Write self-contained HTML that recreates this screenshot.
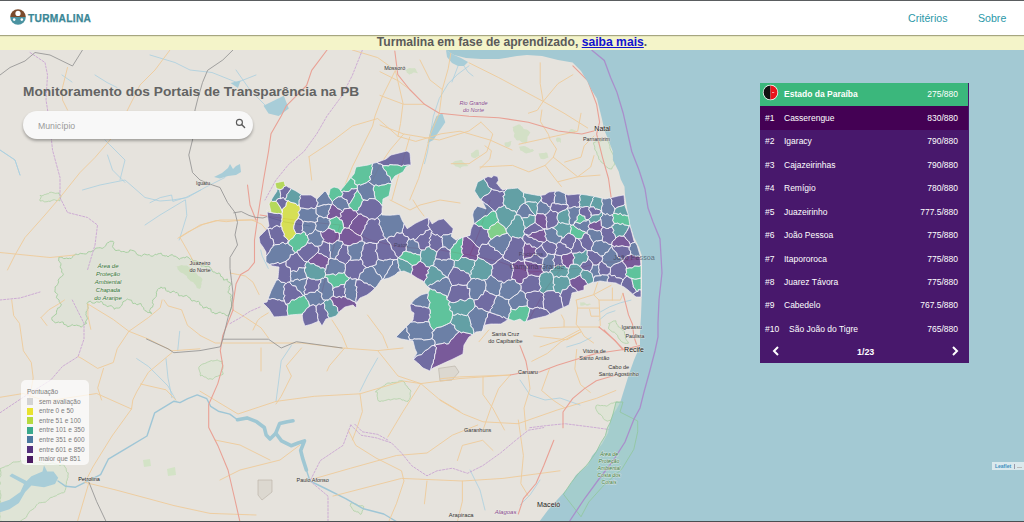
<!DOCTYPE html>
<html><head><meta charset="utf-8"><title>Turmalina</title>
<style>
*{box-sizing:border-box}
html,body{margin:0;padding:0;width:1024px;height:522px;overflow:hidden;background:#e6e3dd;font-family:"Liberation Sans",sans-serif}
#map{position:absolute;left:0;top:0;width:1024px;height:522px;overflow:hidden}
#map svg{position:absolute;left:0;top:0}
#topline{position:absolute;left:0;top:0;width:1024px;height:1px;background:#5a5d60;z-index:20}
#botline{position:absolute;left:0;top:521px;width:1024px;height:1px;background:#4a4f52;z-index:20}
#hdr{position:absolute;left:0;top:1px;width:1024px;height:34px;background:#fff;z-index:10;box-shadow:0 1px 1px rgba(70,70,40,.45)}
#logo{position:absolute;left:10px;top:8.4px;width:16px;height:16px}
#brand{position:absolute;left:28px;top:11.7px;font-weight:700;font-size:10.2px;letter-spacing:0.3px;color:#3a8796;-webkit-text-stroke:0.25px #3a8796}
.nav{position:absolute;top:10.5px;font-size:10.6px;color:#2a98a8}
#banner{position:absolute;left:0;top:35px;width:1024px;height:15px;background:#f4f4c9;z-index:9;text-align:center;font-weight:700;font-size:12.15px;line-height:15px;color:#5a5a5a}
#banner a{color:#1212d0;text-decoration:underline}
#title{position:absolute;left:23px;top:84px;font-size:13.7px;font-weight:700;color:#636363;white-space:nowrap;z-index:5}
#search{position:absolute;left:23px;top:110.5px;width:230px;height:28.5px;border-radius:15px;background:#f8f8f8;box-shadow:0 2px 3px rgba(0,0,0,.3);z-index:5}
#search span{position:absolute;left:15px;top:10px;font-size:8.7px;color:#9a9a9a}
#panel{position:absolute;left:760px;top:83px;width:208.5px;height:280px;background:#48186c;z-index:5;color:#fff;font-size:8.5px}
.row{position:absolute;left:0;width:208px;height:23.45px}
.row .n{position:absolute;left:5px;top:6.4px}
.row .m{position:absolute;left:24px;top:6.4px}
.row .v{position:absolute;right:10px;top:6.4px}
#legend{position:absolute;left:21px;top:380px;width:68px;height:85px;border-radius:5px;background:rgba(255,255,255,.72);z-index:5;font-size:6.5px;color:#7c7c7c}
#legend .it{position:absolute;left:6px;height:8px}
#legend .sw{position:absolute;left:0;top:0;width:6px;height:7px}
#legend .lb{position:absolute;left:12px;top:-0.5px;white-space:nowrap}
#attr{position:absolute;left:992px;top:462px;width:32px;height:8px;background:rgba(255,255,255,.6);z-index:5;font-size:5px;color:#3a8fbf;font-weight:700}
</style></head><body>
<div id="topline"></div>
<div id="hdr">
 <svg id="logo" viewBox="0 0 16 16" width="16" height="16">
  <path d="M0.2 8 A7.8 7.8 0 0 1 15.8 8 Z" fill="#7b4b2c"/>
  <path d="M0.2 8 A7.8 7.8 0 0 0 15.8 8 Z" fill="#4b93a1"/>
  <circle cx="8" cy="4.4" r="2.6" fill="#fff"/>
  <circle cx="4.2" cy="10.6" r="1.3" fill="#fff"/>
  <circle cx="11.8" cy="10.6" r="1.3" fill="#fff"/>
 </svg>
 <div id="brand">TURMALINA</div>
 <div class="nav" style="left:908px">Critérios</div>
 <div class="nav" style="left:978px">Sobre</div>
</div>
<div id="banner">Turmalina em fase de aprendizado, <a>saiba mais</a>.</div>
<div id="map"><svg width="1024" height="522" viewBox="0 0 1024 522">
<rect width="1024" height="522" fill="#e6e3dd"/>
<polygon points="58.9,257.2 60.4,257.2 61.9,257.3 63.7,258.6 65.2,258.5 66.6,258.1 68.1,258.6 69.5,258.2 71.1,258.6 72.3,257.3 73.3,255.5 74.6,254.9 75.9,254.0 77.5,254.6 78.9,254.3 80.2,253.3 81.9,253.6 83.5,253.7 85.1,254.0 86.6,253.8 87.8,252.1 89.2,251.6 90.9,251.8 92.1,251.0 93.6,250.7 94.7,249.7 95.6,248.2 97.1,248.0 98.6,247.8 100.2,247.7 102.1,248.4 103.4,247.8 104.5,246.7 105.7,245.8 106.5,243.9 107.5,242.7 109.0,242.3 110.0,241.2 113.1,241.3 113.8,242.5 113.3,244.5 112.5,246.7 113.3,247.9 114.3,248.9 115.0,250.2 117.0,250.6 117.8,250.2 119.3,250.2 121.1,251.7 122.6,251.5 124.1,251.5 125.8,252.4 127.3,252.3 128.8,252.0 129.9,249.9 131.5,250.2 133.1,250.6 134.6,251.0 135.7,252.4 136.7,254.2 138.0,255.0 139.6,255.4 141.5,256.1 143.1,254.7 144.6,254.0 146.1,254.6 147.6,254.9 149.1,254.5 150.5,255.8 152.0,256.3 153.5,255.9 155.1,254.2 156.6,254.7 158.1,253.8 159.6,253.5 161.2,253.2 162.4,255.4 163.8,255.6 165.2,256.0 166.7,255.7 168.0,256.9 169.5,255.6 170.9,255.0 172.4,254.6 173.7,256.3 175.1,256.1 176.5,257.0 177.8,257.7 179.1,259.4 180.6,258.3 182.1,257.9 183.5,257.4 184.9,257.9 186.4,256.7 187.8,257.1 189.1,258.1 190.5,259.4 191.3,258.6 192.5,259.6 193.3,261.0 195.5,260.8 197.0,261.3 198.4,262.1 200.1,262.4 200.4,264.5 201.3,266.2 203.3,265.7 204.6,266.2 206.0,266.8 208.0,266.1 209.4,266.6 210.3,268.0 211.5,268.9 212.1,270.7 213.1,272.0 214.7,272.1 215.8,273.0 217.2,273.6 219.2,272.9 220.2,274.1 220.7,276.3 222.1,276.7 223.1,278.0 223.6,280.1 225.5,279.7 227.4,279.0 227.2,280.5 228.1,281.8 230.4,282.8 231.3,284.1 229.9,285.8 229.0,287.4 229.3,288.8 228.9,290.4 227.9,292.0 228.8,293.3 230.8,294.3 231.3,295.7 230.6,297.3 231.0,298.6 230.7,299.9 231.1,301.4 231.9,302.9 231.8,304.3 232.3,305.8 231.5,307.1 231.7,308.6 230.6,309.9 230.3,311.3 229.8,312.6 229.5,314.2 227.7,315.7 226.2,315.5 224.8,314.2 223.4,313.4 221.8,313.5 220.5,312.1 218.9,312.4 217.1,313.5 214.9,313.8 214.0,312.5 212.2,312.7 211.2,311.5 210.8,308.9 209.3,308.7 207.8,308.4 206.9,307.0 205.0,307.6 203.1,308.1 202.4,306.2 201.3,305.2 199.9,304.7 199.5,302.3 198.4,301.2 196.5,301.8 195.3,301.1 193.9,300.5 192.0,301.1 190.9,300.0 190.2,298.2 188.9,297.5 187.7,296.6 186.7,295.4 185.0,295.8 183.1,296.5 181.9,295.7 180.4,295.7 178.8,295.8 178.1,293.7 177.1,292.5 175.5,292.7 174.4,291.6 173.1,291.1 170.9,292.6 169.5,292.3 168.5,291.0 166.8,291.3 165.8,290.2 165.3,287.8 163.6,288.0 162.0,288.1 161.0,286.9 160.3,288.2 158.6,288.6 157.5,289.5 157.1,291.0 156.3,292.2 156.6,294.2 156.3,295.0 156.3,296.4 155.3,297.6 154.2,298.8 152.6,300.0 152.7,301.4 152.4,302.8 153.5,304.4 152.9,305.7 152.6,307.1 150.6,308.2 150.1,309.5 149.4,310.8 150.6,312.4 151.4,313.9 150.8,312.2 148.9,312.6 147.3,312.3 146.4,311.1 145.0,310.7 144.0,309.6 143.6,307.7 142.5,306.8 141.6,305.6 140.9,303.5 139.1,303.9 137.0,304.9 136.0,303.8 134.7,303.3 132.9,303.6 132.1,302.0 131.5,300.2 130.0,300.0 128.6,299.6 127.4,299.0 126.7,299.4 125.8,300.6 124.3,301.1 122.9,301.9 122.5,303.6 121.9,305.2 120.8,306.3 120.0,307.6 118.4,308.1 116.2,308.0 114.7,308.6 114.4,309.3 113.7,307.7 112.4,306.9 111.4,305.6 109.3,306.0 107.1,306.7 106.1,305.3 104.7,304.8 103.1,304.4 102.5,302.4 101.0,301.4 99.5,302.3 97.9,302.0 96.4,301.7 94.9,303.0 93.4,303.2 91.8,302.8 90.3,301.0 87.9,302.2 87.1,303.5 87.9,305.2 87.8,306.6 88.3,308.2 87.4,309.4 87.1,310.8 86.0,311.9 86.2,313.4 85.9,314.8 86.4,315.7 87.1,317.2 87.4,318.8 86.1,320.8 85.1,322.7 86.8,323.1 85.4,324.0 84.0,324.6 82.6,325.8 81.3,327.2 79.7,326.0 78.2,325.6 76.6,325.1 75.2,325.5 73.7,325.5 72.1,324.6 70.8,325.7 69.2,326.3 67.5,326.8 66.6,325.1 65.2,324.7 63.8,324.3 63.1,322.0 61.6,322.0 59.8,322.7 58.6,322.0 56.9,322.5 55.3,322.8 54.1,321.9 53.0,320.6 52.1,320.2 51.7,318.3 52.3,317.0 53.8,316.2 54.7,315.0 56.3,314.2 56.5,312.7 56.5,311.0 57.2,309.7 57.5,308.2 59.4,307.6 60.8,305.7 61.3,304.1 60.0,302.9 59.2,301.5 59.1,300.1 57.8,298.9 56.3,297.7 56.8,296.1 57.6,294.4 56.4,293.1 54.9,292.0 55.0,290.4 55.2,288.6 55.1,286.9 56.5,285.9 57.4,284.7 58.1,283.3 58.6,281.9 58.1,280.1 59.1,278.9 59.9,277.6 61.6,276.7 63.3,274.8 62.9,273.4 61.6,272.1 61.7,270.7 61.7,269.2 60.5,268.0 60.2,266.6 60.9,265.0 60.9,263.6 60.1,262.3 58.7,261.0" fill="#dfe2d7" stroke="#a9d0a3" stroke-width="1"/>
<polygon points="0.1,468.6 1.5,468.1 2.8,467.5 4.2,467.1 5.5,466.2 6.9,465.9 8.3,465.6 9.5,464.6 10.8,463.9 12.0,462.8 13.2,462.0 14.8,462.0 16.3,461.9 17.8,461.8 19.4,461.7 20.3,460.9 21.8,461.0 23.2,461.0 24.6,461.1 26.1,460.4 27.5,461.2 28.8,461.8 30.2,462.5 31.7,462.3 33.0,463.2 34.4,463.1 35.9,462.7 37.4,462.0 38.8,462.6 40.2,462.6 41.7,462.6 43.0,463.2 44.4,464.0 45.8,464.1 47.3,463.6 48.7,463.8 50.2,463.6 51.6,463.2 53.1,462.7 54.4,463.8 55.9,464.1 57.2,464.5 58.7,464.5 60.0,465.4 61.5,464.7 63.5,464.7 64.4,465.9 65.0,467.1 66.0,468.2 66.3,469.8 66.5,471.5 67.5,472.5 68.1,472.7 68.2,474.3 67.9,475.8 68.1,477.4 67.4,478.7 67.2,480.2 66.4,481.6 66.5,483.1 66.1,484.6 66.3,486.2 65.9,487.6 65.6,489.1 65.0,490.5 64.6,492.1 63.3,492.8 61.7,492.9 60.4,493.5 59.1,494.0 57.7,494.5 56.5,495.6 55.2,496.1 53.7,496.5 52.5,497.2 51.0,497.5 49.7,498.2 48.7,499.6 47.6,500.3 46.5,501.3 45.4,502.2 43.8,502.3 42.3,502.5 40.8,502.7 39.1,502.8 38.0,503.7 37.0,504.7 35.9,505.7 35.2,507.3 34.2,508.4 33.0,509.1 32.1,509.8 30.7,510.6 29.4,511.5 28.7,512.9 27.8,514.1 27.1,515.5 26.5,517.1 25.3,518.0 23.8,518.9 22.4,519.7 21.0,520.7 20.0,521.6 18.6,521.6 17.1,521.7 15.7,521.7 14.3,521.5 12.9,522.1 11.4,523.1 10.0,523.2 8.6,523.0 7.1,522.7 5.7,523.0 4.3,522.1 2.9,521.6 1.4,521.3 -0.2,522.0 -0.3,520.6 -0.4,519.2 -0.2,517.8 0.1,516.3 -0.4,514.9 -0.3,513.5 -0.4,512.1 -0.8,510.7 -0.8,509.3 -1.0,507.9 -0.3,506.5 0.9,505.0 0.9,503.6 0.7,502.2 -0.0,500.8 -0.2,499.4 0.6,498.0 0.7,496.6 0.9,495.1 0.6,493.7 0.0,492.3 0.1,490.9 -0.6,489.5 -1.1,488.1 -0.9,486.7 -0.6,485.3 0.3,483.8 0.2,482.4 -0.6,481.0 -0.8,479.6 -0.8,478.2 0.2,476.8 0.9,475.4 0.7,474.0 0.9,472.5 0.6,471.1 0.4,469.7" fill="#dfe4d6" stroke="#b0d2a6" stroke-width="0.8"/>
<polygon points="40.0,195.3 41.6,195.8 43.0,195.5 44.3,194.6 45.7,194.4 47.1,193.8 48.5,193.6 49.8,192.4 51.3,192.2 52.8,192.6 54.3,193.0 55.8,193.4 57.2,193.0 58.7,193.6 58.9,192.5 59.3,193.9 60.2,195.3 61.0,196.8 60.4,198.2 60.0,199.6 60.0,200.9 58.6,200.4 57.1,200.6 55.7,200.2 54.3,199.7 52.9,200.0 51.4,200.7 50.0,201.4 48.6,201.2 47.1,201.7 45.7,201.8 44.3,201.8 42.9,200.7 41.4,200.9 40.0,201.0 39.9,199.5 40.8,198.0 41.1,196.5" fill="#dfe4d6" stroke="#b0d2a6" stroke-width="0.8"/>
<polygon points="200.0,365.8 201.3,364.8 202.7,364.0 204.3,363.6 205.8,363.1 207.2,362.3 208.7,361.7 210.0,361.2 211.4,360.5 212.8,361.0 214.3,360.7 215.7,360.5 217.1,359.9 218.5,360.7 220.0,361.2 221.4,361.6 222.1,360.8 222.1,362.2 222.0,363.6 222.7,365.0 222.8,366.4 222.9,367.9 222.6,369.3 221.9,370.7 222.6,372.1 223.2,374.1 221.9,374.9 220.4,375.2 218.9,375.7 217.5,376.3 216.0,376.6 214.7,377.3 213.6,378.5 212.9,379.3 211.4,379.0 210.0,378.7 208.3,379.2 207.0,378.3 205.8,377.2 204.3,377.1 203.1,375.9 201.7,375.3 200.6,376.0 200.2,374.5 200.4,373.1 199.7,371.6 199.3,370.2 198.8,368.7 198.8,367.3" fill="#dfe4d6" stroke="#b0d2a6" stroke-width="0.8"/>
<polygon points="375.4,391.8 376.6,390.9 377.6,389.8 378.9,389.1 380.2,388.3 381.3,387.3 382.7,386.6 384.0,385.9 385.0,384.7 386.3,383.9 387.7,383.1 389.1,383.0 390.6,383.3 391.9,382.6 393.3,382.5 394.7,382.4 396.1,382.3 397.5,382.2 398.7,381.1 400.1,380.9 401.5,380.7 402.9,381.1 404.0,382.0 405.0,383.1 405.3,384.6 406.2,385.7 407.4,386.5 408.0,387.9 408.9,389.0 410.2,389.8 410.9,391.2 410.2,392.6 410.0,394.1 410.4,395.8 410.2,397.3 409.9,398.8 408.6,400.0 408.0,401.4 406.5,401.3 405.0,400.9 403.6,400.0 402.0,400.1 400.7,398.9 399.2,398.6 397.6,398.9 396.0,399.2 394.6,398.8 393.1,399.1 391.7,399.6 390.3,400.0 388.7,399.4 387.3,399.8 385.9,400.3 384.5,400.6 383.1,401.1 381.6,400.9 380.0,401.5 378.3,400.8 377.7,399.5 377.6,397.9 377.2,396.5 377.1,394.9 377.5,393.1 376.9,391.8" fill="#dfe4d6" stroke="#b0d2a6" stroke-width="0.8"/>
<polygon points="596.2,405.5 597.6,405.0 599.0,405.3 600.5,405.7 601.9,405.4 603.4,405.7 604.8,405.6 606.4,406.1 607.7,405.6 609.0,404.6 610.3,403.8 611.7,403.1 613.1,403.2 614.4,402.3 615.8,402.0 617.2,402.0 618.8,402.6 620.3,403.2 621.3,402.3 621.6,403.8 621.8,405.3 621.1,406.8 620.8,408.3 621.5,409.8 621.7,411.3 622.3,412.8 622.3,414.3 622.5,415.8 622.6,417.3 621.8,418.8 621.4,420.3 621.7,421.3 620.1,421.9 618.7,422.2 617.3,421.6 615.9,420.9 614.5,420.7 613.1,420.7 611.8,419.8 610.3,420.2 608.8,420.7 607.3,421.1 605.7,420.3 604.2,419.6 603.1,418.2 602.5,416.4 601.2,415.3 600.2,414.1 598.8,413.9 597.8,412.4 596.9,411.0 596.2,409.5 595.6,408.0" fill="#dfe4d6" stroke="#b0d2a6" stroke-width="0.8"/>
<polygon points="351.0,502.9 352.5,502.8 353.8,503.5 355.2,503.9 356.6,504.1 357.8,505.5 359.2,505.7 360.7,505.8 362.2,505.6 363.7,506.4 363.6,508.0 363.2,509.6 362.2,511.0 361.9,512.6 360.9,514.4 359.4,513.6 358.3,511.9 356.5,511.9 355.1,511.0 354.0,511.2 353.0,509.8 352.1,508.4 351.3,507.0 350.2,505.7" fill="#dfe4d6" stroke="#b0d2a6" stroke-width="0.8"/>
<polygon points="593.5,142.7 595.0,142.1 596.4,141.6 598.0,141.8 599.6,141.9 601.0,141.0 602.5,140.6 604.0,140.5 605.4,140.0 607.0,140.8 608.5,141.6 608.9,143.2 609.5,144.7 610.0,146.2 609.9,148.1 610.3,149.1 610.9,150.6 611.7,151.9 612.4,153.3 613.2,154.7 613.9,156.1 613.9,157.7 613.4,159.3 613.7,160.8 614.6,162.1 614.6,163.8 614.0,165.3 612.8,166.6 611.9,168.0 611.8,169.0 610.0,168.9 608.4,168.4 607.1,167.3 605.7,166.5 604.8,165.4 604.2,164.0 602.8,163.2 601.4,162.3 600.7,161.0 599.6,160.0 598.7,158.8 598.6,157.0 597.9,155.7 597.2,154.7 596.9,153.1 596.4,151.7 595.4,150.4 594.7,149.0 594.8,147.4 594.5,145.9 593.8,144.5" fill="#dfe4d6" stroke="#b0d2a6" stroke-width="0.8"/>
<polygon points="608.5,323.6 610.1,323.1 611.7,322.1 613.2,321.1 615.8,320.8 616.1,322.7 616.8,324.1 617.8,325.3 618.4,326.9 619.8,327.4 621.1,328.4 621.9,329.7 623.4,330.6 624.5,331.7 624.6,333.4 625.0,335.0 625.5,336.4 625.3,338.0 625.8,339.4 627.0,340.5 627.8,341.7 628.5,343.1 626.7,343.4 624.8,343.2 623.4,342.7 621.9,341.9 620.7,340.9 620.0,339.5 618.7,338.6 618.0,337.1 617.6,335.4 616.4,334.4 615.4,333.2 614.3,332.2 612.4,331.9 611.2,331.1 610.2,329.9 608.5,328.6 608.8,326.6 609.6,324.5" fill="#dfe4d6" stroke="#b0d2a6" stroke-width="0.8"/>
<polygon points="175.0,266.3 176.7,266.2 178.3,266.2 180.0,265.4 181.7,264.9 183.4,265.6 185.1,265.4 186.7,265.4 187.9,265.9 188.9,267.2 190.4,267.9 191.5,269.1 193.0,269.8 194.4,270.7 195.1,272.3 196.4,273.3 197.3,274.6 198.3,275.9 200.0,276.5 201.2,277.6 202.5,279.1 202.2,280.7 201.5,282.3 201.6,284.0 201.1,285.6 201.1,287.3 199.7,289.1 198.3,288.5 196.8,287.9 196.2,286.3 195.4,284.8 194.3,283.8 193.5,282.4 192.1,281.7 190.5,281.2 189.6,280.0 188.4,279.0 187.3,277.8 186.8,276.1 185.5,275.2 184.2,274.2 183.0,273.2 181.1,272.8 179.8,271.8 178.9,270.5 177.7,269.4 177.4,267.5 176.8,265.9" fill="#cfdfc2"/>
<polygon points="512.6,127.1 514.1,126.5 515.5,125.7 516.9,125.2 518.3,124.4 520.2,124.4 521.1,125.9 522.5,126.8 523.3,128.5 524.7,129.3 526.8,129.4 528.1,130.3 530.4,132.4 529.5,133.8 528.8,135.2 527.6,136.5 527.5,138.1 527.3,139.7 527.4,141.4 525.8,143.6 524.2,142.8 522.4,142.8 520.9,141.6 519.5,140.3 517.7,140.4 516.2,140.0 515.4,138.4 514.0,137.1 513.9,135.3 514.6,133.4 513.8,131.9 513.0,130.4 513.2,128.6" fill="#d3e0c6"/>
<polygon points="519.0,146.8 520.6,146.5 522.2,146.3 523.8,146.1 525.4,146.3 526.3,146.9 527.8,147.4 529.1,148.3 530.4,149.4 532.5,149.0 534.0,150.5 532.6,151.7 531.0,152.3 529.3,152.8 527.5,153.1 526.6,153.4 524.8,152.9 523.4,151.9 522.0,151.0 520.3,150.4 519.8,148.5" fill="#d3e0c6"/>
<polygon points="538.6,153.5 540.5,153.3 542.3,153.1 544.2,152.9 546.1,152.2 547.5,153.5 547.8,155.4 548.5,157.4 546.9,158.0 545.3,158.8 543.6,159.2 541.8,158.9 540.5,158.8 540.0,157.3 539.3,156.0 539.0,154.5" fill="#d3e0c6"/>
<polygon points="504.5,142.7 506.1,142.3 507.8,142.2 509.4,141.5 511.6,141.1 510.9,142.6 510.9,144.3 510.0,146.3 508.3,147.3 506.7,147.1 504.8,145.8 504.6,143.9" fill="#d3e0c6"/>
<polygon points="556.5,137.7 558.1,137.6 559.8,137.8 560.2,137.6 560.9,139.3 560.9,140.9 561.0,142.9 559.0,141.5 557.9,142.5 556.2,141.1 556.0,139.6" fill="#d3e0c6"/>
<polygon points="569.6,130.1 571.1,129.1 572.8,129.2 574.4,130.2 575.5,129.4 575.3,131.1 575.0,133.5 573.3,133.6 571.7,133.6 568.3,133.0" fill="#d3e0c6"/>
<polygon points="580.3,302.3 581.8,302.5 583.4,302.3 584.9,302.8 586.3,303.9 587.9,304.0 589.5,303.6 591.1,304.2 589.2,305.0 588.5,305.6 586.8,305.8 585.3,304.8 583.5,305.6 581.8,305.8 580.1,305.5" fill="#d3e0c6"/>
<polygon points="452.1,163.3 453.5,162.0 455.1,161.1 456.8,160.8 458.5,160.6 460.2,160.1 462.1,159.9 462.6,161.8 463.9,162.6 465.2,163.4 466.6,164.2 468.5,166.0 466.6,166.3 464.6,166.2 462.7,166.4 461.1,167.2 460.4,168.5 459.1,167.4 457.5,166.8 455.6,166.6 454.5,165.2 453.1,164.3" fill="#d3e0c6"/>
<polygon points="405.1,70.3 406.7,69.6 408.2,68.4 409.8,68.0 411.6,68.2 413.3,68.3 414.8,68.1 416.1,69.6 416.7,71.5 418.1,73.3 416.4,73.0 414.7,72.4 413.2,72.5 411.9,73.7 410.4,74.1 409.3,74.7 408.2,73.6 406.8,72.7 406.3,71.0" fill="#d3e0c6"/>
<polygon points="470.3,153.3 471.9,152.9 473.4,152.1 474.8,150.7 476.2,149.8 478.5,149.8 478.8,151.4 479.2,152.9 478.9,154.7 479.9,155.3 478.4,156.2 476.9,157.1 475.4,158.2 473.7,157.9 471.7,157.1 470.9,155.5 471.2,153.5" fill="#d3e0c6"/>
<polygon points="143.0,460.0 150.0,459.0 151.0,466.0 144.0,467.0" fill="#d3e3c6"/>
<polygon points="167.0,469.0 175.0,467.0 176.0,475.0 168.0,476.0" fill="#d3e3c6"/>
<polygon points="438.6,368.4 455.0,366.0 459.0,372.0 452.0,380.0 440.0,381.0" fill="#dcd8d0" stroke="#bdb6aa" stroke-width="0.7"/>
<polygon points="258.0,480.0 272.0,480.0 272.0,492.0 262.0,500.0 258.0,495.0" fill="#dcd8d0" stroke="#bdb6aa" stroke-width="0.7"/>
<polyline points="458.0,66.0 455.0,74.0 452.0,82.0" fill="none" stroke="#a9cfe0" stroke-width="0.8" stroke-linejoin="round" stroke-linecap="round" />
<polyline points="464.0,66.0 468.0,72.0 473.0,76.0" fill="none" stroke="#a9cfe0" stroke-width="0.8" stroke-linejoin="round" stroke-linecap="round" />
<polyline points="260.7,250.0 262.2,256.1 268.3,268.4" fill="none" stroke="#a9cfe0" stroke-width="0.8" stroke-linejoin="round" stroke-linecap="round" />
<polyline points="600.3,312.0 609.7,306.8 620.4,302.8 631.0,300.1" fill="none" stroke="#a9cfe0" stroke-width="0.8" stroke-linejoin="round" stroke-linecap="round" />
<polyline points="599.0,320.2 607.0,313.5 615.0,310.8" fill="none" stroke="#a9cfe0" stroke-width="0.8" stroke-linejoin="round" stroke-linecap="round" />
<polyline points="591.0,337.6 580.2,343.0 566.8,347.0" fill="none" stroke="#a9cfe0" stroke-width="0.8" stroke-linejoin="round" stroke-linecap="round" />
<polyline points="150.0,55.0 175.0,62.5 190.0,70.0 212.0,72.5 237.0,82.5 256.0,75.0" fill="none" stroke="#a9cfe0" stroke-width="0.8" stroke-linejoin="round" stroke-linecap="round" />
<polyline points="95.0,75.0 107.0,82.5 117.0,87.5" fill="none" stroke="#a9cfe0" stroke-width="0.8" stroke-linejoin="round" stroke-linecap="round" />
<polyline points="62.0,75.0 72.0,82.0" fill="none" stroke="#a9cfe0" stroke-width="0.8" stroke-linejoin="round" stroke-linecap="round" />
<polyline points="105.0,140.0 115.0,150.0 125.0,160.0 120.0,180.0" fill="none" stroke="#a9cfe0" stroke-width="0.8" stroke-linejoin="round" stroke-linecap="round" />
<polyline points="0.0,150.0 15.0,160.0 20.0,175.0" fill="none" stroke="#a9cfe0" stroke-width="0.8" stroke-linejoin="round" stroke-linecap="round" />
<polyline points="150.0,202.7 160.2,197.6 171.6,195.0 172.8,201.4 185.5,197.6 200.8,190.0" fill="none" stroke="#a9cfe0" stroke-width="0.8" stroke-linejoin="round" stroke-linecap="round" />
<polyline points="185.5,200.2 186.8,215.4 183.0,228.0 179.2,240.0" fill="none" stroke="#a9cfe0" stroke-width="0.8" stroke-linejoin="round" stroke-linecap="round" />
<polyline points="136.7,358.6 148.4,366.4 156.3,374.2 168.0,386.0 175.8,400.0" fill="none" stroke="#a9cfe0" stroke-width="0.8" stroke-linejoin="round" stroke-linecap="round" />
<polyline points="179.7,331.3 177.7,350.8" fill="none" stroke="#a9cfe0" stroke-width="0.8" stroke-linejoin="round" stroke-linecap="round" />
<polyline points="166.0,358.6 168.0,378.0 171.9,397.7" fill="none" stroke="#a9cfe0" stroke-width="0.8" stroke-linejoin="round" stroke-linecap="round" />
<polyline points="82.5,190.0 100.0,185.0 125.0,180.0 145.0,197.5 160.0,201.0 172.5,200.0 187.5,197.5 205.0,187.5 225.0,177.5" fill="none" stroke="#a9cfe0" stroke-width="0.8" stroke-linejoin="round" stroke-linecap="round" />
<polyline points="107.5,155.0 112.5,170.0 125.0,182.5" fill="none" stroke="#a9cfe0" stroke-width="0.8" stroke-linejoin="round" stroke-linecap="round" />
<polyline points="145.0,225.0 160.0,215.0 185.0,200.0" fill="none" stroke="#a9cfe0" stroke-width="0.8" stroke-linejoin="round" stroke-linecap="round" />
<polyline points="377.7,358.0 367.5,376.0 360.0,391.2" fill="none" stroke="#a9cfe0" stroke-width="0.8" stroke-linejoin="round" stroke-linecap="round" />
<polyline points="291.4,345.5 281.2,360.8 278.7,381.0 276.0,401.4" fill="none" stroke="#a9cfe0" stroke-width="0.8" stroke-linejoin="round" stroke-linecap="round" />
<polyline points="0.0,150.0 15.0,160.0 20.0,175.0" fill="none" stroke="#a9cfe0" stroke-width="0.8" stroke-linejoin="round" stroke-linecap="round" />
<polyline points="236.0,70.0 250.0,90.0 265.0,105.0" fill="none" stroke="#a9cfe0" stroke-width="0.8" stroke-linejoin="round" stroke-linecap="round" />
<polyline points="469.0,65.8 457.2,74.7 448.2,83.6 439.3,98.4 433.4,116.2 430.4,134.0 427.5,151.8 424.5,163.7" fill="none" stroke="#a9cfe0" stroke-width="0.8" stroke-linejoin="round" stroke-linecap="round" />
<polyline points="520.0,380.0 530.0,395.0 545.0,400.0 560.0,398.0 580.0,405.0" fill="none" stroke="#a9cfe0" stroke-width="0.8" stroke-linejoin="round" stroke-linecap="round" />
<polyline points="470.0,470.0 480.0,490.0 485.0,510.0" fill="none" stroke="#a9cfe0" stroke-width="0.8" stroke-linejoin="round" stroke-linecap="round" />
<polyline points="540.0,480.0 530.0,495.0 520.0,505.0" fill="none" stroke="#a9cfe0" stroke-width="0.8" stroke-linejoin="round" stroke-linecap="round" />
<polyline points="58.0,481.0 65.7,486.3 75.5,487.2 88.0,480.9 100.6,474.6 108.3,459.2 127.6,447.6 147.0,436.0 154.7,412.8 174.0,401.2 180.0,402.6 187.7,398.7 197.2,394.9 206.8,398.7 210.7,406.4 218.3,411.2 229.8,414.1 237.5,419.8" fill="none" stroke="#9fc6d6" stroke-width="1.4" stroke-linejoin="round" stroke-linecap="round" />
<polyline points="306.4,470.0 310.0,481.0 325.4,488.5 345.7,498.7 363.5,508.8 383.8,514.0 396.4,521.5" fill="none" stroke="#9fc6d6" stroke-width="1.4" stroke-linejoin="round" stroke-linecap="round" />
<polyline points="237.5,419.8 247.0,417.9 256.6,421.7 264.3,427.5 266.2,435.1 270.0,439.0 275.8,433.2 281.5,440.9 291.1,445.7 298.8,442.8 304.5,440.9 300.7,450.5 302.6,458.1 306.4,470.0" fill="none" stroke="#9fc7d3" stroke-width="3.6" stroke-linejoin="round" stroke-linecap="round" />
<polyline points="275.8,433.2 279.6,423.6 287.3,421.7 293.0,420.8" fill="none" stroke="#9fc7d3" stroke-width="3.6" stroke-linejoin="round" stroke-linecap="round" />
<polygon points="0.0,502.9 9.4,499.7 20.4,491.9 24.0,484.0 9.4,476.0 12.0,473.5 26.7,480.9 31.4,476.2 42.5,471.4 44.0,465.2 47.2,471.4 53.5,471.4 58.2,477.7 55.0,484.0 44.0,487.2 31.4,485.6 25.2,491.9 18.9,502.9 9.4,509.2 0.0,512.3" fill="#a8cdd8"/>
<polygon points="263.5,105.8 283.8,95.7 288.8,108.4 278.7,116.0 268.5,113.5" fill="#a8cdd8"/>
<polygon points="230.5,83.0 240.6,80.5 238.0,88.0" fill="#a8cdd8"/>
<polygon points="214.0,177.0 222.0,173.0 228.0,168.0 230.0,164.0 233.0,169.0 236.0,166.0 240.0,164.0 241.0,172.0 236.0,175.0 228.0,176.0 220.0,178.5" fill="#a8cdd8"/>
<polygon points="446.0,50.0 454.0,55.0 461.0,58.0 468.0,62.0 464.0,66.0 458.0,66.0 452.0,63.0 447.0,57.0" fill="#a8cdd8"/>
<polygon points="436.4,116.2 442.3,113.2 445.3,122.2 439.3,131.0 433.4,140.0 427.5,143.0 430.4,131.0" fill="#a8cdd8"/>
<polyline points="230.0,273.0 237.7,274.5 245.3,276.0 253.0,282.2 256.0,288.3 259.1,294.5" fill="none" stroke="#eecb9a" stroke-width="0.9" stroke-linejoin="round" stroke-linecap="round" />
<polyline points="268.3,312.9 260.7,317.5 257.6,320.6 253.0,330.0" fill="none" stroke="#eecb9a" stroke-width="0.9" stroke-linejoin="round" stroke-linecap="round" />
<polyline points="413.0,200.0 418.0,208.0 424.0,216.0" fill="none" stroke="#eecb9a" stroke-width="0.9" stroke-linejoin="round" stroke-linecap="round" />
<polyline points="390.0,200.0 410.0,210.0 420.0,205.0 440.0,200.0 460.0,203.0" fill="none" stroke="#eecb9a" stroke-width="0.9" stroke-linejoin="round" stroke-linecap="round" />
<polyline points="541.9,110.0 540.3,121.4 548.4,134.4 550.0,139.3 556.5,149.0 553.3,157.2 545.1,165.4 554.9,178.4 561.4,186.5" fill="none" stroke="#eecb9a" stroke-width="0.9" stroke-linejoin="round" stroke-linecap="round" />
<polyline points="519.0,144.2 548.4,137.7 577.7,131.2 581.0,113.3" fill="none" stroke="#eecb9a" stroke-width="0.9" stroke-linejoin="round" stroke-linecap="round" />
<polyline points="484.9,145.8 491.4,150.7 489.8,158.9 480.0,168.6" fill="none" stroke="#eecb9a" stroke-width="0.9" stroke-linejoin="round" stroke-linecap="round" />
<polyline points="480.0,167.0 512.6,165.4 528.9,171.9 545.1,165.4" fill="none" stroke="#eecb9a" stroke-width="0.9" stroke-linejoin="round" stroke-linecap="round" />
<polyline points="553.3,157.2 577.7,176.8 590.7,167.0 594.0,155.6" fill="none" stroke="#eecb9a" stroke-width="0.9" stroke-linejoin="round" stroke-linecap="round" />
<polyline points="564.7,162.1 581.0,157.2 584.2,145.8 594.0,136.0" fill="none" stroke="#eecb9a" stroke-width="0.9" stroke-linejoin="round" stroke-linecap="round" />
<polyline points="558.2,181.7 577.7,176.8 600.0,175.1" fill="none" stroke="#eecb9a" stroke-width="0.9" stroke-linejoin="round" stroke-linecap="round" />
<polyline points="597.6,282.7 593.6,294.7 599.0,300.1 600.3,325.6 599.0,327.0" fill="none" stroke="#eecb9a" stroke-width="0.9" stroke-linejoin="round" stroke-linecap="round" />
<polyline points="576.2,300.1 593.6,294.7 611.0,285.4" fill="none" stroke="#eecb9a" stroke-width="0.9" stroke-linejoin="round" stroke-linecap="round" />
<polyline points="577.5,308.1 599.0,308.1" fill="none" stroke="#eecb9a" stroke-width="0.9" stroke-linejoin="round" stroke-linecap="round" />
<polyline points="576.2,300.1 577.5,308.1 576.2,324.2 580.2,329.6 584.2,336.3 593.6,343.0" fill="none" stroke="#eecb9a" stroke-width="0.9" stroke-linejoin="round" stroke-linecap="round" />
<polyline points="540.0,328.3 564.1,327.0 580.2,327.0 599.0,327.0" fill="none" stroke="#eecb9a" stroke-width="0.9" stroke-linejoin="round" stroke-linecap="round" />
<polyline points="561.4,314.9 564.1,320.2 564.1,327.0" fill="none" stroke="#eecb9a" stroke-width="0.9" stroke-linejoin="round" stroke-linecap="round" />
<polyline points="599.0,300.1 620.4,300.1 623.0,293.4" fill="none" stroke="#eecb9a" stroke-width="0.9" stroke-linejoin="round" stroke-linecap="round" />
<polyline points="589.6,309.5 591.0,316.2 599.0,316.2" fill="none" stroke="#eecb9a" stroke-width="0.9" stroke-linejoin="round" stroke-linecap="round" />
<polyline points="612.4,288.0 612.4,300.1" fill="none" stroke="#eecb9a" stroke-width="0.9" stroke-linejoin="round" stroke-linecap="round" />
<polyline points="540.0,347.0 560.1,340.3 580.2,329.6" fill="none" stroke="#eecb9a" stroke-width="0.9" stroke-linejoin="round" stroke-linecap="round" />
<polyline points="177.9,238.2 188.0,231.9 203.3,224.3 216.0,220.5 226.1,221.7 237.6,220.5 251.5,219.8 261.7,224.3 266.8,230.6" fill="none" stroke="#eecb9a" stroke-width="0.9" stroke-linejoin="round" stroke-linecap="round" />
<polyline points="11.7,300.0 13.7,315.6 19.5,323.4 23.4,350.8 31.3,362.5 33.2,378.0 29.3,400.0" fill="none" stroke="#eecb9a" stroke-width="0.9" stroke-linejoin="round" stroke-linecap="round" />
<polyline points="41.0,317.6 48.8,309.8 58.6,304.0 64.5,300.0" fill="none" stroke="#eecb9a" stroke-width="0.9" stroke-linejoin="round" stroke-linecap="round" />
<polyline points="41.0,317.6 46.9,325.4" fill="none" stroke="#eecb9a" stroke-width="0.9" stroke-linejoin="round" stroke-linecap="round" />
<polyline points="87.9,304.0 113.3,319.5 128.9,331.3 148.4,339.0 171.9,350.8 200.0,348.8" fill="none" stroke="#eecb9a" stroke-width="0.9" stroke-linejoin="round" stroke-linecap="round" />
<polyline points="128.9,331.3 117.2,348.8 113.3,362.5 97.7,368.4 82.0,358.6 78.1,356.6" fill="none" stroke="#eecb9a" stroke-width="0.9" stroke-linejoin="round" stroke-linecap="round" />
<polyline points="103.5,368.4 97.7,387.9 101.6,400.0" fill="none" stroke="#eecb9a" stroke-width="0.9" stroke-linejoin="round" stroke-linecap="round" />
<polyline points="128.9,331.3 148.4,317.6 160.2,307.8 162.1,300.0" fill="none" stroke="#eecb9a" stroke-width="0.9" stroke-linejoin="round" stroke-linecap="round" />
<polyline points="164.0,300.0 168.0,305.9 181.6,309.8 187.5,325.4 200.0,335.2" fill="none" stroke="#eecb9a" stroke-width="0.9" stroke-linejoin="round" stroke-linecap="round" />
<polyline points="140.6,384.0 166.0,389.8 175.8,400.0" fill="none" stroke="#eecb9a" stroke-width="0.9" stroke-linejoin="round" stroke-linecap="round" />
<polyline points="87.9,304.0 87.9,315.6 90.8,329.3" fill="none" stroke="#eecb9a" stroke-width="0.9" stroke-linejoin="round" stroke-linecap="round" />
<polyline points="451.2,51.0 448.2,68.7 442.3,89.5 439.3,113.2 430.4,134.0 424.5,157.8 418.6,178.5 409.7,200.0" fill="none" stroke="#eecb9a" stroke-width="0.9" stroke-linejoin="round" stroke-linecap="round" />
<polyline points="469.0,62.8 498.7,77.6 543.2,101.4 564.0,113.2 587.7,128.0" fill="none" stroke="#eecb9a" stroke-width="0.9" stroke-linejoin="round" stroke-linecap="round" />
<polyline points="540.2,62.8 540.2,83.6 543.2,101.4 537.3,110.3 528.4,113.2" fill="none" stroke="#eecb9a" stroke-width="0.9" stroke-linejoin="round" stroke-linecap="round" />
<polyline points="572.9,74.7 558.0,83.6 543.2,101.4" fill="none" stroke="#eecb9a" stroke-width="0.9" stroke-linejoin="round" stroke-linecap="round" />
<polyline points="380.0,125.0 403.7,134.0 439.3,140.0 469.0,131.0 480.9,122.2" fill="none" stroke="#eecb9a" stroke-width="0.9" stroke-linejoin="round" stroke-linecap="round" />
<polyline points="480.9,122.2 492.8,134.0 486.8,151.8 469.0,163.7 451.2,163.7" fill="none" stroke="#eecb9a" stroke-width="0.9" stroke-linejoin="round" stroke-linecap="round" />
<polyline points="409.7,137.0 403.7,157.8 397.8,178.5 391.9,200.0" fill="none" stroke="#eecb9a" stroke-width="0.9" stroke-linejoin="round" stroke-linecap="round" />
<polyline points="380.0,71.7 397.8,80.6 409.7,89.5" fill="none" stroke="#eecb9a" stroke-width="0.9" stroke-linejoin="round" stroke-linecap="round" />
<polyline points="380.0,95.4 403.7,104.3 424.5,104.3" fill="none" stroke="#eecb9a" stroke-width="0.9" stroke-linejoin="round" stroke-linecap="round" />
<polyline points="420.0,60.0 430.0,80.0 442.3,89.5" fill="none" stroke="#eecb9a" stroke-width="0.9" stroke-linejoin="round" stroke-linecap="round" />
<polyline points="403.7,134.0 390.0,150.0 380.0,165.0 370.0,185.0" fill="none" stroke="#eecb9a" stroke-width="0.9" stroke-linejoin="round" stroke-linecap="round" />
<polyline points="170.0,50.0 155.0,70.0 140.0,85.0 130.0,105.0 125.0,115.0 110.0,140.0 95.0,157.5 80.0,172.5 60.0,197.5 45.0,215.0 25.0,237.5 15.0,255.0 7.5,270.0" fill="none" stroke="#eecb9a" stroke-width="0.9" stroke-linejoin="round" stroke-linecap="round" />
<polyline points="67.5,67.5 62.5,87.5 62.5,100.0 67.5,110.0" fill="none" stroke="#eecb9a" stroke-width="0.9" stroke-linejoin="round" stroke-linecap="round" />
<polyline points="0.0,252.5 25.0,255.0 50.0,257.5 75.0,255.0" fill="none" stroke="#eecb9a" stroke-width="0.9" stroke-linejoin="round" stroke-linecap="round" />
<polyline points="180.0,237.5 200.0,225.0 220.0,220.0 256.0,220.0" fill="none" stroke="#eecb9a" stroke-width="0.9" stroke-linejoin="round" stroke-linecap="round" />
<polyline points="180.0,237.5 190.0,255.0 195.0,265.0" fill="none" stroke="#eecb9a" stroke-width="0.9" stroke-linejoin="round" stroke-linecap="round" />
<polyline points="352.3,50.0 377.7,57.6 395.4,70.3 382.7,95.7 375.0,116.0 372.6,126.0 362.4,146.4 352.3,166.8 345.0,185.0" fill="none" stroke="#eecb9a" stroke-width="0.9" stroke-linejoin="round" stroke-linecap="round" />
<polyline points="395.4,70.3 403.0,103.3 400.5,123.6 398.0,136.3" fill="none" stroke="#eecb9a" stroke-width="0.9" stroke-linejoin="round" stroke-linecap="round" />
<polyline points="309.0,156.6 332.0,141.4 352.3,126.0 377.7,118.5 398.0,136.3 415.7,141.4 441.0,133.8 460.0,131.2 490.0,140.0 512.0,150.0" fill="none" stroke="#eecb9a" stroke-width="0.9" stroke-linejoin="round" stroke-linecap="round" />
<polyline points="309.0,156.6 311.7,180.0" fill="none" stroke="#eecb9a" stroke-width="0.9" stroke-linejoin="round" stroke-linecap="round" />
<polyline points="200.0,335.4 215.2,343.0 250.8,343.0 276.0,343.0 301.5,343.0 342.1,348.0 377.7,350.6 403.0,348.0" fill="none" stroke="#eecb9a" stroke-width="0.9" stroke-linejoin="round" stroke-linecap="round" />
<polyline points="233.0,310.0 245.7,317.6 261.0,327.8 268.5,338.0" fill="none" stroke="#eecb9a" stroke-width="0.9" stroke-linejoin="round" stroke-linecap="round" />
<polyline points="261.0,348.0 261.0,371.0" fill="none" stroke="#eecb9a" stroke-width="0.9" stroke-linejoin="round" stroke-linecap="round" />
<polyline points="344.7,348.0 329.4,365.8 327.0,371.0" fill="none" stroke="#eecb9a" stroke-width="0.9" stroke-linejoin="round" stroke-linecap="round" />
<polyline points="301.5,348.0 286.3,365.8 291.4,376.0 281.2,396.3 276.0,404.0" fill="none" stroke="#eecb9a" stroke-width="0.9" stroke-linejoin="round" stroke-linecap="round" />
<polyline points="200.0,391.2 238.0,414.0 276.0,401.4 314.2,396.3 360.0,393.8 403.0,381.0 420.8,383.6 460.0,378.5 510.3,375.0" fill="none" stroke="#eecb9a" stroke-width="0.9" stroke-linejoin="round" stroke-linecap="round" />
<polyline points="360.0,393.8 362.4,411.5 357.4,426.8 352.3,440.0" fill="none" stroke="#eecb9a" stroke-width="0.9" stroke-linejoin="round" stroke-linecap="round" />
<polyline points="377.7,350.6 398.0,376.0 420.8,383.6 438.6,398.8 460.0,411.5" fill="none" stroke="#eecb9a" stroke-width="0.9" stroke-linejoin="round" stroke-linecap="round" />
<polyline points="420.8,383.6 403.0,411.5 387.8,437.0" fill="none" stroke="#eecb9a" stroke-width="0.9" stroke-linejoin="round" stroke-linecap="round" />
<polyline points="332.0,320.0 342.0,335.4 347.2,348.0" fill="none" stroke="#eecb9a" stroke-width="0.9" stroke-linejoin="round" stroke-linecap="round" />
<polyline points="367.5,315.0 382.7,335.4 387.8,348.0" fill="none" stroke="#eecb9a" stroke-width="0.9" stroke-linejoin="round" stroke-linecap="round" />
<polyline points="440.0,378.8 459.5,376.9 510.3,375.0" fill="none" stroke="#eecb9a" stroke-width="0.9" stroke-linejoin="round" stroke-linecap="round" />
<polyline points="528.0,372.0 530.0,388.6 524.0,408.0 526.0,430.0" fill="none" stroke="#eecb9a" stroke-width="0.9" stroke-linejoin="round" stroke-linecap="round" />
<polyline points="510.3,375.0 498.6,388.6 490.8,408.0 483.0,430.0" fill="none" stroke="#eecb9a" stroke-width="0.9" stroke-linejoin="round" stroke-linecap="round" />
<polyline points="483.0,376.9 483.0,394.5 492.7,408.0 504.5,430.0" fill="none" stroke="#eecb9a" stroke-width="0.9" stroke-linejoin="round" stroke-linecap="round" />
<polyline points="440.0,400.3 463.4,414.0 483.0,421.8 518.0,423.7 557.2,410.0 596.3,398.4 615.8,390.5" fill="none" stroke="#eecb9a" stroke-width="0.9" stroke-linejoin="round" stroke-linecap="round" />
<polyline points="531.8,361.3 547.4,353.4 561.0,341.7 580.6,332.0" fill="none" stroke="#eecb9a" stroke-width="0.9" stroke-linejoin="round" stroke-linecap="round" />
<polyline points="549.4,369.0 541.6,390.5 553.3,400.3 565.0,408.0" fill="none" stroke="#eecb9a" stroke-width="0.9" stroke-linejoin="round" stroke-linecap="round" />
<polyline points="576.7,349.5 574.8,369.0 580.6,384.7 590.4,392.5" fill="none" stroke="#eecb9a" stroke-width="0.9" stroke-linejoin="round" stroke-linecap="round" />
<polyline points="488.8,330.0 479.0,341.7" fill="none" stroke="#eecb9a" stroke-width="0.9" stroke-linejoin="round" stroke-linecap="round" />
<polyline points="533.8,335.9 567.0,339.8 580.6,332.0" fill="none" stroke="#eecb9a" stroke-width="0.9" stroke-linejoin="round" stroke-linecap="round" />
<polyline points="315.2,478.4 350.8,468.2 396.4,455.5 427.0,453.0 452.3,435.2 477.7,425.0" fill="none" stroke="#eecb9a" stroke-width="0.9" stroke-linejoin="round" stroke-linecap="round" />
<polyline points="333.0,496.1 401.5,478.4 462.4,481.0 503.0,478.4 560.0,470.8" fill="none" stroke="#eecb9a" stroke-width="0.9" stroke-linejoin="round" stroke-linecap="round" />
<polyline points="348.2,430.2 355.8,445.4 376.0,458.0 401.5,470.8 404.0,481.0 396.4,503.8 388.8,521.5" fill="none" stroke="#eecb9a" stroke-width="0.9" stroke-linejoin="round" stroke-linecap="round" />
<polyline points="462.4,481.0 462.4,501.2 457.4,521.5" fill="none" stroke="#eecb9a" stroke-width="0.9" stroke-linejoin="round" stroke-linecap="round" />
<polyline points="427.0,481.0 424.4,503.8" fill="none" stroke="#eecb9a" stroke-width="0.9" stroke-linejoin="round" stroke-linecap="round" />
<polyline points="518.3,420.0 523.4,455.5 520.8,483.5 528.4,496.1" fill="none" stroke="#eecb9a" stroke-width="0.9" stroke-linejoin="round" stroke-linecap="round" />
<polyline points="457.4,460.6 462.4,445.4 482.7,440.3 493.0,450.5" fill="none" stroke="#eecb9a" stroke-width="0.9" stroke-linejoin="round" stroke-linecap="round" />
<polyline points="171.9,352.7 148.4,372.3 136.7,391.8 132.8,400.0 131.5,409.0 112.0,436.0 92.8,467.0 85.0,482.4" fill="none" stroke="#eecb9a" stroke-width="0.9" stroke-linejoin="round" stroke-linecap="round" />
<polyline points="0.0,397.3 23.2,393.5 46.4,401.2 96.7,393.5 131.5,409.0" fill="none" stroke="#eecb9a" stroke-width="0.9" stroke-linejoin="round" stroke-linecap="round" />
<polyline points="85.0,482.4 116.0,490.0 174.0,505.6 210.0,513.4 256.0,515.0" fill="none" stroke="#eecb9a" stroke-width="0.9" stroke-linejoin="round" stroke-linecap="round" />
<polyline points="89.0,482.4 77.3,522.0" fill="none" stroke="#eecb9a" stroke-width="0.9" stroke-linejoin="round" stroke-linecap="round" />
<polyline points="220.0,480.0 240.0,470.0 280.0,460.0 300.0,445.0" fill="none" stroke="#eecb9a" stroke-width="0.9" stroke-linejoin="round" stroke-linecap="round" />
<polyline points="215.0,440.0 240.0,445.0 270.0,460.0" fill="none" stroke="#eecb9a" stroke-width="0.9" stroke-linejoin="round" stroke-linecap="round" />
<polyline points="626.0,194.5 646.0,193.5" fill="none" stroke="#c9a5d2" stroke-width="0.9" stroke-linejoin="round" stroke-linecap="round" stroke-dasharray="2,1.6"/>
<polyline points="230.0,323.6 240.7,317.5 250.0,311.3 260.7,306.7" fill="none" stroke="#c9a5d2" stroke-width="0.9" stroke-linejoin="round" stroke-linecap="round" stroke-dasharray="2,1.6"/>
<polyline points="30.0,52.5 45.0,62.5 47.5,75.0 46.0,100.0 50.0,125.0 52.5,150.0 60.0,177.5 60.0,197.5 67.5,212.5 87.5,217.5 97.5,225.0 95.0,245.0 87.5,270.0" fill="none" stroke="#c9a5d2" stroke-width="0.9" stroke-linejoin="round" stroke-linecap="round" stroke-dasharray="2,1.6"/>
<polyline points="362.4,50.0 352.3,75.4 342.0,95.7 327.0,116.0 316.8,133.8 304.0,151.5 288.8,164.2 276.0,180.0 265.0,200.0" fill="none" stroke="#c9a5d2" stroke-width="0.9" stroke-linejoin="round" stroke-linecap="round" stroke-dasharray="2,1.6"/>
<polyline points="354.8,424.2 362.4,431.8 377.7,434.4 387.8,440.0" fill="none" stroke="#c9a5d2" stroke-width="0.9" stroke-linejoin="round" stroke-linecap="round" stroke-dasharray="2,1.6"/>
<polyline points="350.8,425.0 361.0,435.2 376.0,437.8 391.4,442.8 401.5,453.0 411.7,465.7 427.0,475.8 437.0,470.8 452.3,468.2 467.5,473.3 482.7,465.7 500.5,453.0 515.7,440.3 528.4,430.2 543.7,427.6" fill="none" stroke="#c9a5d2" stroke-width="0.9" stroke-linejoin="round" stroke-linecap="round" stroke-dasharray="2,1.6"/>
<polyline points="350.8,425.0 343.0,445.4 320.3,460.6 310.0,481.0 328.0,496.1 328.0,521.5" fill="none" stroke="#c9a5d2" stroke-width="0.9" stroke-linejoin="round" stroke-linecap="round" stroke-dasharray="2,1.6"/>
<polyline points="529.8,427.7 545.5,425.7 565.0,423.7 596.3,427.7 612.0,430.0" fill="none" stroke="#c9a5d2" stroke-width="0.9" stroke-linejoin="round" stroke-linecap="round" stroke-dasharray="2,1.6"/>
<polyline points="72.3,300.0 84.0,323.4 84.0,339.0 78.1,356.6 62.5,366.4 50.8,380.0 23.2,397.3 0.0,412.8" fill="none" stroke="#c9a5d2" stroke-width="0.9" stroke-linejoin="round" stroke-linecap="round" stroke-dasharray="2,1.6"/>
<polyline points="0.0,300.0 20.0,298.0 40.0,292.0" fill="none" stroke="#c9a5d2" stroke-width="0.9" stroke-linejoin="round" stroke-linecap="round" stroke-dasharray="2,1.6"/>
<polyline points="642.0,297.0 650.0,297.0 662.0,297.0" fill="none" stroke="#c9a5d2" stroke-width="0.9" stroke-linejoin="round" stroke-linecap="round" stroke-dasharray="2,1.6"/>
<polyline points="612.0,430.0 622.0,433.0 633.0,437.0" fill="none" stroke="#c9a5d2" stroke-width="0.9" stroke-linejoin="round" stroke-linecap="round" stroke-dasharray="2,1.6"/>
<polyline points="623.0,293.4 625.8,304.1 628.5,314.9 632.5,324.2 633.8,336.3 636.5,344.3" fill="none" stroke="#e9a195" stroke-width="1.1" stroke-linejoin="round" stroke-linecap="round" />
<polyline points="599.0,327.0 607.0,333.6 615.0,340.3 623.0,350.0" fill="none" stroke="#e9a195" stroke-width="1.1" stroke-linejoin="round" stroke-linecap="round" />
<polyline points="640.0,258.0 620.0,262.0 600.0,262.0 580.0,268.0 560.0,270.0 530.0,272.0 500.0,262.0 470.0,255.0 440.0,250.0 400.0,247.0 370.0,240.0 340.0,225.0 310.0,222.0 280.0,218.0 260.0,215.0" fill="none" stroke="#e9a195" stroke-width="1.1" stroke-linejoin="round" stroke-linecap="round" />
<polyline points="560.0,270.0 545.0,290.0 530.0,318.0" fill="none" stroke="#e9a195" stroke-width="1.1" stroke-linejoin="round" stroke-linecap="round" />
<polyline points="470.0,255.0 480.0,230.0 490.0,200.0" fill="none" stroke="#e9a195" stroke-width="1.1" stroke-linejoin="round" stroke-linecap="round" />
<polyline points="340.0,225.0 330.0,260.0 320.0,300.0" fill="none" stroke="#e9a195" stroke-width="1.1" stroke-linejoin="round" stroke-linecap="round" />
<polyline points="394.8,51.0 397.8,74.7 409.7,89.5 424.5,104.3 439.3,113.2 469.0,116.2 498.7,117.7 528.4,122.2 558.0,131.0 581.8,134.0 593.6,131.0" fill="none" stroke="#e9a195" stroke-width="1.1" stroke-linejoin="round" stroke-linecap="round" />
<polyline points="327.0,50.0 311.7,70.3 306.6,85.5 286.3,105.8 281.2,116.0 271.0,133.8 268.5,151.5 263.5,180.0 258.0,215.0 254.5,240.0 254.5,262.3 248.4,270.0 240.7,274.5 236.1,283.7 233.0,303.7 233.0,310.0" fill="none" stroke="#e9a195" stroke-width="1.1" stroke-linejoin="round" stroke-linecap="round" />
<polyline points="572.9,65.8 587.7,80.6 596.6,104.3 599.6,122.2 596.6,134.0 602.6,157.8 608.5,178.5 611.5,200.0" fill="none" stroke="#e9a195" stroke-width="1.1" stroke-linejoin="round" stroke-linecap="round" />
<polyline points="247.5,185.0 250.0,205.0 256.0,220.0" fill="none" stroke="#e9a195" stroke-width="1.1" stroke-linejoin="round" stroke-linecap="round" />
<polyline points="233.0,310.0 222.8,335.4 220.3,350.6 222.8,365.8 217.8,383.6 208.7,404.5 208.7,427.5 218.3,446.6 228.0,470.0 235.0,500.0 240.0,522.0" fill="none" stroke="#e9a195" stroke-width="1.1" stroke-linejoin="round" stroke-linecap="round" />
<polyline points="510.3,375.0 526.0,372.0 539.6,372.0 557.2,365.2 576.7,359.3 596.3,353.4 610.0,351.5 623.6,349.5 640.0,345.6" fill="none" stroke="#e9a195" stroke-width="1.1" stroke-linejoin="round" stroke-linecap="round" />
<polyline points="520.0,345.6 526.0,361.3 528.0,372.0" fill="none" stroke="#e9a195" stroke-width="1.1" stroke-linejoin="round" stroke-linecap="round" />
<polyline points="563.0,427.7 563.0,412.0 572.8,398.4 584.5,388.6 596.3,380.8 615.8,375.0" fill="none" stroke="#e9a195" stroke-width="1.1" stroke-linejoin="round" stroke-linecap="round" />
<polyline points="604.0,330.0 615.8,341.7 623.6,349.5" fill="none" stroke="#e9a195" stroke-width="1.1" stroke-linejoin="round" stroke-linecap="round" />
<polyline points="553.8,440.3 543.7,465.7 536.0,483.5 523.4,498.7 518.3,514.0" fill="none" stroke="#e9a195" stroke-width="1.1" stroke-linejoin="round" stroke-linecap="round" />
<polyline points="0.0,75.0 10.0,67.5 25.0,61.0 35.0,52.5 50.0,55.0 72.5,66.0 82.5,50.0" fill="none" stroke="#8e8e8e" stroke-width="0.8" stroke-linejoin="round" stroke-linecap="round" />
<polyline points="233.0,50.0 222.8,60.0 207.6,70.3 202.5,82.5 197.5,100.0 195.0,110.0 192.5,140.0 188.8,155.0 192.5,172.5 200.0,180.0 212.5,185.0 220.0,187.5 227.5,202.5 235.0,212.5 237.5,222.5 235.0,235.0 237.5,245.0 230.0,257.5 230.0,268.4 231.5,280.7 233.0,293.0 231.5,306.7 228.0,317.6 222.8,339.2" fill="none" stroke="#8e8e8e" stroke-width="0.8" stroke-linejoin="round" stroke-linecap="round" />
<polyline points="233.8,212.8 241.4,211.6 249.0,215.4 255.3,217.3 263.0,218.0 266.8,216.6 285.0,222.0 310.0,226.0" fill="none" stroke="#8e8e8e" stroke-width="0.8" stroke-linejoin="round" stroke-linecap="round" />
<polyline points="146.5,339.0 168.0,348.8 173.8,352.7 200.0,350.6 220.3,346.8 222.8,339.2 268.5,339.2 281.2,348.0 296.4,341.7 342.1,348.0" fill="none" stroke="#8e8e8e" stroke-width="0.8" stroke-linejoin="round" stroke-linecap="round" />
<polyline points="89.0,482.4 96.7,501.7 106.3,522.0" fill="none" stroke="#8e8e8e" stroke-width="0.8" stroke-linejoin="round" stroke-linecap="round" />
<polygon points="446.0,50.0 454.0,55.0 466.0,58.0 481.0,59.0 499.0,59.0 517.0,56.0 527.0,55.0 542.0,56.0 558.0,60.0 572.6,62.6 581.0,71.0 587.4,81.6 591.6,90.0 596.9,98.5 600.0,111.1 602.1,119.5 604.3,130.1 609.5,142.7 612.7,151.2 613.0,160.0 618.7,171.5 620.7,179.2 624.5,186.8 625.0,195.0 627.0,208.0 630.0,224.0 634.0,237.0 639.0,247.0 642.0,256.0 642.0,273.0 642.0,290.0 641.0,316.0 640.0,333.0 640.0,346.0 634.0,360.0 629.0,374.0 625.0,387.0 620.0,403.0 616.0,410.0 613.0,414.0 610.0,423.0 608.0,433.0 602.0,444.0 592.0,456.0 588.0,465.0 576.0,475.0 567.0,489.0 557.0,500.0 548.0,510.0 539.0,522.0 1024.0,522.0 1024.0,50.0 446.0,50.0" fill="#a3c9d3"/>
<polygon points="616.0,402.0 623.0,402.0 620.0,412.0 637.7,421.0 637.7,431.7 633.8,449.3 622.0,468.8 604.5,484.5 588.8,502.0 581.0,516.7 563.4,494.2 571.3,482.5 579.0,472.7 586.9,465.0 592.7,457.1 596.6,451.3 600.5,443.4 605.4,435.6 607.4,427.8 610.0,423.0 613.0,414.0" fill="#a5cfc8" fill-opacity="0.55" stroke="#90c69c" stroke-width="0.8"/>
<polyline points="591.6,50.0 604.3,60.5 610.6,77.4 616.9,92.1 623.2,113.2 631.7,151.2 639.0,170.0 645.0,189.0 648.0,208.0 653.0,222.0 660.0,239.0 662.0,273.0 659.0,300.0 658.0,323.0 658.0,337.0 655.0,351.0 649.0,374.0 644.0,392.0 640.0,408.0 634.0,419.0 625.0,442.0 613.0,461.0 599.0,479.0 585.0,498.0 569.0,522.0" fill="none" stroke="#a98fcb" stroke-width="1.3"/>
<g fill-opacity="0.82"><polygon points="280.4,189.5 282.5,189.0 283.0,188.3 283.7,186.8 286.1,185.7 285.0,185.0 284.5,183.0 284.0,181.0 281.8,181.5 279.5,182.0 277.2,182.5 275.0,183.0 275.5,184.9 275.9,186.8 276.4,188.6 277.9,189.2" fill="#a9d640"/>
<polygon points="280.5,198.6 280.3,196.6 280.6,194.3 279.8,190.5 280.4,189.5 277.9,189.2 276.4,188.6 277.0,191.0 275.7,193.0 274.3,195.0 273.0,197.0 272.0,198.8 271.0,200.5 272.6,201.5 276.0,201.3 277.4,199.0 279.0,198.4" fill="#459199"/>
<polygon points="291.2,188.6 289.6,187.8 288.0,187.0 286.1,185.7 283.7,186.8 283.0,188.3 282.5,189.0 280.4,189.5 279.8,190.5 280.6,194.3 280.3,196.6 280.5,198.6 283.4,197.5 285.1,199.6 286.6,196.9 286.9,194.3 288.2,193.0 290.2,190.1" fill="#575295"/>
<polygon points="285.1,199.6 286.0,200.7 288.2,200.7 290.7,202.3 292.5,202.7 296.0,203.6 297.4,205.5 299.2,204.7 299.0,202.6 299.2,200.1 300.4,198.5 299.9,196.3 301.4,194.6 299.6,193.4 297.8,192.2 296.0,191.0 294.4,190.2 292.8,189.4 291.2,188.6 290.2,190.1 288.2,193.0 286.9,194.3 286.6,196.9" fill="#459199"/>
<polygon points="282.5,212.0 281.0,208.7 280.1,206.9 278.8,205.0 277.0,202.3 276.0,201.3 272.6,201.5 271.0,200.5 270.0,202.3 269.0,204.0 269.5,206.0 270.0,208.0 270.5,210.0 271.0,212.0 269.0,211.0 267.0,210.0 267.2,211.6 269.9,212.4 272.1,212.7 273.7,213.2 277.4,213.6 279.0,213.3 282.0,214.5 282.4,214.0 281.6,213.7" fill="#a9d640"/>
<polygon points="282.5,212.0 282.3,209.3 284.1,207.6 285.8,206.3 286.4,202.8 288.2,200.7 286.0,200.7 285.1,199.6 283.4,197.5 280.5,198.6 279.0,198.4 277.4,199.0 276.0,201.3 277.0,202.3 278.8,205.0 280.1,206.9 281.0,208.7" fill="#575295"/>
<polygon points="281.0,226.4 281.0,226.4 281.8,226.8 282.1,229.6 283.6,232.5 284.4,234.2 283.9,236.2 285.9,237.6 288.3,240.4 287.7,243.0 287.7,243.0 287.7,243.0 287.8,243.0 287.8,243.0 287.8,243.0 290.1,239.8 290.6,239.4 293.2,237.8 294.7,235.0 296.3,233.5 296.3,233.5 296.3,233.5 295.5,232.5 293.7,228.8 293.8,226.0 294.0,225.4 294.0,225.4 294.0,225.4 294.0,225.4 294.0,225.4 294.0,225.4 294.0,225.4 294.0,225.4 294.0,225.4 294.0,225.4 294.0,225.4 294.0,225.4 294.5,223.8 295.4,220.8 297.0,219.8 296.9,220.0 298.0,218.2 298.0,218.1 298.0,218.1 299.4,215.1 298.9,213.8 298.0,212.3 298.0,212.3 298.0,212.3 298.0,212.3 298.0,212.3 298.0,212.3 298.0,212.3 300.3,210.1 300.3,207.8 300.3,207.8 300.3,207.8 299.4,206.3 299.2,204.7 299.2,204.7 299.2,204.7 297.4,205.5 296.0,203.6 292.5,202.7 290.7,202.3 288.2,200.7 288.2,200.7 288.2,200.7 286.4,202.8 285.8,206.3 284.1,207.6 282.3,209.3 282.5,212.0 282.5,212.0 282.5,212.0 281.6,213.7 282.3,214.0 282.3,214.0 282.3,214.0 282.3,214.0 282.3,214.0 282.3,214.0 282.3,214.0 282.3,214.0 282.3,214.0 282.0,214.5 282.0,214.5 282.0,214.5 282.2,217.5 281.6,220.3 282.3,220.8 281.0,223.1 280.9,226.3 280.9,226.3 281.0,226.3 281.0,226.3 281.0,226.3 281.0,226.3 281.0,226.3 281.0,226.4" fill="#d2de37"/>
<polygon points="427.9,293.0 427.9,293.0 428.3,294.9 427.4,298.3 428.4,299.4 430.1,302.4 429.1,305.1 429.3,305.7 428.6,307.8 428.6,307.8 428.6,307.8 430.1,309.9 430.2,309.9 430.2,309.9 430.2,309.9 430.2,309.9 430.2,309.9 430.2,309.9 430.2,309.9 430.2,309.9 430.2,309.9 430.4,313.3 429.4,314.4 430.1,317.2 428.5,320.1 429.1,321.9 429.1,321.9 429.1,321.9 429.8,323.9 430.1,325.9 432.6,329.2 434.0,330.8 434.0,330.8 434.0,330.8 434.8,329.1 437.0,327.6 441.0,326.9 442.6,326.3 443.0,326.1 446.6,324.5 450.3,322.6 450.4,322.7 450.4,322.7 450.4,322.7 451.1,320.5 452.2,318.1 452.3,316.4 452.7,315.2 452.7,315.2 452.7,315.2 452.3,311.6 450.0,310.5 449.6,309.4 450.4,307.0 448.6,304.8 448.6,304.8 448.6,304.8 448.6,304.8 448.6,304.8 448.6,304.8 448.6,304.8 448.6,304.8 449.4,301.5 449.4,301.5 449.4,301.5 449.1,300.8 446.8,299.4 447.0,298.0 447.0,298.0 447.0,298.0 446.4,295.7 443.7,294.8 442.1,294.0 440.4,292.8 436.8,292.5 435.2,290.0 432.5,289.9 430.3,288.7 428.5,287.5 428.5,287.5 428.5,287.5 430.0,289.0 430.0,289.0 430.0,289.0 430.0,289.0 430.0,289.0 430.0,289.0 430.0,289.0 430.0,289.0 430.0,289.0 430.0,289.0 430.0,289.0 430.0,289.0 430.0,289.0 430.0,289.0 429.0,291.0 428.0,293.0 428.0,293.0 428.0,293.0 428.0,293.0 428.0,293.0 428.0,293.0 428.0,293.0 428.0,293.0 428.0,293.0 427.9,293.0" fill="#41bc8d"/>
<polygon points="430.6,370.4 430.6,370.4 431.8,369.2 433.0,368.0 433.0,368.0 433.0,368.0 433.0,368.0 433.0,368.0 435.3,367.0 437.5,366.0 439.8,365.0 442.0,364.0 444.1,363.0 446.2,362.1 448.3,361.1 449.9,360.4 451.4,359.7 453.0,359.0 453.0,359.0 455.0,358.0 457.0,357.0 459.0,356.0 461.0,355.0 463.0,354.0 463.0,354.0 463.0,354.0 463.2,351.8 463.5,349.5 463.7,347.3 464.0,345.0 464.0,345.0 464.0,345.0 464.0,345.0 464.0,345.0 464.0,345.0 465.3,343.0 466.5,341.0 467.7,339.0 469.0,337.0 469.0,337.0 469.0,337.0 469.0,337.0 469.0,337.0 470.6,335.9 472.2,334.7 472.2,334.7 472.2,334.7 470.4,333.8 467.6,333.2 466.1,332.9 463.1,332.1 461.3,332.9 459.7,331.6 459.6,331.6 459.6,331.6 456.4,334.0 455.1,335.7 452.6,338.8 451.2,339.5 450.5,340.6 448.6,343.8 448.6,343.8 448.6,343.8 448.6,343.8 448.6,343.8 448.6,343.8 448.6,343.8 448.6,343.8 448.6,343.8 446.6,344.0 444.4,342.8 442.1,343.6 440.7,343.8 436.9,344.4 434.1,345.7 434.1,345.7 434.1,345.7 435.0,346.2 436.5,347.5 436.5,347.5 436.5,347.5 436.5,347.6 436.5,347.6 436.5,347.6 435.6,350.8 435.6,352.5 434.7,354.9 434.5,358.6 433.5,360.1 433.3,362.8 431.9,365.4 431.5,367.2 430.6,370.4" fill="#603c8b"/>
<polygon points="267.9,228.7 270.9,228.2 271.8,229.2 273.6,227.1 276.9,225.5 279.5,226.8 281.0,226.4 281.0,226.3 280.9,223.1 282.3,220.8 281.6,220.3 282.2,217.5 282.0,214.5 279.0,213.3 277.4,213.6 273.7,213.2 272.1,212.7 269.9,212.4 267.2,211.6 267.4,213.7 267.6,215.8 267.8,217.9 268.0,220.0 268.3,222.0 268.7,224.0 269.0,226.0 268.0,227.3 267.0,228.6" fill="#575295"/>
<polygon points="299.2,204.7 299.4,206.3 300.3,207.8 301.2,208.0 303.8,208.3 307.0,209.0 308.8,208.9 311.3,207.8 314.1,208.8 316.1,207.3 316.3,206.9 316.6,206.2 318.1,202.8 316.6,200.9 316.6,198.7 314.7,197.5 312.9,196.2 311.0,195.0 308.5,195.0 306.0,195.0 304.0,195.0 302.0,195.0 301.4,194.6 299.9,196.3 300.4,198.5 299.2,200.1 299.0,202.6" fill="#575295"/>
<polygon points="316.6,206.2 318.6,206.4 323.1,204.9 324.1,204.6 325.9,204.8 328.3,204.2 331.6,204.8 332.3,203.6 332.3,201.7 330.5,199.0 329.1,197.2 328.3,195.3 327.0,193.0 326.0,192.0 325.0,191.0 323.4,192.6 321.8,194.2 320.2,195.8 318.6,197.4 317.0,199.0 316.6,198.7 316.6,200.9 318.1,202.8" fill="#516a9a"/>
<polygon points="339.9,189.3 338.0,188.0 336.0,187.5 334.0,187.0 332.0,188.0 330.0,189.0 329.7,191.0 329.3,193.0 329.0,195.0 328.0,194.0 327.0,193.0 328.3,195.3 329.1,197.2 330.5,199.0 332.3,201.7 332.9,200.9 335.8,198.4 338.6,196.7 340.0,196.9 341.8,196.2 343.0,193.7 342.1,192.4 340.8,190.9" fill="#41bc8d"/>
<polygon points="319.0,216.1 318.0,215.0 316.0,213.6 316.0,209.9 316.1,207.3 314.1,208.8 311.3,207.8 308.8,208.9 307.0,209.0 303.8,208.3 301.2,208.0 300.3,207.8 300.3,210.1 298.0,212.3 298.9,213.8 299.4,215.1 298.0,218.1 299.5,218.9 301.8,220.0 303.0,222.2 304.4,221.3 308.2,221.9 309.9,221.7 311.4,221.7 314.8,222.4 317.6,221.4 317.2,218.4" fill="#516a9a"/>
<polygon points="316.6,206.2 316.3,206.9 316.1,207.3 316.0,209.9 316.0,213.6 318.0,215.0 319.0,216.1 320.8,216.3 323.8,217.9 326.0,217.2 327.7,218.5 327.2,215.5 329.1,213.9 328.5,211.3 330.4,207.9 330.3,207.0 331.6,204.8 328.3,204.2 325.9,204.8 324.1,204.6 323.1,204.9 318.6,206.4" fill="#516a9a"/>
<polygon points="339.2,218.4 341.2,216.3 340.3,213.2 342.7,211.9 340.3,209.5 337.5,208.6 336.1,206.8 333.2,204.5 332.3,203.6 331.6,204.8 330.3,207.0 330.4,207.9 328.5,211.3 329.1,213.9 327.2,215.5 327.7,218.5 330.5,219.0 332.4,218.3 333.6,217.9 336.4,216.5" fill="#603c8b"/>
<polygon points="303.0,222.2 302.8,223.8 302.3,225.5 302.7,229.1 301.8,230.5 303.9,231.7 305.7,233.1 305.6,235.0 307.3,235.5 309.9,233.4 310.8,233.7 312.5,232.9 314.4,230.3 315.3,229.1 315.7,227.3 316.2,225.4 314.8,222.4 311.4,221.7 309.9,221.7 308.2,221.9 304.4,221.3" fill="#516a9a"/>
<polygon points="330.5,219.0 327.7,218.5 326.0,217.2 323.8,217.9 320.8,216.3 319.0,216.1 317.2,218.4 317.6,221.4 314.8,222.4 316.2,225.4 315.7,227.3 315.3,229.1 317.7,230.9 320.3,231.6 321.0,231.1 322.5,232.2 324.8,231.3 328.0,228.3 329.5,228.3 328.3,227.4 330.2,224.0 330.1,221.8 329.2,220.4" fill="#516a9a"/>
<polygon points="339.2,218.4 336.4,216.5 333.6,217.9 332.4,218.3 330.5,219.0 329.2,220.4 330.1,221.8 330.2,224.0 328.3,227.4 329.5,228.3 332.2,229.7 334.6,230.2 335.1,232.5 337.6,232.4 339.2,233.3 341.1,233.6 341.4,232.1 342.9,229.2 345.1,227.6 343.5,227.3 343.2,223.9 342.0,220.1 339.5,219.7" fill="#41bc8d"/>
<polygon points="298.0,218.1 296.9,220.1 297.0,219.8 295.4,220.8 294.5,223.8 294.0,225.4 293.8,226.0 293.7,228.7 295.5,232.5 296.3,233.5 299.0,233.5 300.4,233.9 303.9,231.7 301.8,230.5 302.7,229.1 302.3,225.5 302.8,223.8 303.0,222.2 301.8,220.0 299.5,218.9" fill="#575295"/>
<polygon points="295.2,252.9 297.0,251.9 297.8,250.2 300.1,250.0 301.1,247.8 304.2,246.2 306.4,244.5 307.5,242.0 308.8,239.4 307.9,238.2 307.3,235.5 305.6,235.0 305.7,233.1 303.9,231.7 300.4,233.9 299.0,233.5 296.3,233.5 294.7,235.0 293.2,237.8 290.6,239.4 290.1,239.8 287.8,243.0 289.0,244.8 292.1,246.8 292.6,247.7 292.4,249.6" fill="#41bc8d"/>
<polygon points="287.7,243.0 288.3,240.4 285.9,237.6 283.9,236.2 284.4,234.2 283.6,232.5 282.1,229.6 281.8,226.8 281.0,226.4 279.5,226.8 276.9,225.5 273.6,227.1 271.8,229.2 270.9,228.2 267.9,228.7 268.7,230.1 269.6,234.2 270.4,236.7 270.4,238.0 273.0,239.1 273.9,243.6 273.0,245.7 275.1,244.7 279.6,244.4 280.7,243.4 283.0,242.2 285.1,244.0" fill="#575295"/>
<polygon points="273.0,245.7 273.9,243.6 273.0,239.1 270.4,238.0 270.4,236.7 269.6,234.2 268.7,230.1 267.9,228.7 267.0,228.6 266.0,229.8 265.0,231.0 263.5,232.5 262.0,234.0 260.5,235.5 259.0,237.0 259.3,239.0 259.7,241.0 260.0,243.0 261.5,245.0 263.0,247.0 264.0,248.7 265.0,250.3 266.0,252.0 266.0,254.1 266.0,256.3 267.5,254.4 269.6,251.6 269.9,250.9 270.6,249.2 272.9,246.6" fill="#575295"/>
<polygon points="322.3,241.6 323.4,240.1 323.8,239.7 321.4,236.1 320.7,233.3 321.0,231.1 320.3,231.6 317.7,230.9 315.3,229.1 314.4,230.3 312.5,232.9 310.8,233.7 309.9,233.4 307.3,235.5 307.9,238.2 308.8,239.4 307.5,242.0 308.7,243.4 311.7,242.9 313.9,244.8 314.7,246.1 317.6,246.3 318.8,246.1 321.0,245.6 322.2,243.7" fill="#516a9a"/>
<polygon points="329.5,228.3 328.0,228.3 324.8,231.3 322.5,232.2 321.0,231.1 320.7,233.3 321.4,236.1 323.8,239.7 323.4,240.1 322.3,241.6 324.8,241.8 328.3,243.4 329.2,242.9 332.3,244.0 335.4,242.1 337.1,240.1 338.3,240.7 339.2,238.9 339.5,236.1 339.2,233.3 337.6,232.4 335.1,232.5 334.6,230.2 332.2,229.7" fill="#603c8b"/>
<polygon points="286.1,261.2 287.0,260.0 288.2,259.8 290.0,257.1 290.4,254.7 293.1,254.6 295.2,252.9 292.4,249.6 292.6,247.7 292.1,246.8 289.0,244.8 287.8,243.0 287.7,243.0 285.1,244.0 283.0,242.2 280.7,243.4 279.6,244.4 275.1,244.7 273.0,245.7 272.9,246.6 270.6,249.2 269.9,250.9 269.6,251.6 267.5,254.4 266.0,256.3 266.0,258.2 266.0,260.1 266.0,262.0 267.8,263.2 269.6,264.4 272.2,263.8 273.5,263.8 276.4,263.1 278.0,262.2 279.7,263.9 281.9,262.9" fill="#516a9a"/>
<polygon points="317.6,246.3 314.7,246.1 313.9,244.8 311.7,242.9 308.7,243.4 307.5,242.0 306.4,244.5 304.2,246.2 301.1,247.8 300.1,250.0 297.8,250.2 297.0,251.9 298.1,253.9 300.2,256.9 301.7,258.1 302.3,259.3 304.6,261.4 307.2,261.9 308.1,261.6 308.8,260.0 311.7,257.8 313.0,256.8 315.4,254.4 317.7,252.4 318.1,252.5 319.0,249.1" fill="#575295"/>
<polygon points="328.9,258.9 329.9,259.0 330.3,257.4 330.2,255.2 330.5,252.2 329.5,250.4 329.7,248.6 329.6,244.8 329.2,242.9 328.3,243.4 324.8,241.8 322.3,241.6 322.2,243.7 321.0,245.6 318.8,246.1 317.6,246.3 319.0,249.1 318.1,252.5 318.8,253.5 321.5,253.8 324.0,255.7 324.7,256.0 326.9,256.9" fill="#575295"/>
<polygon points="382.7,165.0 383.0,165.8 386.1,165.6 388.8,165.9 389.7,164.6 393.8,164.9 396.7,164.9 397.9,165.0 401.8,166.4 403.6,165.1 404.7,165.5 408.1,165.0 410.4,165.2 411.0,165.0 410.8,162.6 410.6,160.2 410.4,157.8 410.2,155.4 410.0,153.0 408.5,152.0 407.0,151.0 405.0,151.5 403.0,152.0 401.0,152.5 399.0,153.0 397.0,153.5 395.0,154.0 393.0,154.5 391.0,155.0 389.3,156.3 387.7,157.7 386.0,159.0 384.0,159.8 382.0,160.5 380.0,161.2 378.0,162.0 377.5,162.2 378.2,163.6 380.5,163.9" fill="#575295"/>
<polygon points="382.7,165.0 382.7,167.0 383.7,168.9 386.4,171.9 386.9,174.7 387.2,175.2 389.9,176.6 390.8,180.2 391.7,181.9 392.0,180.0 393.5,178.0 395.0,176.0 397.0,175.0 399.0,174.0 401.0,173.0 403.0,172.0 404.0,170.3 405.0,168.7 406.0,167.0 408.2,166.1 410.4,165.2 408.1,165.0 404.7,165.5 403.6,165.1 401.8,166.4 397.9,165.0 396.7,164.9 393.8,164.9 389.7,164.6 388.8,165.9 386.1,165.6 383.0,165.8" fill="#41bc8d"/>
<polygon points="368.2,181.3 370.5,179.9 369.5,176.4 371.6,174.4 371.2,173.7 371.8,170.4 372.7,167.8 371.8,166.6 372.6,163.6 370.3,164.3 368.0,165.0 365.6,165.4 363.2,165.8 360.8,166.2 358.4,166.6 356.0,167.0 355.3,169.3 354.7,171.7 354.0,174.0 352.5,175.8 351.1,177.5 352.4,179.1 354.8,180.5 354.6,182.8 354.9,184.1 357.3,185.1 359.5,184.4 360.4,185.1 362.8,184.2 366.3,182.8 367.3,182.1" fill="#41bc8d"/>
<polygon points="391.4,183.5 391.7,181.9 390.8,180.2 389.9,176.6 387.2,175.2 386.9,174.7 386.4,171.9 383.7,168.9 382.7,167.0 382.7,165.0 380.5,163.9 378.2,163.6 377.5,162.2 375.8,162.7 374.2,163.1 372.6,163.6 371.8,166.6 372.7,167.8 371.8,170.4 371.2,173.7 371.6,174.4 369.5,176.4 370.5,179.9 368.2,181.3 369.7,182.7 372.9,185.0 374.3,185.8 375.9,184.8 378.5,186.0 380.2,185.6 381.8,185.1 385.0,184.7 388.3,183.2 389.1,183.6" fill="#516a9a"/>
<polygon points="357.3,185.1 354.9,184.1 354.6,182.8 354.8,180.5 352.4,179.1 351.1,177.5 350.0,178.8 349.0,180.0 347.7,181.7 346.3,183.3 345.0,185.0 343.7,186.7 342.3,188.3 341.0,190.0 339.9,189.3 340.8,190.9 342.1,192.4 343.5,190.9 345.5,191.6 348.7,191.5 351.4,189.2 351.3,188.5 353.2,188.9 357.4,188.4" fill="#41bc8d"/>
<polygon points="357.4,188.4 353.2,188.9 351.3,188.5 351.4,189.2 348.7,191.5 345.5,191.6 343.5,190.9 342.1,192.4 343.0,193.7 341.8,196.2 341.9,197.4 344.9,199.3 347.2,200.0 347.0,201.3 348.6,204.8 350.5,202.6 351.0,201.7 352.9,198.6 354.5,195.9 354.3,194.3 357.0,191.1 357.3,189.4" fill="#575295"/>
<polygon points="364.3,199.9 367.0,200.5 368.2,200.2 369.1,198.6 372.3,198.6 374.9,198.8 375.2,198.2 374.4,194.7 374.3,191.8 373.3,190.2 373.4,188.1 374.3,185.8 372.9,185.0 369.7,182.7 368.2,181.3 367.3,182.1 366.3,182.8 362.8,184.2 360.4,185.1 359.5,184.4 357.3,185.1 357.4,188.4 357.3,189.4 358.5,192.2 360.1,193.9 361.4,196.3 362.2,199.1" fill="#516a9a"/>
<polygon points="374.3,185.8 373.4,188.1 373.3,190.2 374.3,191.8 374.4,194.7 375.2,198.2 374.9,198.8 375.3,199.0 377.5,200.6 380.1,202.8 380.8,203.9 382.3,205.9 382.5,203.6 382.8,201.3 383.0,199.0 385.0,198.0 387.0,197.0 389.0,196.0 389.4,194.0 389.8,192.0 390.2,190.0 390.6,188.0 391.0,186.0 391.2,184.7 391.4,183.5 389.1,183.6 388.3,183.2 385.0,184.7 381.8,185.1 380.2,185.6 378.5,186.0 375.9,184.8" fill="#41bc8d"/>
<polygon points="348.6,204.8 349.4,207.5 350.8,208.0 351.6,208.5 353.3,210.8 355.5,210.7 356.1,211.4 358.6,209.8 358.7,207.7 360.0,207.1 361.2,204.7 362.3,201.2 364.3,199.9 362.2,199.1 361.4,196.3 360.1,193.9 358.5,192.2 357.3,189.4 357.0,191.1 354.3,194.3 354.5,195.9 352.9,198.6 351.0,201.7 350.5,202.6" fill="#41bc8d"/>
<polygon points="332.3,201.7 332.3,203.6 333.2,204.5 336.1,206.8 337.5,208.6 340.3,209.5 342.7,211.9 343.3,210.6 344.1,208.8 347.4,208.5 350.8,208.0 349.4,207.5 348.6,204.8 347.0,201.3 347.2,200.0 344.9,199.3 341.9,197.4 341.8,196.2 340.0,196.9 338.6,196.7 335.8,198.4 332.9,200.9" fill="#516a9a"/>
<polygon points="377.4,217.6 379.7,215.3 380.8,214.8 382.0,212.7 382.0,210.9 382.0,209.0 382.2,207.5 382.3,205.9 380.8,203.9 380.1,202.8 377.5,200.6 375.3,199.0 374.9,198.8 372.3,198.6 369.1,198.6 368.2,200.2 367.0,200.5 364.3,199.9 362.3,201.2 361.2,204.7 360.0,207.1 358.7,207.7 358.6,209.8 356.1,211.4 357.2,213.0 358.2,214.3 361.3,213.9 362.6,215.6 365.7,216.7 367.9,217.8 368.8,219.5 371.7,218.7 374.7,219.2 374.7,219.8" fill="#575295"/>
<polygon points="358.2,214.3 357.2,213.0 356.1,211.4 355.5,210.7 353.3,210.8 351.6,208.5 350.8,208.0 347.4,208.5 344.1,208.8 343.3,210.6 342.7,211.9 340.3,213.2 341.2,216.3 339.2,218.4 339.5,219.7 342.0,220.1 343.2,223.9 343.5,227.3 345.1,227.6 346.7,228.2 348.9,228.1 349.8,225.1 351.4,223.7 351.8,221.3 354.5,218.5 354.9,218.2 356.8,216.5" fill="#603c8b"/>
<polygon points="377.4,217.6 379.9,221.0 379.2,223.5 379.0,224.3 380.7,226.9 381.4,229.3 382.7,232.3 383.3,233.4 383.2,235.6 385.6,238.4 387.1,239.7 388.2,237.3 391.1,236.2 394.1,236.7 395.3,234.6 396.8,232.4 399.7,233.3 402.2,232.9 402.5,229.5 403.6,227.1 403.6,226.2 404.1,223.6 403.3,222.3 402.5,221.0 401.5,218.8 400.6,216.6 399.6,214.4 397.2,214.6 394.8,214.9 392.4,215.1 390.0,215.3 388.0,215.2 386.0,215.2 384.0,215.1 382.0,215.0 382.0,212.7 380.8,214.8 379.7,215.3" fill="#516a9a"/>
<polygon points="364.7,242.3 366.0,243.6 369.4,242.5 371.2,242.6 372.7,243.2 376.6,243.6 378.5,242.8 378.6,241.5 379.8,240.2 383.1,239.4 385.6,238.4 383.2,235.6 383.3,233.4 382.7,232.3 381.4,229.3 380.7,226.9 379.0,224.3 379.2,223.5 379.9,221.0 377.4,217.6 374.7,219.8 374.7,219.2 371.7,218.7 368.8,219.5 366.9,222.1 367.0,224.2 365.2,225.2 364.7,228.4 363.4,230.4 362.8,231.4 361.5,234.2 360.7,235.5 362.1,238.0 362.1,240.9 363.6,241.9" fill="#575295"/>
<polygon points="402.2,232.9 403.4,233.5 403.8,235.3 405.9,236.4 408.0,236.7 408.9,238.8 410.6,239.8 413.7,238.5 414.0,240.4 415.8,239.7 418.7,236.3 420.4,234.7 423.0,234.6 425.1,232.8 425.3,230.9 427.4,230.4 430.2,229.2 427.8,225.1 428.5,224.2 428.9,222.0 428.5,219.7 427.8,217.4 425.8,218.4 423.8,219.3 421.9,220.2 419.9,221.1 417.9,222.1 415.9,223.0 414.2,224.1 412.4,225.3 410.7,226.4 408.9,227.6 407.2,228.7 406.2,227.0 405.1,225.3 404.1,223.6 403.6,226.2 403.6,227.1 402.5,229.5" fill="#575295"/>
<polygon points="360.7,235.5 361.5,234.2 362.8,231.4 363.4,230.4 364.7,228.4 365.2,225.2 367.0,224.2 366.9,222.1 368.8,219.5 367.9,217.8 365.7,216.7 362.6,215.6 361.3,213.9 358.2,214.3 356.8,216.5 354.9,218.2 354.5,218.5 351.8,221.3 351.4,223.7 349.8,225.1 348.9,228.1 349.9,229.2 352.1,230.4 354.5,232.7 355.0,233.0 357.1,234.4 359.7,235.6" fill="#603c8b"/>
<polygon points="308.1,261.6 310.7,263.8 314.0,263.5 314.8,264.8 316.8,265.8 319.3,266.6 320.4,268.1 323.2,267.7 325.6,269.7 326.3,266.7 326.4,264.9 328.2,264.5 328.2,261.9 328.9,258.9 326.9,256.9 324.7,256.0 324.0,255.7 321.5,253.8 318.8,253.5 318.1,252.5 317.7,252.4 315.4,254.4 313.0,256.8 311.7,257.8 308.8,260.0" fill="#603c8b"/>
<polygon points="329.2,242.9 329.6,244.8 329.7,248.6 329.5,250.4 330.5,252.2 330.2,255.2 330.3,257.4 329.9,259.0 330.8,258.0 333.5,259.0 335.2,259.2 336.0,256.4 338.3,254.8 338.2,252.9 339.7,249.3 341.5,247.6 341.3,246.2 343.0,243.6 342.4,241.5 340.3,241.2 338.3,240.7 337.1,240.1 335.4,242.1 332.3,244.0" fill="#516a9a"/>
<polygon points="285.5,283.3 286.4,283.5 287.5,282.3 289.5,282.0 290.6,280.9 290.8,278.2 290.4,276.3 290.7,274.5 290.5,271.6 290.5,269.7 290.0,267.6 286.8,266.8 285.9,265.1 286.1,261.2 281.9,262.9 279.7,263.9 278.0,262.2 276.4,263.1 273.5,263.8 272.2,263.8 269.6,264.4 270.8,265.2 272.0,266.0 274.3,266.3 276.7,266.7 279.0,267.0 278.8,269.2 278.6,271.4 278.4,273.6 278.2,275.8 278.0,278.0 276.8,279.8 279.0,279.7 280.9,282.2 284.3,282.5" fill="#575295"/>
<polygon points="290.5,271.6 293.5,270.6 296.6,271.7 298.1,269.9 298.9,267.5 302.4,267.9 305.9,267.8 304.9,265.6 305.9,262.9 307.2,261.9 304.6,261.4 302.3,259.3 301.7,258.1 300.2,256.9 298.1,253.9 297.0,251.9 295.2,252.9 293.1,254.6 290.4,254.7 290.0,257.1 288.2,259.8 287.0,260.0 286.1,261.2 285.9,265.1 286.8,266.8 290.0,267.6 290.5,269.7" fill="#575295"/>
<polygon points="305.9,267.8 304.5,268.0 304.5,271.1 306.0,274.3 306.6,277.1 308.2,277.4 308.8,278.0 311.5,279.1 314.3,279.2 315.3,279.9 318.1,279.9 320.8,279.2 322.2,278.2 323.6,278.4 324.8,277.1 325.6,274.9 325.4,272.8 324.8,271.3 325.6,269.7 323.2,267.7 320.4,268.1 319.3,266.6 316.8,265.8 314.8,264.8 314.0,263.5 310.7,263.8 308.1,261.6 307.2,261.9 305.9,262.9 304.9,265.6" fill="#459199"/>
<polygon points="308.2,277.4 308.2,277.4 306.6,277.1 306.0,274.3 304.5,271.1 304.5,268.0 305.9,267.8 302.4,267.9 298.9,267.5 298.1,269.9 296.6,271.7 293.5,270.6 290.5,271.6 290.7,274.5 290.4,276.3 290.8,278.2 290.6,280.9 293.6,281.3 294.4,279.9 297.7,279.1 299.3,280.4 301.9,279.3 304.9,278.7" fill="#516a9a"/>
<polygon points="344.8,284.6 345.4,282.9 345.9,281.5 348.2,280.2 349.4,278.1 346.4,276.2 344.6,273.3 344.7,272.2 342.5,273.3 338.3,272.8 337.4,274.1 335.4,275.2 333.1,273.8 330.9,274.3 329.4,274.7 325.6,274.9 324.8,277.1 327.7,278.0 327.9,280.4 328.2,282.1 331.3,283.8 333.0,286.8 332.7,288.7 335.5,287.1 338.7,286.5 339.6,285.8 340.6,284.6" fill="#41bc8d"/>
<polygon points="345.4,264.4 343.1,262.8 342.2,262.5 339.0,261.3 337.1,259.1 335.2,259.2 333.5,259.0 330.8,258.0 329.9,259.0 328.9,258.9 328.2,261.9 328.2,264.5 326.4,264.9 326.3,266.7 325.6,269.7 324.8,271.3 325.4,272.8 325.6,274.9 329.4,274.7 330.9,274.3 333.1,273.8 335.4,275.2 337.4,274.1 338.3,272.8 342.5,273.3 344.7,272.2 344.9,271.3 345.5,268.5 345.2,266.1" fill="#516a9a"/>
<polygon points="284.5,301.1 283.5,298.2 284.9,295.7 283.6,294.1 283.7,291.3 284.6,288.9 283.5,286.8 285.5,283.3 284.3,282.5 280.9,282.2 279.0,279.7 276.8,279.8 276.0,281.0 275.0,283.0 274.0,285.0 273.0,287.0 272.0,289.0 271.0,291.0 270.3,293.0 269.6,294.9 268.8,296.9 268.1,298.9 270.1,299.3 272.0,298.5 274.3,298.7 277.4,299.9 279.3,299.6 281.3,300.8" fill="#516a9a"/>
<polygon points="285.5,283.3 283.5,286.8 284.6,288.9 283.7,291.3 283.6,294.1 284.9,295.7 283.5,298.2 284.5,301.1 284.8,302.1 285.8,304.4 289.2,303.6 291.1,300.5 292.0,299.8 294.7,300.0 297.8,298.0 299.2,296.9 300.8,297.0 303.6,295.4 302.3,294.6 300.3,291.7 297.2,289.9 296.8,288.6 295.8,286.1 292.5,285.6 291.0,284.2 289.5,282.0 287.5,282.3 286.4,283.5" fill="#575295"/>
<polygon points="308.2,277.4 304.9,278.7 301.9,279.3 299.3,280.4 297.7,279.1 294.4,279.9 293.6,281.3 290.6,280.9 289.5,282.0 291.0,284.2 292.5,285.6 295.8,286.1 296.8,288.6 297.2,289.9 300.3,291.7 302.3,294.6 303.6,295.4 304.3,295.5 304.9,294.5 303.9,291.5 305.5,289.8 304.3,287.1 305.9,284.3 306.2,283.5 306.4,280.8" fill="#516a9a"/>
<polygon points="320.8,279.2 318.1,279.9 315.3,279.9 314.3,279.2 311.5,279.1 308.8,278.0 308.2,277.4 308.2,277.4 306.4,280.8 306.2,283.5 305.9,284.3 304.3,287.1 305.5,289.8 303.9,291.5 304.9,294.5 307.3,294.2 308.7,292.9 310.7,292.3 315.1,292.4 316.2,290.4 317.1,290.1 319.0,288.5 318.7,285.3 319.8,283.3 320.7,282.4" fill="#575295"/>
<polygon points="326.0,300.2 323.0,299.8 321.4,296.5 322.0,293.5 319.7,292.2 317.1,290.1 316.2,290.4 315.1,292.4 310.7,292.3 308.7,292.9 307.3,294.2 304.9,294.5 304.3,295.5 305.6,297.5 306.3,299.0 307.5,300.2 308.6,302.2 309.3,305.1 310.4,305.7 313.2,304.6 316.0,306.3 318.4,304.2 319.4,304.0 320.7,304.7 323.5,302.7 324.9,301.0" fill="#516a9a"/>
<polygon points="332.7,288.7 333.0,286.8 331.3,283.8 328.2,282.1 327.9,280.4 327.7,278.0 324.8,277.1 323.6,278.4 322.2,278.2 320.8,279.2 320.7,282.4 319.8,283.3 318.7,285.3 319.0,288.5 317.1,290.1 319.7,292.2 322.0,293.5 321.4,296.5 323.0,299.8 326.0,300.2 327.4,299.7 327.6,300.6 329.8,298.7 332.4,296.3 333.7,296.2 333.4,294.0 333.5,291.3 332.6,290.0" fill="#516a9a"/>
<polygon points="303.6,295.4 300.8,297.0 299.2,296.9 297.8,298.0 294.7,300.0 292.0,299.8 291.1,300.5 289.2,303.6 285.8,304.4 287.7,305.6 287.5,309.0 287.0,310.9 287.4,311.9 288.0,315.7 290.0,315.0 292.4,314.8 294.8,314.6 297.2,314.4 299.6,314.2 302.0,314.0 302.2,315.1 302.8,312.9 304.7,311.6 305.6,309.8 307.8,307.4 309.4,306.6 309.3,305.1 308.6,302.2 307.5,300.2 306.3,299.0 305.6,297.5 304.3,295.5" fill="#41bc8d"/>
<polygon points="285.8,304.4 284.8,302.1 284.5,301.1 281.3,300.8 279.3,299.6 277.4,299.9 274.3,298.7 272.0,298.5 270.1,299.3 268.1,298.9 267.6,300.4 267.0,302.0 265.0,302.5 263.0,303.0 264.5,304.5 266.0,306.0 267.5,307.5 269.0,309.0 270.2,311.0 271.5,313.0 272.8,315.0 274.0,317.0 276.2,316.8 278.3,316.7 280.5,316.5 282.7,316.3 284.8,316.2 287.0,316.0 288.0,315.7 287.4,311.9 287.0,310.9 287.5,309.0 287.7,305.6" fill="#575295"/>
<polygon points="316.0,306.3 313.2,304.6 310.4,305.7 309.3,305.1 309.4,306.6 307.8,307.4 305.6,309.8 304.7,311.6 302.8,312.9 302.2,315.1 302.4,317.1 302.7,319.0 303.0,321.0 303.7,322.7 304.3,324.3 305.0,326.0 307.3,325.3 309.7,324.7 312.0,324.0 314.1,323.1 316.2,322.2 318.3,321.3 318.1,319.3 317.6,317.9 317.7,314.1 316.1,311.4 316.3,310.5 316.2,308.8" fill="#575295"/>
<polygon points="323.5,302.7 320.7,304.7 319.4,304.0 318.4,304.2 316.0,306.3 316.2,308.8 316.3,310.5 316.1,311.4 317.7,314.1 317.6,317.9 318.1,319.3 318.3,321.3 319.0,321.0 320.0,322.7 321.0,324.3 322.0,326.0 323.0,324.2 324.0,322.5 325.0,320.8 326.0,319.0 327.6,318.5 329.2,318.0 327.7,315.8 328.0,313.6 327.3,311.9 324.6,308.7 324.6,307.2 324.7,304.9" fill="#575295"/>
<polygon points="326.0,300.2 324.9,301.0 323.5,302.7 324.7,304.9 324.6,307.2 324.6,308.7 327.3,311.9 328.0,313.6 327.7,315.8 329.2,318.0 331.5,317.4 333.7,316.7 336.0,316.0 337.4,314.2 338.9,312.4 337.8,311.4 337.5,307.5 335.2,305.5 333.2,305.4 333.1,303.6 331.9,300.4 329.8,298.7 327.6,300.6 327.4,299.7" fill="#459199"/>
<polygon points="329.8,298.7 331.9,300.4 333.1,303.6 333.2,305.4 335.2,305.5 337.5,307.5 337.8,311.4 338.9,312.4 340.0,311.0 341.7,309.7 343.3,308.3 345.0,307.0 347.0,306.5 349.0,306.0 351.0,305.5 353.0,305.0 354.5,306.5 356.0,308.0 356.3,306.2 356.6,304.4 356.4,303.9 354.7,301.7 353.0,301.2 349.2,299.0 347.6,298.9 345.4,297.1 342.5,296.2 341.7,297.9 339.3,296.4 336.8,297.5 335.5,297.1 333.7,296.2 332.4,296.3" fill="#603c8b"/>
<polygon points="345.4,297.1 345.4,294.4 344.5,293.5 345.1,290.3 345.4,288.7 344.1,287.3 344.8,284.6 340.6,284.6 339.6,285.8 338.7,286.5 335.5,287.1 332.7,288.7 332.6,290.0 333.5,291.3 333.4,294.0 333.7,296.2 335.5,297.1 336.8,297.5 339.3,296.4 341.7,297.9 342.5,296.2" fill="#575295"/>
<polygon points="345.1,227.6 342.9,229.2 341.4,232.1 341.1,233.6 339.2,233.3 339.5,236.1 339.2,238.9 338.3,240.7 340.3,241.2 342.4,241.5 343.0,243.6 344.6,244.9 347.8,245.5 349.4,245.7 350.8,245.3 353.1,243.8 356.4,243.4 358.6,242.4 359.2,241.4 362.1,240.9 362.1,238.0 360.7,235.5 359.7,235.6 357.1,234.4 355.0,233.0 354.5,232.7 352.1,230.4 349.9,229.2 348.9,228.1 346.7,228.2" fill="#603c8b"/>
<polygon points="347.8,245.5 347.6,248.7 348.2,252.1 347.7,252.8 348.6,254.6 351.0,256.6 350.5,260.1 351.3,260.4 354.7,260.0 357.4,259.9 358.1,260.3 361.3,259.1 360.0,258.1 361.8,256.0 361.3,252.3 362.2,250.9 362.8,249.5 363.1,246.3 364.2,244.5 364.7,242.3 363.6,241.9 362.1,240.9 359.2,241.4 358.6,242.4 356.4,243.4 353.1,243.8 350.8,245.3 349.4,245.7" fill="#516a9a"/>
<polygon points="361.3,259.1 362.9,262.0 362.7,264.4 363.8,265.5 366.7,267.6 368.8,267.4 369.2,266.6 372.1,266.2 374.7,265.2 376.2,264.6 376.4,261.6 378.2,259.2 377.9,257.8 377.7,256.1 376.9,252.6 375.2,251.2 376.8,248.5 376.7,244.6 376.6,243.6 372.7,243.2 371.2,242.6 369.4,242.5 366.0,243.6 364.7,242.3 364.2,244.5 363.1,246.3 362.8,249.5 362.2,250.9 361.3,252.3 361.8,256.0 360.0,258.1" fill="#575295"/>
<polygon points="387.1,239.7 385.6,238.4 383.1,239.4 379.8,240.2 378.6,241.5 378.5,242.8 376.6,243.6 376.7,244.6 376.8,248.5 375.2,251.2 376.9,252.6 377.7,256.1 377.9,257.8 378.2,259.2 380.1,260.0 383.6,260.8 384.8,259.9 386.5,260.0 390.3,259.0 391.8,259.6 394.6,259.7 397.5,259.5 397.9,257.5 395.3,254.8 395.3,253.9 394.4,251.8 391.9,249.3 391.3,247.6 390.8,244.8 388.8,242.0 387.7,241.5" fill="#575295"/>
<polygon points="402.2,232.9 399.7,233.3 396.8,232.4 395.3,234.6 394.1,236.7 391.1,236.2 388.2,237.3 387.1,239.7 387.7,241.5 388.8,242.0 390.8,244.8 391.3,247.6 391.9,249.3 394.4,251.8 395.3,253.9 395.3,254.8 397.9,257.5 398.6,257.8 400.3,256.0 402.1,254.6 402.8,252.1 405.8,251.1 406.3,250.1 406.1,247.0 407.6,244.5 406.9,242.6 408.9,238.8 408.0,236.7 405.9,236.4 403.8,235.3 403.4,233.5" fill="#575295"/>
<polygon points="422.0,250.0 420.7,249.8 419.1,247.9 418.6,244.2 417.8,242.1 415.6,241.7 414.0,240.4 413.7,238.5 410.6,239.8 408.9,238.8 406.9,242.6 407.6,244.5 406.1,247.0 406.3,250.1 405.8,251.1 408.7,252.0 410.4,252.2 413.5,253.8 415.8,253.6 416.8,254.5 420.4,255.0 420.9,251.7" fill="#516a9a"/>
<polygon points="420.3,261.4 421.0,258.4 420.4,256.1 420.4,255.0 416.8,254.5 415.8,253.6 413.5,253.8 410.4,252.2 408.7,252.0 405.8,251.1 402.8,252.1 402.1,254.6 400.3,256.0 398.6,257.8 399.9,258.8 402.8,259.6 405.9,261.2 407.0,261.3 409.9,263.8 411.5,264.8 412.2,265.5 415.9,264.7 417.7,263.4 418.2,262.2" fill="#41bc8d"/>
<polygon points="432.1,265.6 434.1,264.5 433.8,262.4 435.7,258.8 435.4,257.4 435.8,256.4 436.9,252.3 433.9,249.8 431.2,249.0 430.5,248.3 429.4,246.4 426.0,247.4 425.3,249.5 424.9,249.9 422.0,250.0 420.9,251.7 420.4,255.0 420.4,256.1 421.0,258.4 420.3,261.4 422.6,262.6 424.5,263.9 425.9,266.5 429.5,267.1 431.0,265.7" fill="#459199"/>
<polygon points="420.3,261.4 418.2,262.2 417.7,263.4 415.9,264.7 412.2,265.5 412.0,267.6 412.7,269.3 411.4,272.7 411.6,274.4 413.4,275.6 415.2,276.8 417.0,278.0 419.0,279.0 421.0,280.0 423.0,281.0 424.2,282.5 424.6,280.7 427.1,277.4 426.0,274.7 428.4,273.3 427.7,270.2 429.5,268.6 429.5,267.1 425.9,266.5 424.5,263.9 422.6,262.6" fill="#603c8b"/>
<polygon points="394.6,259.7 391.8,259.6 390.3,259.0 386.5,260.0 384.8,259.9 383.6,260.8 380.1,260.0 378.2,259.2 376.4,261.6 376.2,264.6 374.7,265.2 372.1,266.2 374.8,269.0 375.4,270.7 376.6,273.3 378.7,274.7 379.9,274.7 381.3,277.1 382.4,279.6 382.8,279.5 384.6,277.1 384.8,275.8 387.2,273.0 387.6,271.5 388.1,270.5 389.9,267.6 390.5,266.0 392.5,264.4 392.5,261.2" fill="#516a9a"/>
<polygon points="398.6,257.8 397.9,257.5 397.5,259.5 397.8,261.1 398.0,263.4 398.8,265.0 398.3,267.8 399.8,269.1 400.3,271.6 402.2,271.3 404.0,271.0 405.8,271.8 407.5,272.5 409.2,273.2 411.0,274.0 411.6,274.4 411.4,272.7 412.7,269.3 412.0,267.6 412.2,265.5 411.5,264.8 409.9,263.8 407.0,261.3 405.9,261.2 402.8,259.6 399.9,258.8" fill="#459199"/>
<polygon points="356.5,278.9 357.0,279.8 358.7,279.0 359.5,275.8 360.2,273.3 363.1,272.0 363.8,269.5 365.2,268.1 366.7,267.6 363.8,265.5 362.7,264.4 362.9,262.0 361.3,259.1 358.1,260.3 357.4,259.9 354.7,260.0 351.3,260.4 350.5,260.1 349.3,260.0 348.4,261.7 345.4,264.4 345.2,266.1 345.5,268.5 344.9,271.3 344.7,272.2 344.6,273.3 346.4,276.2 349.4,278.1 350.3,277.3 351.7,279.3 355.1,278.7" fill="#575295"/>
<polygon points="343.0,243.6 341.3,246.2 341.5,247.6 339.7,249.3 338.2,252.9 338.3,254.8 336.0,256.4 335.2,259.2 337.1,259.1 339.0,261.3 342.2,262.5 343.1,262.8 345.4,264.4 348.4,261.7 349.3,260.0 350.5,260.1 351.0,256.6 348.6,254.6 347.7,252.8 348.2,252.1 347.6,248.7 347.8,245.5 344.6,244.9" fill="#575295"/>
<polygon points="372.1,266.2 369.2,266.6 368.8,267.4 366.7,267.6 365.2,268.1 363.8,269.5 363.1,272.0 360.2,273.3 359.5,275.8 358.7,279.0 357.0,279.8 360.1,279.7 362.5,281.0 363.9,282.9 367.2,283.2 368.5,284.9 370.3,284.8 373.1,286.9 374.8,288.2 375.9,287.1 377.0,286.0 378.3,284.0 379.7,282.0 381.0,280.0 382.4,279.6 381.3,277.1 379.9,274.7 378.7,274.7 376.6,273.3 375.4,270.7 374.8,269.0" fill="#516a9a"/>
<polygon points="397.5,259.5 394.6,259.7 392.5,261.2 392.5,264.4 390.5,266.0 389.9,267.6 388.1,270.5 387.6,271.5 387.2,273.0 384.8,275.8 384.6,277.1 382.8,279.5 384.9,279.0 386.9,278.5 389.0,278.0 391.0,277.0 393.0,276.0 395.0,275.0 396.5,273.5 398.0,272.0 400.3,271.6 399.8,269.1 398.3,267.8 398.8,265.0 398.0,263.4 397.8,261.1" fill="#516a9a"/>
<polygon points="356.4,303.9 355.9,301.2 355.8,299.5 356.6,296.3 356.5,293.1 357.0,292.7 356.1,290.2 357.0,286.8 355.2,285.8 355.7,283.0 356.5,278.9 355.1,278.7 351.7,279.3 350.3,277.3 349.4,278.1 348.2,280.2 345.9,281.5 345.4,282.9 344.8,284.6 344.1,287.3 345.4,288.7 345.1,290.3 344.5,293.5 345.4,294.4 345.4,297.1 347.6,298.9 349.2,299.0 353.0,301.2 354.7,301.7" fill="#516a9a"/>
<polygon points="357.0,279.8 356.5,278.9 355.7,283.0 355.2,285.8 357.0,286.8 356.1,290.2 357.0,292.7 356.5,293.1 356.6,296.3 355.8,299.5 355.9,301.2 356.4,303.9 356.6,304.4 357.0,302.0 358.5,300.0 360.0,298.0 361.8,297.2 363.5,296.5 365.2,295.8 367.0,295.0 369.0,293.5 371.0,292.0 372.3,290.7 373.6,289.4 374.8,288.2 373.1,286.9 370.3,284.8 368.5,284.9 367.2,283.2 363.9,282.9 362.5,281.0 360.1,279.7" fill="#575295"/>
<polygon points="447.0,298.0 448.5,294.8 448.9,293.4 450.3,289.9 450.7,287.2 452.1,285.6 451.1,283.8 449.5,280.4 448.6,277.9 447.5,277.9 447.1,277.5 446.0,277.1 442.4,278.5 439.5,281.3 439.1,280.9 437.0,280.9 433.3,283.7 431.5,284.6 430.3,284.4 427.6,286.6 428.5,287.5 430.3,288.7 432.5,289.9 435.2,290.0 436.8,292.5 440.4,292.8 442.1,294.0 443.7,294.8 446.5,295.7" fill="#516a9a"/>
<polygon points="452.1,285.6 450.7,287.2 450.3,289.9 448.9,293.4 448.5,294.8 447.0,298.0 446.8,299.4 449.1,300.8 449.4,301.5 451.6,302.5 453.9,302.7 456.2,302.0 458.7,300.9 460.0,299.3 464.6,301.0 466.4,300.5 467.9,298.7 470.1,298.4 470.0,297.0 469.3,294.1 469.7,291.4 469.9,288.5 467.3,288.4 467.0,285.1 465.7,285.2 463.1,285.4 459.7,284.8 458.6,284.2 456.8,285.1 454.7,285.4" fill="#575295"/>
<polygon points="428.6,307.8 429.3,305.7 429.1,305.1 430.1,302.4 428.4,299.4 427.4,298.3 428.3,294.9 427.9,293.0 425.6,293.7 423.3,294.3 421.0,295.0 419.0,296.3 417.0,297.7 415.0,299.0 413.7,300.6 412.4,302.1 411.1,303.7 413.5,304.5 415.2,305.7 417.3,306.0 421.0,306.3 422.3,307.1 424.4,306.9 427.2,307.9" fill="#516a9a"/>
<polygon points="429.1,321.9 428.5,320.1 430.1,317.2 429.4,314.3 430.4,313.3 430.2,309.9 428.6,307.8 427.2,307.9 424.4,306.9 422.3,307.1 421.0,306.3 417.3,306.0 415.2,305.7 413.5,304.5 411.1,303.7 410.0,305.0 410.3,307.0 410.7,309.0 411.0,311.0 412.5,312.0 414.0,313.0 413.7,315.3 413.3,317.7 413.0,320.0 411.9,321.1 410.9,322.1 413.5,321.8 415.1,321.8 417.4,322.8 421.9,322.6 423.2,322.6 425.5,321.5" fill="#575295"/>
<polygon points="473.8,300.4 472.4,298.8 470.1,298.4 467.9,298.7 466.4,300.5 464.6,301.0 460.0,299.3 458.7,300.9 456.2,302.0 453.9,302.7 451.6,302.5 449.4,301.5 448.6,304.8 450.4,307.0 449.6,309.4 450.0,310.5 452.3,311.6 452.7,315.2 454.9,315.2 457.5,313.6 460.4,314.8 461.6,314.3 463.4,315.1 466.6,315.7 467.5,314.9 469.4,312.1 470.2,311.5 472.3,310.0 474.6,307.2 475.0,305.9 474.8,304.7" fill="#459199"/>
<polygon points="450.4,322.7 452.6,324.7 454.6,325.3 454.7,327.9 456.7,330.4 459.6,331.6 461.3,332.9 463.1,332.1 466.1,332.9 467.6,333.2 470.4,333.8 472.2,334.7 473.5,333.8 473.8,331.8 473.0,328.6 470.6,325.8 471.2,325.1 470.4,322.0 469.8,319.5 468.9,317.0 467.5,314.9 466.6,315.7 463.4,315.1 461.6,314.3 460.4,314.8 457.5,313.6 454.9,315.2 452.7,315.2 452.3,316.4 452.2,318.1 451.1,320.5" fill="#459199"/>
<polygon points="489.1,312.2 486.0,311.3 483.6,309.9 482.0,308.6 478.4,308.9 477.0,306.5 475.0,305.9 474.6,307.2 472.3,310.0 470.2,311.5 469.4,312.1 467.5,314.9 468.9,317.0 469.8,319.5 470.4,322.0 471.2,325.1 470.6,325.8 473.0,328.6 473.8,331.8 473.5,333.8 474.8,332.9 476.0,332.0 478.2,331.7 480.3,331.4 482.5,331.1 483.2,328.7 483.8,326.1 484.6,324.0 485.6,320.6 486.0,318.3 487.5,317.2 487.5,314.0" fill="#516a9a"/>
<polygon points="409.6,339.4 412.2,340.0 414.1,338.8 415.8,339.0 418.8,338.9 421.6,339.0 423.8,340.1 426.1,339.8 429.1,339.5 430.2,339.3 431.9,338.6 432.5,336.9 432.8,334.8 431.9,332.3 434.0,330.8 432.6,329.2 430.1,325.9 429.8,323.9 429.1,321.9 425.5,321.5 423.2,322.6 421.9,322.6 417.4,322.8 415.1,321.8 413.5,321.8 410.9,322.1 409.9,323.1 409.0,324.0 407.7,325.3 406.4,326.6 406.9,328.2 406.9,331.9 408.6,333.2 409.7,335.0 408.5,336.8" fill="#516a9a"/>
<polygon points="459.6,331.6 456.7,330.4 454.7,327.9 454.6,325.3 452.6,324.7 450.4,322.7 450.3,322.6 446.6,324.5 443.0,326.1 442.6,326.3 441.0,326.9 437.0,327.6 434.8,329.1 434.0,330.8 431.9,332.3 432.8,334.8 432.5,336.9 431.9,338.6 434.6,340.5 435.2,343.2 433.9,345.7 434.1,345.7 436.9,344.4 440.7,343.8 442.1,343.6 444.4,342.8 446.6,344.0 448.6,343.8 450.5,340.7 451.2,339.5 452.5,338.8 455.1,335.7 456.4,334.0" fill="#516a9a"/>
<polygon points="436.5,347.5 435.0,346.2 434.1,345.7 433.9,345.7 433.2,345.4 431.7,345.9 428.4,348.8 426.9,349.9 425.5,350.3 423.2,352.7 421.7,354.6 418.8,355.1 415.9,356.4 415.1,357.8 413.1,359.1 414.6,360.3 416.0,361.5 417.5,362.8 419.0,364.0 420.3,365.3 421.7,366.7 423.0,368.0 424.8,368.8 426.5,369.5 428.2,370.2 430.0,371.0 430.6,370.4 431.5,367.2 431.9,365.4 433.3,362.8 433.5,360.1 434.5,358.6 434.7,354.9 435.6,352.5 435.6,350.8" fill="#575295"/>
<polygon points="433.9,345.7 435.2,343.2 434.6,340.5 431.9,338.6 430.2,339.3 429.1,339.5 426.1,339.8 423.8,340.1 421.6,339.0 418.8,338.9 415.8,339.0 414.1,338.8 412.2,340.0 409.6,339.4 409.4,340.4 411.2,340.7 413.0,341.0 413.5,343.0 414.0,345.0 414.5,347.0 415.0,349.0 416.0,351.0 417.0,353.0 415.7,355.0 414.3,357.0 413.0,359.0 413.1,359.1 415.1,357.8 415.9,356.4 418.8,355.1 421.7,354.6 423.2,352.7 425.5,350.3 426.9,349.9 428.4,348.8 431.7,345.9 433.2,345.4" fill="#516a9a"/>
<polygon points="496.9,295.6 495.6,295.7 492.0,293.9 489.8,293.5 488.0,291.5 484.7,290.3 483.6,293.3 483.1,294.7 480.9,294.8 479.6,297.0 477.8,299.5 474.7,299.8 473.8,300.4 474.8,304.7 475.0,305.9 477.0,306.5 478.4,308.9 482.0,308.6 483.6,309.9 486.0,311.3 489.1,312.2 489.9,312.4 490.3,309.6 492.4,307.7 491.7,306.7 494.1,303.4 494.2,301.1 495.0,299.2" fill="#575295"/>
<polygon points="491.7,188.6 490.3,188.2 488.4,186.8 487.3,183.9 486.5,182.0 485.0,180.7 484.1,178.6 482.5,179.5 480.8,180.4 479.2,181.3 477.5,182.2 476.8,184.4 476.1,186.6 475.3,188.7 474.6,190.9 475.8,192.8 477.0,194.7 478.2,196.6 479.4,198.5 481.2,199.5 482.3,197.6 484.1,195.9 487.3,194.5 488.2,194.2 490.4,191.6" fill="#459199"/>
<polygon points="504.2,205.4 502.9,203.0 503.5,201.7 503.9,198.8 502.9,196.0 504.8,195.1 504.0,192.2 502.5,191.2 499.8,191.9 497.7,190.7 495.9,190.3 492.9,189.8 491.7,188.6 490.4,191.6 488.2,194.2 487.3,194.5 484.1,195.9 482.3,197.6 481.2,199.5 481.3,199.5 482.2,201.2 484.1,202.5 485.4,203.7 487.0,204.4 489.9,206.9 490.8,207.9 492.0,208.9 494.6,211.3 495.6,211.4 497.7,208.6 498.8,207.3 500.8,207.3" fill="#575295"/>
<polygon points="491.7,188.6 492.9,189.8 495.9,190.3 497.7,190.7 499.8,191.9 502.5,191.2 504.0,192.2 505.8,190.2 507.1,189.0 507.1,189.0 505.2,189.4 503.3,189.9 501.4,189.0 500.2,187.6 499.0,186.1 497.8,184.6 496.6,183.2 497.6,181.8 498.5,180.3 498.1,178.4 497.6,176.5 495.6,176.0 493.7,175.5 492.8,176.5 491.8,177.5 489.9,177.0 488.0,176.5 486.1,177.6 484.1,178.6 485.0,180.7 486.5,182.0 487.3,183.9 488.4,186.8 490.3,188.2" fill="#575295"/>
<polygon points="504.0,192.2 504.8,195.1 502.9,196.0 503.9,198.8 503.5,201.7 502.9,203.0 504.2,205.4 505.4,205.7 506.1,208.1 508.7,208.6 510.2,209.7 511.9,210.8 515.2,210.9 516.5,213.3 517.6,210.4 519.2,208.9 520.2,206.0 523.5,203.5 524.7,203.2 525.2,202.6 525.1,198.2 523.1,196.7 523.6,195.2 523.5,192.8 523.4,192.8 521.5,191.2 519.6,189.6 517.7,188.0 515.6,188.2 513.5,188.4 511.4,188.6 509.2,188.8 507.1,189.0 505.8,190.2" fill="#459199"/>
<polygon points="474.7,223.7 476.9,221.8 479.2,220.0 480.0,219.9 481.7,218.1 485.1,215.7 486.5,216.0 487.5,215.5 490.4,212.4 492.5,211.1 494.6,211.3 492.0,208.9 490.8,207.9 489.9,206.9 487.0,204.4 485.4,203.7 484.1,202.5 482.2,201.2 483.2,203.2 484.2,205.2 485.1,207.1 486.1,209.0 484.0,208.3 481.8,207.6 479.6,206.9 477.5,206.2 476.2,207.8 474.9,209.4 473.6,211.0 473.1,213.0 472.7,215.0 473.0,217.0 473.4,219.0 473.7,221.0 474.0,223.0 473.8,223.5" fill="#516a9a"/>
<polygon points="497.9,221.6 498.8,220.9 497.0,217.2 496.6,214.3 495.6,211.9 495.6,211.4 494.6,211.3 492.5,211.1 490.4,212.4 487.5,215.5 486.5,216.0 485.1,215.7 481.7,218.1 480.0,219.9 479.2,220.0 476.9,221.8 474.7,223.7 476.7,224.8 478.3,226.3 481.7,226.2 483.0,228.4 485.1,229.5 488.0,229.6 489.7,229.3 489.8,227.2 491.7,225.5 494.7,224.4 496.0,222.8" fill="#41bc8d"/>
<polygon points="490.4,238.3 491.9,239.4 493.3,237.8 497.0,235.4 499.7,236.3 499.6,236.5 502.0,234.7 505.6,233.7 507.7,233.2 506.5,232.4 505.9,229.7 504.6,227.2 503.7,226.2 500.7,224.2 498.0,222.0 497.9,221.6 496.0,222.8 494.7,224.4 491.7,225.5 489.8,227.2 489.7,229.3 488.0,229.6 487.6,232.0 488.6,234.1 488.9,237.1" fill="#6acb78"/>
<polygon points="516.9,214.7 516.5,213.3 515.2,210.9 511.9,210.8 510.2,209.7 508.7,208.6 506.1,208.1 505.4,205.7 504.2,205.4 500.8,207.3 498.8,207.3 497.7,208.6 495.6,211.4 495.6,211.9 496.6,214.3 497.0,217.2 498.8,220.9 497.9,221.6 498.0,222.0 500.7,224.2 503.7,226.2 504.6,227.2 505.9,229.7 507.6,227.4 508.3,226.5 511.0,223.9 511.7,220.7 513.9,219.7 514.6,217.5 514.9,215.5" fill="#459199"/>
<polygon points="511.5,237.8 512.5,236.4 515.3,237.5 518.7,238.1 520.5,237.4 522.6,239.0 523.0,236.4 523.9,235.1 524.6,234.0 523.5,231.5 524.9,228.7 525.0,226.7 523.6,225.0 523.6,221.8 522.6,219.9 521.5,218.2 521.1,216.6 519.2,215.0 516.9,214.7 514.9,215.5 514.6,217.5 513.9,219.7 511.7,220.7 511.0,223.9 508.3,226.5 507.6,227.4 505.9,229.7 506.5,232.4 507.7,233.2 508.0,233.7 509.5,235.9" fill="#459199"/>
<polygon points="516.5,213.3 516.9,214.7 519.2,215.0 521.1,216.6 521.5,218.2 523.7,217.7 527.7,217.6 529.0,216.2 529.2,214.4 532.6,215.5 535.6,215.7 533.3,213.3 531.0,210.7 530.3,209.5 529.0,207.2 527.7,205.2 526.9,204.8 524.7,203.2 523.5,203.5 520.2,206.0 519.2,208.9 517.6,210.4" fill="#516a9a"/>
<polygon points="430.2,229.2 432.0,231.4 431.4,232.0 432.3,233.4 435.4,235.1 437.4,234.5 438.2,235.5 440.8,237.2 443.6,234.7 444.6,234.8 448.1,234.7 450.6,233.7 452.0,233.7 452.4,232.0 452.8,230.4 453.2,228.7 451.6,227.0 450.0,225.4 448.4,223.7 446.8,222.0 445.2,220.4 443.6,218.7 441.7,219.2 439.8,219.6 437.9,220.1 436.0,221.4 434.0,222.6 432.1,223.9 431.2,222.2 430.2,220.6 429.2,218.9 428.3,217.2 427.8,217.4 428.5,219.7 428.9,222.0 428.5,224.2 427.8,225.1" fill="#575295"/>
<polygon points="440.8,237.2 442.7,237.9 442.1,239.3 442.3,242.1 442.8,245.7 442.9,247.1 445.3,246.8 446.7,248.5 449.4,250.2 451.4,248.5 453.6,245.3 453.7,244.3 455.7,243.7 457.2,240.8 458.9,239.1 461.2,237.8 459.0,238.3 457.6,239.2 456.1,240.2 454.5,238.9 452.9,237.7 451.3,236.4 451.6,235.0 452.0,233.7 450.6,233.7 448.1,234.7 444.6,234.8 443.6,234.7" fill="#516a9a"/>
<polygon points="449.4,250.2 450.5,250.5 450.1,253.4 450.3,255.3 450.5,257.6 450.4,259.1 453.1,260.1 454.4,261.0 455.4,260.3 458.1,260.7 460.1,259.0 461.4,256.7 463.1,254.4 461.9,253.2 461.6,250.3 462.4,247.9 460.9,247.2 462.5,244.6 462.5,241.7 462.8,240.5 462.9,237.4 462.8,237.4 461.2,237.8 458.9,239.1 457.2,240.8 455.7,243.7 453.7,244.3 453.6,245.3 451.4,248.5" fill="#41bc8d"/>
<polygon points="461.4,256.7 462.8,257.7 465.8,257.5 468.5,258.8 469.3,259.4 472.7,259.8 475.7,260.8 477.4,259.4 477.8,257.2 477.2,255.2 479.4,254.2 478.5,251.5 479.3,249.1 479.7,248.1 476.2,245.7 475.2,244.2 474.0,243.0 471.6,240.2 470.4,239.3 468.0,237.7 466.4,236.4 464.7,236.9 462.9,237.4 462.8,240.5 462.5,241.7 462.5,244.6 460.9,247.2 462.4,247.9 461.6,250.3 461.9,253.2 463.1,254.4" fill="#603c8b"/>
<polygon points="479.7,248.1 480.6,246.3 482.0,244.1 484.7,244.4 487.1,244.5 488.3,242.7 490.6,239.5 490.4,238.3 488.9,237.1 488.6,234.1 487.6,232.0 488.0,229.6 485.1,229.5 483.0,228.4 481.7,226.2 478.3,226.3 476.7,224.8 474.7,223.7 473.8,223.5 472.8,225.3 471.9,227.2 471.0,229.0 470.7,231.1 470.3,233.3 470.0,235.4 468.2,235.9 466.4,236.4 468.0,237.7 470.4,239.3 471.6,240.2 474.0,243.0 475.2,244.2 476.2,245.7" fill="#575295"/>
<polygon points="488.3,242.7 489.6,245.6 492.4,247.0 494.6,248.0 494.6,250.2 497.1,250.5 499.7,252.4 500.9,254.2 503.4,255.3 504.8,253.0 504.5,252.0 506.9,249.5 506.7,248.1 508.1,247.0 509.3,243.8 509.6,241.7 511.2,240.6 511.5,237.8 509.5,235.9 508.0,233.7 507.7,233.2 505.6,233.7 502.0,234.7 499.6,236.5 499.7,236.3 497.0,235.4 493.3,237.8 491.9,239.4 490.4,238.3 490.6,239.5" fill="#516a9a"/>
<polygon points="477.8,257.2 480.8,258.9 483.3,259.7 483.8,259.7 486.2,262.1 488.1,262.8 489.0,263.9 492.0,265.1 495.0,263.4 495.7,263.1 496.3,261.8 498.9,259.8 500.9,258.4 503.0,256.5 503.4,255.3 500.9,254.2 499.7,252.4 497.1,250.5 494.6,250.2 494.6,248.0 492.4,247.0 489.6,245.6 488.3,242.7 487.1,244.5 484.7,244.4 482.0,244.1 480.6,246.3 479.7,248.1 479.3,249.1 478.5,251.5 479.4,254.2 477.2,255.2" fill="#575295"/>
<polygon points="525.0,242.4 523.4,240.6 522.9,239.9 522.6,239.0 520.5,237.4 518.7,238.1 515.3,237.5 512.5,236.4 511.5,237.8 511.2,240.6 509.6,241.7 509.3,243.8 508.1,247.0 506.7,248.1 506.9,249.5 504.5,252.0 504.8,253.0 503.4,255.3 503.0,256.5 503.9,259.0 505.7,259.6 509.3,261.3 511.1,262.8 512.9,262.7 515.0,262.7 516.4,261.2 518.3,259.9 521.0,261.5 524.6,260.7 523.2,257.0 523.7,255.7 523.0,254.0 523.5,250.0 523.0,247.8 524.1,246.0" fill="#575295"/>
<polygon points="436.9,252.3 435.8,256.4 435.4,257.4 435.7,258.8 440.2,259.3 441.7,260.4 443.1,259.8 446.9,260.1 447.8,258.9 450.4,259.1 450.5,257.6 450.3,255.3 450.1,253.4 450.5,250.5 449.4,250.2 446.7,248.5 445.3,246.8 442.9,247.1 441.2,247.6 439.1,249.5 437.4,251.0" fill="#575295"/>
<polygon points="471.2,278.9 474.2,278.3 475.6,279.1 477.1,278.4 480.3,279.4 481.9,280.3 483.5,280.0 486.7,279.5 488.7,277.6 489.5,276.0 491.4,274.8 491.8,272.1 491.6,270.1 492.8,268.3 492.0,265.1 489.0,263.9 488.1,262.8 486.2,262.1 483.8,259.7 483.3,259.7 480.8,258.9 477.8,257.2 477.4,259.4 475.7,260.8 474.4,262.3 474.6,265.1 472.4,267.9 473.2,268.6 470.8,271.0 471.4,274.2 469.6,275.6 470.1,276.8" fill="#459199"/>
<polygon points="475.7,260.8 472.7,259.8 469.3,259.4 468.5,258.8 465.8,257.5 462.8,257.7 461.4,256.7 460.1,259.0 458.1,260.7 455.4,260.3 454.4,261.0 454.2,263.6 454.1,265.8 453.1,266.8 456.5,267.6 458.5,268.2 460.6,270.6 463.8,270.7 464.8,271.6 466.1,272.9 468.7,273.3 469.6,275.6 471.4,274.2 470.8,271.0 473.2,268.6 472.4,267.9 474.6,265.1 474.4,262.3" fill="#459199"/>
<polygon points="491.4,274.8 492.4,276.6 494.9,278.0 495.8,278.7 498.2,281.1 501.6,281.3 502.9,282.4 503.9,283.2 506.8,280.8 508.7,279.9 510.2,280.2 512.9,279.2 511.3,278.0 512.3,274.9 512.5,272.5 513.4,270.7 513.0,267.2 512.0,264.4 512.9,262.7 511.1,262.8 509.3,261.3 505.7,259.6 503.9,259.0 503.0,256.5 500.9,258.4 498.9,259.8 496.3,261.8 495.7,263.1 495.0,263.4 492.0,265.1 492.8,268.3 491.6,270.1 491.8,272.1" fill="#575295"/>
<polygon points="524.8,260.6 524.6,260.7 521.0,261.5 518.3,259.9 516.4,261.2 515.0,262.7 512.9,262.7 512.0,264.4 513.0,267.2 513.4,270.7 512.5,272.5 512.3,274.9 511.3,278.0 512.9,279.2 515.4,279.9 515.8,282.1 516.5,282.6 519.2,283.7 521.9,283.6 523.0,281.8 523.3,279.0 525.5,278.2 526.9,277.7 528.3,275.6 527.8,272.7 527.0,271.1 527.0,269.7 527.4,266.7 525.1,264.8 524.4,262.2" fill="#603c8b"/>
<polygon points="543.5,258.1 540.4,257.9 539.2,256.4 536.8,254.7 534.8,254.3 533.3,254.5 532.8,255.8 530.8,257.6 527.1,258.1 525.0,258.5 524.8,260.6 526.6,261.1 530.1,261.9 531.6,262.2 532.8,263.1 536.1,263.0 537.7,264.6 540.1,264.5 543.0,265.2 542.5,263.3 542.9,260.8" fill="#575295"/>
<polygon points="453.1,266.8 453.0,268.0 451.2,270.6 450.5,271.8 448.9,274.5 447.5,277.9 448.6,277.9 449.5,280.4 451.1,283.8 452.1,285.6 454.7,285.4 456.8,285.1 458.6,284.2 459.7,284.8 463.1,285.4 465.7,285.2 467.0,285.1 468.2,282.3 469.8,281.3 471.2,278.9 470.1,276.8 469.6,275.6 468.7,273.3 466.1,272.9 464.8,271.6 463.8,270.7 460.6,270.6 458.5,268.2 456.5,267.6" fill="#575295"/>
<polygon points="484.7,290.3 485.8,289.7 485.6,287.7 486.1,285.0 485.3,281.5 483.5,280.0 481.9,280.3 480.3,279.4 477.1,278.4 475.6,279.1 474.2,278.3 471.2,278.9 469.8,281.3 468.2,282.3 467.0,285.1 467.3,288.4 469.9,288.5 469.7,291.4 469.3,294.1 470.0,297.0 470.1,298.4 472.4,298.8 473.8,300.4 474.7,299.8 477.8,299.5 479.6,297.0 480.9,294.8 483.1,294.7 483.6,293.3" fill="#516a9a"/>
<polygon points="498.2,295.3 499.8,294.2 499.5,291.1 500.3,289.1 501.2,287.0 501.0,283.6 502.9,282.4 501.6,281.3 498.2,281.1 495.8,278.7 494.9,278.0 492.4,276.6 491.4,274.8 489.5,276.0 488.7,277.6 486.7,279.5 483.5,280.0 485.3,281.5 486.1,285.0 485.6,287.7 485.8,289.7 484.7,290.3 488.0,291.5 489.8,293.5 492.0,293.9 495.6,295.7 496.9,295.6 497.4,295.6" fill="#516a9a"/>
<polygon points="512.9,279.2 510.2,280.2 508.7,279.9 506.8,280.8 503.9,283.2 502.9,282.4 501.0,283.6 501.2,287.0 500.3,289.1 499.5,291.1 499.8,294.2 498.2,295.3 501.6,296.8 502.9,297.2 504.7,299.1 507.5,299.4 508.8,299.6 509.2,299.7 511.9,297.7 514.5,295.6 515.7,295.0 518.1,293.4 519.0,291.9 520.0,290.6 521.1,289.2 521.1,285.8 519.2,283.7 516.5,282.6 515.8,282.1 515.4,279.9" fill="#516a9a"/>
<polygon points="528.3,275.6 526.9,277.7 525.5,278.2 523.3,279.0 523.0,281.8 521.9,283.6 519.2,283.7 521.1,285.8 521.1,289.2 520.0,290.6 522.4,291.2 524.9,293.1 525.3,294.0 527.3,292.6 530.5,292.4 533.2,291.3 535.0,291.0 538.1,291.6 539.5,290.5 541.1,287.7 540.2,285.7 539.3,284.0 539.7,281.2 539.1,278.7 540.0,276.2 538.6,276.4 535.8,276.2 532.5,275.2 531.5,274.9" fill="#575295"/>
<polygon points="544.6,272.2 542.1,273.3 540.3,274.5 540.0,276.2 539.1,278.7 539.7,281.2 539.3,284.0 540.2,285.7 541.1,287.7 539.5,290.5 540.3,291.9 543.3,293.5 544.9,292.2 546.7,291.1 548.2,290.8 552.1,290.6 554.2,290.8 553.2,286.7 554.8,284.6 553.2,283.6 553.4,280.1 553.7,277.8 553.3,277.4 553.3,276.2 552.3,273.6 549.9,271.8 548.2,272.8 547.0,271.7" fill="#459199"/>
<polygon points="508.1,319.0 509.0,316.1 509.0,314.5 510.9,311.6 510.5,308.6 511.6,308.4 510.0,305.9 508.5,302.9 508.8,299.6 507.5,299.4 504.7,299.1 502.9,297.2 501.6,296.8 498.2,295.3 497.4,295.6 496.9,295.6 495.0,299.2 494.2,301.1 494.1,303.4 491.7,306.7 492.4,307.7 490.3,309.6 489.9,312.4 492.0,313.2 495.4,314.3 496.7,314.9 499.9,315.7 502.3,317.5 503.7,316.7 506.8,319.0" fill="#516a9a"/>
<polygon points="520.0,290.6 519.0,291.9 518.1,293.4 515.7,295.0 514.5,295.6 511.9,297.7 509.2,299.7 508.8,299.6 508.5,302.9 510.0,305.9 511.6,308.4 510.5,308.6 512.7,309.5 515.7,309.8 518.9,307.0 519.0,306.4 522.0,306.6 525.9,306.0 527.3,305.7 527.2,301.9 527.9,300.5 525.5,297.5 525.3,294.4 525.3,294.0 524.9,293.1 522.4,291.2" fill="#516a9a"/>
<polygon points="529.6,308.2 528.0,307.2 527.3,305.7 525.9,306.0 522.0,306.6 519.0,306.4 518.9,307.0 515.7,309.8 512.7,309.5 510.5,308.6 510.9,311.6 509.0,314.5 509.0,316.1 508.1,319.0 508.4,319.4 509.0,319.0 510.7,319.7 512.3,320.3 514.0,321.0 516.0,320.3 518.0,319.7 520.0,319.0 522.0,320.5 524.0,322.0 526.2,321.2 527.2,318.5 528.4,315.9 528.3,314.7 529.2,312.0 529.7,310.0" fill="#41bc8d"/>
<polygon points="525.3,294.0 525.3,294.4 525.5,297.5 527.9,300.5 527.2,301.9 527.3,305.7 528.0,307.2 529.6,308.2 533.2,309.1 534.3,307.9 537.6,307.2 540.1,308.4 540.5,307.8 544.0,309.1 543.5,306.4 543.2,302.6 543.1,301.6 544.0,299.1 543.1,296.3 543.9,295.2 543.3,293.5 540.3,291.9 539.5,290.5 538.1,291.6 535.0,291.0 533.2,291.3 530.5,292.4 527.3,292.6" fill="#575295"/>
<polygon points="544.0,309.1 540.5,307.8 540.1,308.4 537.6,307.2 534.3,307.9 533.2,309.1 529.6,308.2 529.7,310.0 529.2,312.0 528.3,314.7 528.4,315.9 527.2,318.5 526.2,321.2 528.5,320.5 530.8,319.8 533.0,319.0 535.2,318.5 537.3,318.0 539.5,317.5 541.7,317.0 543.8,316.5 546.0,316.0 548.0,315.0 550.0,314.0 550.1,313.9 548.8,312.7 547.3,310.6 546.3,309.8" fill="#575295"/>
<polygon points="544.0,309.1 546.3,309.8 547.3,310.6 548.8,312.7 550.1,313.9 552.1,313.0 554.1,312.0 556.0,311.0 558.0,310.0 560.0,309.0 561.6,308.3 563.3,307.5 562.7,305.5 562.2,303.1 561.5,300.9 561.3,296.9 559.6,296.3 560.5,294.4 558.8,292.4 555.6,292.6 554.2,290.8 552.1,290.6 548.2,290.8 546.7,291.1 544.9,292.2 543.3,293.5 543.9,295.2 543.1,296.3 544.0,299.1 543.1,301.6 543.2,302.6 543.5,306.4" fill="#575295"/>
<polygon points="525.2,202.6 527.0,201.9 528.9,201.6 531.6,202.0 534.1,202.2 535.8,202.0 537.7,203.7 539.3,202.2 541.2,199.5 542.0,198.0 541.0,196.9 540.9,195.3 538.8,195.6 536.6,195.2 534.4,194.8 532.2,194.4 530.1,194.0 527.9,193.6 525.7,193.2 523.5,192.8 523.6,195.2 523.1,196.7 525.1,198.2" fill="#459199"/>
<polygon points="550.7,207.3 551.5,204.1 552.6,202.8 554.7,203.2 554.2,200.3 554.6,196.8 555.4,195.8 554.4,193.6 555.8,191.3 553.5,191.5 551.3,191.8 549.0,192.0 547.0,193.3 545.0,194.7 543.0,195.0 540.9,195.3 541.0,196.9 542.0,198.0 541.2,199.5 541.5,201.5 543.6,202.9 546.7,203.8 548.2,206.4" fill="#575295"/>
<polygon points="565.7,194.0 563.5,193.0 561.2,192.0 559.0,191.0 557.4,191.2 555.8,191.3 554.4,193.6 555.4,195.8 554.6,196.8 554.2,200.3 554.7,203.2 555.6,203.8 558.0,203.7 561.7,204.7 562.5,204.4 564.4,204.4 568.0,204.9 566.0,203.2 566.4,201.5 565.8,197.9 565.3,195.6" fill="#516a9a"/>
<polygon points="568.0,204.9 568.3,206.2 567.2,208.0 570.9,208.0 573.5,206.7 575.4,206.4 575.9,207.4 579.1,207.0 579.2,206.9 579.9,204.0 578.9,202.2 580.2,200.3 579.6,196.4 580.9,194.3 579.5,194.2 578.0,194.0 576.0,194.2 574.0,194.4 572.0,194.6 570.0,194.8 568.0,195.0 565.7,194.0 565.3,195.6 565.8,197.9 566.4,201.5 566.0,203.2" fill="#575295"/>
<polygon points="594.6,196.5 592.7,196.1 590.8,195.8 588.9,195.4 587.0,195.0 585.0,194.8 582.9,194.5 580.9,194.3 579.6,196.4 580.2,200.3 578.9,202.2 579.9,204.0 579.2,206.9 580.6,206.9 582.3,207.3 585.3,206.6 587.5,206.5 589.4,207.4 590.8,206.9 590.3,205.7 591.6,202.2 592.9,199.9 592.6,198.5" fill="#459199"/>
<polygon points="536.8,213.5 538.4,213.6 541.6,213.8 543.1,213.7 544.5,214.6 546.5,214.0 549.5,211.2 550.5,209.4 550.0,208.0 550.7,207.3 548.2,206.4 546.7,203.8 543.6,202.9 541.5,201.5 541.2,199.5 539.3,202.2 537.7,203.7 537.0,205.5 537.6,208.0 537.3,210.1 536.8,211.5" fill="#516a9a"/>
<polygon points="568.0,204.9 564.4,204.4 562.5,204.4 561.7,204.7 558.0,203.7 555.6,203.8 554.7,203.2 552.6,202.8 551.5,204.1 550.7,207.3 550.0,208.0 550.5,209.4 552.1,210.8 552.8,211.7 555.5,211.5 558.1,213.1 558.1,213.5 559.2,212.5 563.0,210.6 565.9,209.7 566.2,209.3 567.0,208.3 567.2,208.0 568.3,206.2" fill="#575295"/>
<polygon points="525.2,202.6 524.7,203.2 526.9,204.8 527.7,205.2 529.0,207.2 530.3,209.5 531.0,210.7 533.3,213.3 535.6,215.7 535.7,215.7 536.8,213.5 536.8,211.5 537.3,210.1 537.6,208.0 537.0,205.5 537.7,203.7 535.8,202.0 534.1,202.2 531.6,202.0 528.9,201.6 527.0,201.9" fill="#459199"/>
<polygon points="547.1,229.3 546.3,225.2 546.6,222.7 546.9,221.5 546.1,219.7 546.4,217.2 544.5,214.6 543.1,213.7 541.6,213.8 538.4,213.6 536.8,213.5 535.7,215.7 535.4,216.4 535.2,217.7 535.3,219.0 535.0,222.4 537.8,224.9 539.4,225.6 540.7,226.7 543.1,228.7 543.9,228.9 544.8,228.7" fill="#603c8b"/>
<polygon points="558.4,221.7 558.1,220.7 557.2,219.1 557.0,217.0 558.1,213.1 555.5,211.5 552.8,211.7 552.1,210.8 550.5,209.4 549.5,211.2 546.5,214.0 544.5,214.6 546.4,217.2 546.1,219.7 546.9,221.5 546.6,222.7 546.3,225.2 547.1,229.3 549.9,228.5 552.2,227.1 552.4,227.8 554.6,226.7 557.3,224.6" fill="#575295"/>
<polygon points="567.0,208.3 566.2,209.3 565.9,209.7 563.0,210.6 559.2,212.5 558.1,213.5 558.1,213.1 557.0,217.0 557.2,219.1 558.1,220.7 558.4,221.7 560.7,223.4 562.0,222.6 565.6,223.8 568.3,224.3 569.4,223.9 569.2,220.7 569.6,219.1 570.0,218.3 568.7,215.0 569.3,212.3 568.0,209.8" fill="#459199"/>
<polygon points="573.0,224.9 574.1,224.1 574.6,221.8 577.2,220.1 577.1,216.6 578.6,215.3 579.5,213.8 579.3,210.0 580.5,208.4 579.1,207.0 575.9,207.4 575.4,206.4 573.5,206.7 570.9,208.0 567.2,208.0 567.0,208.3 568.0,209.8 569.3,212.3 568.7,215.0 570.0,218.3 569.6,219.1 569.2,220.7 569.4,223.9 571.3,225.1" fill="#516a9a"/>
<polygon points="579.2,206.9 579.1,207.0 580.5,208.4 579.3,210.0 579.5,213.8 582.5,215.8 584.9,216.3 584.9,218.1 585.8,219.6 588.0,219.7 588.1,219.7 589.5,218.6 591.3,216.8 590.9,214.5 591.2,213.1 590.2,211.8 588.7,209.5 589.4,207.4 587.5,206.5 585.3,206.6 582.3,207.3 580.6,206.9" fill="#575295"/>
<polygon points="588.0,219.7 585.8,219.6 584.9,218.1 584.9,216.3 582.5,215.8 579.5,213.8 578.6,215.3 577.1,216.6 577.2,220.1 574.6,221.8 574.1,224.1 575.4,222.0 576.3,222.2 580.1,223.6 582.5,221.7 583.9,220.8 586.2,221.1" fill="#41bc8d"/>
<polygon points="521.5,218.2 522.6,219.9 523.6,221.8 523.6,225.0 525.0,226.7 524.9,228.7 527.0,227.8 528.3,226.7 530.4,225.2 532.7,224.0 533.6,223.4 535.0,222.4 535.3,219.0 535.2,217.7 535.4,216.4 535.7,215.7 535.6,215.7 532.6,215.5 529.2,214.4 529.0,216.2 527.7,217.6 523.7,217.7" fill="#459199"/>
<polygon points="569.4,223.9 568.3,224.3 565.6,223.8 562.0,222.6 560.7,223.4 558.4,221.7 557.3,224.6 554.6,226.7 552.4,227.8 555.4,229.3 557.1,231.0 556.7,234.3 558.7,236.2 561.7,236.3 561.9,238.1 563.7,237.9 564.8,236.0 568.1,233.2 570.1,233.5 570.3,232.1 571.3,228.3 570.4,226.2 571.3,225.1" fill="#459199"/>
<polygon points="578.1,238.7 581.6,238.8 582.7,236.3 584.3,233.3 586.2,232.9 585.2,231.7 582.2,231.0 579.7,229.2 578.6,229.3 575.6,227.3 574.0,225.8 573.0,224.9 571.3,225.1 570.4,226.2 571.3,228.3 570.3,232.1 570.1,233.5 571.2,234.4 573.4,235.1 575.0,237.5 575.7,238.1" fill="#41bc8d"/>
<polygon points="586.2,232.9 587.1,233.6 587.3,231.1 589.1,229.0 589.4,228.7 588.1,226.1 590.1,223.4 589.5,220.7 588.1,219.7 588.0,219.7 586.2,221.1 583.9,220.8 582.5,221.7 580.1,223.6 576.3,222.2 575.4,222.0 574.1,224.1 573.0,224.9 574.0,225.8 575.6,227.3 578.6,229.3 579.7,229.2 582.2,231.0 585.2,231.7" fill="#516a9a"/>
<polygon points="546.5,240.6 546.2,238.0 544.9,236.2 545.9,234.4 544.4,230.5 544.8,228.7 543.9,228.9 542.5,230.1 539.4,230.5 537.5,231.6 535.3,232.4 532.0,232.5 530.4,234.9 528.3,235.3 525.8,234.1 527.4,236.2 529.1,237.2 532.2,237.6 533.2,239.0 535.6,239.4 538.8,241.6 540.3,241.5 543.5,242.3 544.4,242.3" fill="#603c8b"/>
<polygon points="560.2,241.7 561.9,238.1 561.7,236.3 558.7,236.2 556.7,234.3 557.1,231.0 555.4,229.3 552.4,227.8 552.2,227.1 549.9,228.5 547.1,229.3 544.8,228.7 544.4,230.5 545.9,234.4 544.9,236.2 546.2,238.0 546.5,240.6 547.2,239.9 549.4,242.1 551.7,242.5 552.7,242.7 556.1,244.4 558.5,242.3 560.1,242.3" fill="#516a9a"/>
<polygon points="570.2,249.1 572.3,248.4 573.5,245.3 573.7,243.4 575.3,241.5 575.7,238.1 575.0,237.5 573.4,235.1 571.2,234.4 570.1,233.5 568.1,233.2 564.8,236.0 563.7,237.9 561.9,238.1 560.2,241.7 562.7,243.8 565.8,244.6 566.1,247.2 568.1,247.5" fill="#575295"/>
<polygon points="585.7,249.5 587.3,250.4 590.3,250.7 591.5,250.7 591.4,247.8 593.0,245.1 593.2,244.6 593.4,242.6 592.2,241.1 590.0,237.5 589.7,235.2 589.4,235.2 587.1,233.6 586.2,232.9 584.3,233.3 582.7,236.3 581.6,238.8 578.1,238.7 580.3,241.1 581.2,242.8 581.5,245.3 583.6,248.1 585.4,248.7" fill="#575295"/>
<polygon points="535.0,222.4 533.6,223.4 532.7,224.0 530.4,225.2 528.3,226.7 527.0,227.8 524.9,228.7 523.5,231.5 524.6,234.0 523.9,235.1 525.8,234.1 528.3,235.3 530.4,234.9 532.0,232.5 535.3,232.4 537.5,231.6 539.4,230.5 542.5,230.1 543.9,228.9 543.1,228.7 540.7,226.7 539.4,225.6 537.8,224.9" fill="#575295"/>
<polygon points="601.8,211.5 601.4,208.1 602.2,205.3 603.0,204.5 601.7,201.3 602.3,198.3 600.6,197.9 598.8,197.4 597.0,197.0 594.6,196.5 592.6,198.5 592.9,199.9 591.6,202.2 590.3,205.7 590.8,206.9 594.0,206.8 595.4,209.3 596.5,208.9 599.9,209.9" fill="#459199"/>
<polygon points="614.9,209.1 616.6,207.7 618.1,206.9 620.8,206.2 623.6,205.4 624.8,204.0 624.6,201.7 624.4,199.5 624.2,197.2 624.0,195.0 622.0,195.3 620.0,195.7 618.0,196.0 616.1,196.5 614.1,197.0 612.2,197.4 610.3,197.9 611.8,200.1 611.6,202.3 611.5,204.2 614.3,207.6" fill="#575295"/>
<polygon points="601.8,211.5 600.7,211.4 601.5,211.9 602.4,212.6 605.4,214.7 607.1,213.6 609.9,215.7 612.6,214.5 613.6,213.6 614.5,210.7 614.9,209.1 614.3,207.6 611.5,204.2 611.6,202.3 611.8,200.1 610.3,197.9 610.0,198.0 608.3,198.3 606.7,198.7 605.0,199.0 603.7,198.7 602.3,198.3 601.7,201.3 603.0,204.5 602.2,205.3 601.4,208.1" fill="#516a9a"/>
<polygon points="614.9,209.1 614.5,210.7 613.6,213.6 615.6,213.4 618.4,214.4 620.4,213.2 622.1,215.3 624.6,215.0 626.6,215.7 628.3,215.8 628.0,214.0 627.2,212.0 626.5,210.0 625.8,208.0 625.0,206.0 624.8,204.0 623.6,205.4 620.8,206.2 618.1,206.9 616.6,207.7" fill="#459199"/>
<polygon points="589.4,207.4 588.7,209.5 590.2,211.8 591.2,213.1 590.9,214.5 592.2,215.3 595.4,214.8 598.9,214.7 600.2,213.3 601.5,211.9 600.7,211.4 601.8,211.5 599.9,209.9 596.5,208.9 595.4,209.3 594.0,206.8 590.8,206.9" fill="#575295"/>
<polygon points="614.2,223.4 616.8,223.4 617.5,223.1 620.2,224.5 622.8,223.5 624.2,224.8 626.7,225.3 629.0,225.7 629.9,225.7 629.6,223.7 629.3,221.7 629.0,219.8 628.6,217.8 628.3,215.8 626.6,215.7 624.6,215.0 622.1,215.3 620.4,213.2 618.4,214.4 615.6,213.4 613.6,213.6 612.6,214.5 612.8,216.5 613.5,217.5 612.7,220.4" fill="#41bc8d"/>
<polygon points="629.0,225.7 626.7,225.3 624.2,224.8 622.8,223.5 620.2,224.5 617.5,223.1 616.8,223.4 614.2,223.4 613.6,225.3 612.3,225.2 611.8,227.0 613.8,230.3 612.9,232.3 612.7,232.2 614.8,234.7 615.9,238.0 617.8,236.5 619.7,235.7 621.0,236.2 623.3,236.2 625.2,233.5 626.6,231.4 627.3,230.2 628.8,227.2" fill="#459199"/>
<polygon points="602.4,212.6 602.7,215.3 600.2,217.9 600.8,219.3 601.2,221.8 601.4,225.7 602.6,227.0 603.6,227.1 606.3,228.5 608.7,228.5 608.9,227.7 611.8,227.0 612.3,225.2 613.6,225.3 614.2,223.4 612.7,220.4 613.5,217.5 612.8,216.5 612.6,214.5 609.9,215.7 607.1,213.6 605.4,214.7" fill="#516a9a"/>
<polygon points="603.6,227.1 602.6,227.0 601.4,225.7 601.2,221.8 600.8,219.3 597.2,221.7 596.0,222.4 594.1,221.8 591.7,223.1 590.1,223.4 588.1,226.1 589.4,228.7 589.1,229.0 592.7,229.2 594.5,230.2 597.1,230.9 599.4,230.5 600.9,231.7 601.4,228.8" fill="#603c8b"/>
<polygon points="590.9,214.5 591.3,216.8 589.5,218.6 588.1,219.7 589.5,220.7 590.1,223.4 591.7,223.1 594.1,221.8 596.0,222.4 597.2,221.7 600.8,219.3 600.2,217.9 602.7,215.3 602.4,212.6 601.5,211.9 600.2,213.3 598.9,214.7 595.4,214.8 592.2,215.3" fill="#459199"/>
<polygon points="615.9,238.0 614.8,234.7 612.7,232.2 612.9,232.3 613.8,230.3 611.8,227.0 608.9,227.7 608.7,228.5 606.3,228.5 603.6,227.1 601.4,228.8 600.9,231.7 601.6,233.0 601.5,234.5 602.8,236.6 602.2,240.3 603.3,242.2 605.6,242.1 607.6,243.2 608.6,244.3 611.6,244.5 612.2,241.8 613.9,240.2 614.3,240.1" fill="#575295"/>
<polygon points="589.1,229.0 587.3,231.1 587.1,233.6 589.4,235.2 589.7,235.2 590.0,237.5 592.2,241.1 593.4,242.6 596.3,240.7 597.1,241.0 600.1,240.5 602.2,240.3 602.8,236.6 601.5,234.5 601.6,233.0 600.9,231.7 599.4,230.5 597.1,230.9 594.5,230.2 592.7,229.2" fill="#516a9a"/>
<polygon points="623.3,236.2 621.0,236.2 619.7,235.7 617.8,236.5 615.9,238.0 614.3,240.1 613.9,240.2 612.2,241.8 611.6,244.5 611.8,244.9 614.8,247.1 615.8,245.7 618.1,246.5 620.8,246.0 622.1,245.7 624.6,246.4 627.2,246.7 629.1,247.1 630.2,246.5 630.2,244.4 628.9,241.6 628.1,240.8 626.1,239.2 625.0,237.0" fill="#603c8b"/>
<polygon points="635.0,242.3 634.0,241.0 633.5,239.0 633.0,237.0 632.5,235.0 632.0,233.0 631.3,230.7 630.7,228.3 630.0,226.0 629.9,225.7 629.0,225.7 628.8,227.2 627.3,230.2 626.6,231.4 625.2,233.5 623.3,236.2 625.0,237.0 626.1,239.2 628.1,240.8 628.9,241.6 630.2,244.4 632.4,242.9" fill="#575295"/>
<polygon points="602.2,240.3 600.1,240.5 597.1,241.0 596.3,240.7 593.4,242.6 593.2,244.6 593.0,245.1 591.4,247.8 591.5,250.7 592.6,250.8 595.0,252.5 597.3,252.6 598.1,254.1 600.6,256.0 603.1,255.8 604.8,254.3 605.2,252.6 607.9,251.9 609.5,249.0 611.8,246.5 611.8,244.9 611.6,244.5 608.6,244.3 607.6,243.2 605.6,242.1 603.3,242.2" fill="#516a9a"/>
<polygon points="611.8,244.9 611.8,246.5 612.8,249.1 614.3,250.8 616.8,253.1 617.3,256.4 618.2,257.2 621.4,258.3 622.4,260.7 622.6,260.9 624.1,259.1 624.6,257.7 627.3,255.7 629.2,255.3 630.3,254.8 630.6,251.4 629.1,249.3 629.1,247.1 627.2,246.7 624.6,246.4 622.1,245.7 620.8,246.0 618.1,246.5 615.8,245.7 614.8,247.1" fill="#575295"/>
<polygon points="622.4,260.7 621.4,258.3 618.2,257.2 617.3,256.4 616.8,253.1 614.3,250.8 612.8,249.1 611.8,246.5 609.5,249.0 607.9,251.9 605.2,252.6 604.8,254.3 603.1,255.8 601.9,256.4 602.7,258.6 601.9,261.1 603.8,263.5 605.9,264.2 607.2,266.8 610.7,267.5 612.3,266.0 613.8,264.6 615.8,263.7 617.6,263.2 619.7,262.4" fill="#516a9a"/>
<polygon points="630.3,254.8 629.2,255.3 627.3,255.7 624.6,257.7 624.1,259.1 622.6,260.9 622.7,262.0 625.3,264.9 626.8,268.0 626.0,268.6 629.7,267.8 632.3,268.0 634.0,266.3 634.7,265.9 639.1,266.3 640.9,265.4 640.7,263.2 640.5,261.1 640.3,258.9 640.1,256.7 638.0,256.0 636.3,256.3 632.7,255.2 631.3,254.1" fill="#603c8b"/>
<polygon points="587.7,258.3 588.6,257.0 587.0,254.7 587.3,250.4 585.7,249.5 584.0,251.8 581.7,253.0 579.7,251.9 577.3,252.8 576.5,253.1 572.6,253.3 573.7,256.0 574.7,257.8 573.1,259.9 573.4,264.2 576.4,264.3 578.8,265.3 579.9,266.6 581.8,263.7 582.9,262.2 585.5,262.3 587.3,260.8" fill="#459199"/>
<polygon points="599.1,263.9 599.7,262.3 600.2,262.4 601.9,261.1 602.7,258.6 601.9,256.4 603.1,255.8 600.6,256.0 598.1,254.1 597.3,252.6 595.0,252.5 592.6,250.8 591.5,250.7 590.3,250.7 587.3,250.4 587.0,254.7 588.6,257.0 587.7,258.3 588.6,259.0 591.4,261.5 593.0,264.0 592.7,264.9 596.5,265.1" fill="#575295"/>
<polygon points="627.2,276.1 629.0,277.2 629.6,278.0 631.7,278.3 634.4,279.1 636.0,279.2 637.6,278.8 641.0,278.1 641.0,275.9 641.0,273.7 641.0,271.5 641.0,269.2 641.0,267.0 640.9,265.4 639.1,266.3 634.7,265.9 634.0,266.3 632.3,268.0 629.7,267.8 626.0,268.6 626.2,269.9 626.6,272.4 625.3,274.9" fill="#41bc8d"/>
<polygon points="622.9,280.2 625.3,277.2 627.2,276.1 625.3,274.9 626.6,272.4 626.2,269.9 626.0,268.6 626.8,268.0 625.3,264.9 622.7,262.0 622.6,260.9 622.4,260.7 619.7,262.4 617.6,263.2 615.8,263.7 613.8,264.6 612.3,266.0 610.7,267.5 610.4,268.1 610.5,270.8 609.9,274.0 611.4,275.8 614.8,275.4 616.2,277.7 619.0,277.8 621.7,278.5" fill="#575295"/>
<polygon points="609.9,274.0 610.5,270.8 610.4,268.1 610.7,267.5 607.2,266.8 605.9,264.2 603.8,263.5 601.9,261.1 600.2,262.4 599.7,262.3 599.1,263.9 598.6,266.3 598.7,268.3 599.2,269.9 598.6,272.0 600.6,275.7 602.3,274.6 602.8,274.8 605.8,275.0 607.7,275.1 608.6,273.8" fill="#575295"/>
<polygon points="593.5,278.7 594.7,276.1 598.2,275.8 600.6,275.7 598.6,272.0 599.2,269.9 598.7,268.3 598.6,266.3 599.1,263.9 596.5,265.1 592.7,264.9 592.4,266.2 591.9,268.4 589.6,271.9 590.9,272.4 592.1,273.8 592.6,276.0" fill="#516a9a"/>
<polygon points="588.1,284.2 589.6,283.6 591.0,283.0 592.2,282.7 593.5,281.2 593.5,278.7 592.6,276.0 592.1,273.8 590.9,272.4 589.6,271.9 587.8,270.6 585.5,270.5 583.4,270.1 582.6,269.2 582.0,271.2 580.2,273.8 580.8,274.7 581.1,277.1 582.4,278.6 585.3,280.1 586.6,283.0" fill="#459199"/>
<polygon points="631.7,278.3 632.0,280.3 632.9,284.6 633.4,286.0 633.0,286.9 634.8,288.4 636.7,291.6 638.1,291.4 638.3,289.6 641.0,289.9 641.0,287.6 641.0,285.4 641.0,283.2 641.0,281.0 641.0,279.6 641.0,278.1 637.6,278.8 636.0,279.2 634.4,279.1" fill="#41bc8d"/>
<polygon points="627.2,276.1 625.3,277.2 622.9,280.2 622.3,281.9 621.5,283.3 621.1,285.6 622.6,286.3 624.0,287.0 626.0,288.5 628.0,290.0 629.7,291.5 631.4,292.9 633.0,294.4 634.4,292.9 636.7,291.6 634.8,288.4 633.0,286.9 633.4,286.0 632.9,284.6 632.0,280.3 631.7,278.3 629.6,278.0 629.0,277.2" fill="#575295"/>
<polygon points="607.2,282.0 609.4,282.3 611.6,282.5 613.8,282.8 616.0,283.0 617.7,283.9 619.4,284.7 621.1,285.6 621.5,283.3 622.3,281.9 622.9,280.2 621.7,278.5 619.0,277.8 616.2,277.7 614.8,275.4 611.4,275.8 609.9,274.0 608.6,273.8 607.7,275.1 608.7,277.5 607.3,279.7" fill="#575295"/>
<polygon points="607.7,275.1 605.8,275.0 602.8,274.8 602.3,274.6 600.6,275.7 598.2,275.8 594.7,276.1 593.5,278.7 593.5,281.2 592.2,282.7 594.2,282.3 596.1,281.9 598.1,281.4 600.0,281.0 602.3,281.3 604.7,281.7 607.0,282.0 607.2,282.0 607.3,279.7 608.7,277.5" fill="#516a9a"/>
<polygon points="570.8,284.7 570.9,285.3 572.5,287.4 574.4,288.0 575.7,289.4 577.9,291.5 579.9,291.0 582.0,290.5 584.0,290.0 584.0,288.0 584.0,286.0 586.1,285.1 588.1,284.2 586.6,283.0 585.3,280.1 582.4,278.6 581.1,277.1 580.8,274.7 577.2,276.7 573.9,278.7 573.6,278.2 572.7,278.5 569.5,280.1 569.8,281.8 570.1,284.5" fill="#603c8b"/>
<polygon points="582.6,269.2 583.4,270.1 585.5,270.5 587.8,270.6 589.6,271.9 591.9,268.4 592.4,266.2 592.7,264.9 593.0,264.0 591.4,261.5 588.6,259.0 587.7,258.3 587.3,260.8 585.5,262.3 582.9,262.2 581.8,263.7 579.9,266.6 580.9,267.6" fill="#575295"/>
<polygon points="525.8,234.1 523.9,235.1 523.0,236.4 522.6,239.0 522.9,239.9 523.4,240.6 525.0,242.4 526.5,244.3 529.4,243.9 530.8,245.1 531.7,247.0 534.8,247.0 536.6,248.4 538.0,248.3 539.0,247.1 541.5,245.2 542.4,243.8 543.5,242.3 540.3,241.5 538.8,241.6 535.6,239.4 533.2,239.0 532.2,237.6 529.1,237.2 527.4,236.2" fill="#575295"/>
<polygon points="536.6,248.4 534.8,247.0 531.7,247.0 530.8,245.1 529.4,243.9 526.5,244.3 525.0,242.4 524.1,246.0 523.0,247.8 523.5,250.0 523.0,254.0 523.7,255.7 523.2,257.0 524.6,260.7 524.8,260.6 524.8,260.6 525.0,258.5 527.1,258.1 530.8,257.6 532.8,255.8 533.3,254.5 534.8,254.3 536.2,253.3 535.1,251.1" fill="#603c8b"/>
<polygon points="547.4,254.1 545.9,251.9 544.7,250.8 544.0,250.0 542.9,248.1 541.5,245.2 539.0,247.1 538.0,248.3 536.6,248.4 535.1,251.1 536.2,253.3 534.8,254.3 536.8,254.7 539.2,256.4 540.4,257.9 543.5,258.1 544.6,257.8 546.9,256.5" fill="#575295"/>
<polygon points="554.9,254.0 556.1,250.6 555.5,249.2 557.1,248.0 556.1,244.4 552.7,242.7 551.7,242.5 549.4,242.1 547.2,239.9 546.5,240.6 544.4,242.3 543.5,242.3 542.4,243.8 541.5,245.2 542.9,248.1 544.0,250.0 544.7,250.8 545.9,251.9 547.4,254.1 548.2,253.6 551.6,254.5 554.3,254.3" fill="#575295"/>
<polygon points="561.6,255.7 563.2,254.6 566.0,254.5 568.1,253.9 568.9,253.4 571.2,252.5 571.5,250.4 570.2,249.1 568.1,247.5 566.1,247.2 565.8,244.6 562.7,243.8 560.2,241.7 560.1,242.3 558.5,242.3 556.1,244.4 557.1,248.0 555.5,249.2 556.1,250.6 554.9,254.0 556.2,254.9 559.7,255.6" fill="#575295"/>
<polygon points="572.6,253.3 576.5,253.1 577.3,252.8 579.7,251.9 581.7,253.0 584.0,251.8 585.7,249.5 585.4,248.7 583.6,248.1 581.5,245.3 581.2,242.8 580.3,241.1 578.1,238.7 575.7,238.1 575.3,241.5 573.7,243.4 573.5,245.3 572.3,248.4 570.2,249.1 571.5,250.4 571.2,252.5" fill="#575295"/>
<polygon points="547.4,254.1 546.9,256.5 544.6,257.8 543.5,258.1 542.9,260.8 542.5,263.3 543.0,265.2 541.9,267.6 542.3,270.7 544.6,272.2 547.0,271.7 548.2,272.8 549.9,271.8 550.8,269.6 553.3,269.1 554.0,267.3 554.3,263.7 554.3,262.7 552.7,260.1 554.6,257.3 554.3,255.9 554.3,254.3 551.6,254.5 548.2,253.6" fill="#516a9a"/>
<polygon points="554.0,267.3 556.6,265.9 558.0,265.1 561.0,266.1 563.9,265.3 562.0,262.9 562.1,260.1 561.4,258.5 561.6,255.7 559.7,255.6 556.2,254.9 554.9,254.0 554.3,254.3 554.3,255.9 554.6,257.3 552.7,260.1 554.3,262.7 554.3,263.7" fill="#575295"/>
<polygon points="563.9,265.3 565.2,265.6 566.1,267.6 568.9,268.3 570.0,265.1 571.5,264.3 573.4,264.2 573.1,259.9 574.7,257.8 573.7,256.0 572.6,253.3 571.2,252.5 568.9,253.4 568.1,253.9 566.0,254.5 563.2,254.6 561.6,255.7 561.4,258.5 562.1,260.1 562.0,262.9" fill="#603c8b"/>
<polygon points="543.0,265.2 540.1,264.5 537.7,264.6 536.1,263.0 532.8,263.1 531.6,262.2 530.1,261.9 526.6,261.1 524.8,260.6 524.8,260.6 524.4,262.2 525.1,264.8 527.4,266.7 527.0,269.7 527.0,271.1 527.8,272.7 528.3,275.6 531.5,274.9 532.5,275.2 535.8,276.2 538.6,276.4 540.0,276.2 540.3,274.5 542.1,273.3 544.6,272.2 542.3,270.7 541.9,267.6" fill="#603c8b"/>
<polygon points="549.9,271.8 552.3,273.6 553.3,276.2 553.3,277.4 556.6,276.3 559.1,277.8 560.8,276.0 563.6,276.7 566.0,276.7 567.5,276.7 566.7,275.3 568.7,272.9 568.1,270.8 568.5,269.2 568.9,268.3 566.1,267.6 565.2,265.6 563.9,265.3 561.0,266.1 558.0,265.1 556.6,265.9 554.0,267.3 553.3,269.1 550.8,269.6" fill="#459199"/>
<polygon points="569.5,280.1 572.7,278.5 573.6,278.2 573.9,278.7 577.2,276.7 580.8,274.7 580.2,273.8 582.0,271.2 582.6,269.2 580.9,267.6 579.9,266.6 578.8,265.3 576.4,264.3 573.4,264.2 571.5,264.3 570.0,265.1 568.9,268.3 568.5,269.2 568.1,270.8 568.7,272.9 566.7,275.3 567.5,276.7 568.6,278.3" fill="#459199"/>
<polygon points="553.3,277.4 553.7,277.8 553.4,280.1 553.2,283.6 554.8,284.6 553.2,286.7 554.2,290.8 555.6,292.6 558.8,292.4 560.5,294.4 561.6,292.1 562.3,289.8 565.1,289.6 567.2,288.6 568.4,286.2 570.8,284.7 570.1,284.5 569.8,281.8 569.5,280.1 568.6,278.3 567.5,276.7 566.0,276.7 563.6,276.7 560.8,276.0 559.1,277.8 556.6,276.3" fill="#459199"/>
<polygon points="563.3,307.5 565.2,306.7 567.1,305.8 569.0,305.0 569.7,302.7 570.3,300.3 571.0,298.0 571.3,296.3 571.7,294.7 572.0,293.0 574.0,292.5 575.9,292.0 577.9,291.5 575.7,289.4 574.4,288.0 572.5,287.4 570.9,285.3 570.8,284.7 568.4,286.2 567.2,288.6 565.1,289.6 562.3,289.8 561.6,292.1 560.5,294.4 559.6,296.3 561.3,296.9 561.5,300.9 562.2,303.1 562.7,305.5" fill="#575295"/>
<polygon points="429.4,246.4 430.1,244.9 428.9,242.2 430.7,239.8 429.4,238.3 431.0,235.8 431.1,233.6 431.4,232.0 432.0,231.4 430.2,229.2 427.4,230.4 425.3,230.9 425.1,232.8 423.0,234.6 420.4,234.7 418.7,236.3 415.8,239.7 414.0,240.4 415.6,241.7 417.8,242.1 418.6,244.2 419.1,247.9 420.7,249.8 422.0,250.0 424.9,249.9 425.3,249.5 426.0,247.4" fill="#575295"/>
<polygon points="440.8,237.2 438.2,235.5 437.4,234.5 435.4,235.1 432.3,233.4 431.4,232.0 431.1,233.6 431.0,235.8 429.4,238.3 430.7,239.8 428.9,242.2 430.1,244.9 429.4,246.4 430.5,248.3 431.2,249.0 433.9,249.8 436.9,252.3 437.4,251.0 439.1,249.5 441.2,247.6 442.9,247.1 442.8,245.7 442.3,242.1 442.1,239.3 442.7,237.9" fill="#575295"/>
<polygon points="447.1,277.5 447.5,277.9 448.9,274.5 450.5,271.8 451.2,270.6 453.0,268.0 453.1,266.8 454.1,265.8 454.2,263.6 454.4,261.0 453.1,260.1 450.4,259.1 447.8,258.9 446.9,260.1 443.1,259.8 441.7,260.4 440.2,259.3 435.7,258.8 433.8,262.4 434.1,264.5 432.1,265.6 433.9,266.0 436.9,267.8 438.1,269.8 440.1,270.3 442.2,272.8 442.3,274.1 444.3,275.1" fill="#516a9a"/>
<polygon points="424.2,282.5 425.6,284.2 427.0,286.0 427.6,286.6 430.3,284.4 431.5,284.6 433.3,283.7 437.0,280.9 439.1,280.9 439.5,281.3 442.4,278.5 446.0,277.1 447.1,277.5 444.3,275.1 442.3,274.1 442.2,272.8 440.1,270.3 438.1,269.8 436.9,267.8 433.9,266.0 432.1,265.6 431.0,265.7 429.5,267.1 429.5,268.6 427.7,270.2 428.4,273.3 426.0,274.7 427.1,277.4 424.6,280.7" fill="#459199"/>
<polygon points="630.2,244.4 630.2,246.5 629.1,247.1 629.1,249.3 630.6,251.4 630.3,254.8 631.3,254.1 632.7,255.2 636.3,256.3 638.0,256.0 640.1,256.7 640.0,255.0 639.4,253.0 638.8,251.0 638.2,249.0 637.6,247.0 637.0,245.0 636.0,243.7 635.0,242.3 632.4,242.9" fill="#516a9a"/>
<polygon points="508.1,319.0 506.8,319.0 503.7,316.7 502.3,317.5 499.9,315.7 496.7,314.9 495.4,314.3 492.0,313.2 489.9,312.4 489.1,312.2 487.5,314.0 487.5,317.2 486.0,318.3 485.6,320.6 484.6,324.0 483.8,326.1 483.2,328.7 482.5,331.1 483.0,331.0 483.7,329.0 484.3,327.0 485.0,325.0 487.0,324.7 489.0,324.3 491.0,324.0 493.5,324.0 496.0,324.0 498.5,324.0 501.0,324.0 502.8,322.8 504.7,321.7 506.5,320.5 508.4,319.4" fill="#575295"/>
<polygon points="409.6,339.4 408.5,336.8 409.7,335.0 408.6,333.2 406.9,331.9 406.9,328.2 406.4,326.6 404.7,328.3 403.0,330.0 401.2,331.8 399.5,333.5 397.8,335.2 396.0,337.0 397.7,337.7 399.3,338.3 401.0,339.0 403.1,339.3 405.2,339.7 407.3,340.0 409.4,340.4" fill="#516a9a"/>
<polygon points="636.7,291.6 634.4,292.9 633.0,294.4 634.5,295.7 636.0,297.0 638.5,297.0 641.0,297.0 641.0,294.6 641.0,292.2 641.0,289.9 638.3,289.6 638.1,291.4" fill="#575295"/></g>
<g fill="none" stroke="#f3f1f8" stroke-opacity="0.82" stroke-width="0.85" stroke-linejoin="round"><polygon points="280.4,189.5 282.5,189.0 283.0,188.3 283.7,186.8 286.1,185.7 285.0,185.0 284.5,183.0 284.0,181.0 281.8,181.5 279.5,182.0 277.2,182.5 275.0,183.0 275.5,184.9 275.9,186.8 276.4,188.6 277.9,189.2"/>
<polygon points="280.5,198.6 280.3,196.6 280.6,194.3 279.8,190.5 280.4,189.5 277.9,189.2 276.4,188.6 277.0,191.0 275.7,193.0 274.3,195.0 273.0,197.0 272.0,198.8 271.0,200.5 272.6,201.5 276.0,201.3 277.4,199.0 279.0,198.4"/>
<polygon points="291.2,188.6 289.6,187.8 288.0,187.0 286.1,185.7 283.7,186.8 283.0,188.3 282.5,189.0 280.4,189.5 279.8,190.5 280.6,194.3 280.3,196.6 280.5,198.6 283.4,197.5 285.1,199.6 286.6,196.9 286.9,194.3 288.2,193.0 290.2,190.1"/>
<polygon points="285.1,199.6 286.0,200.7 288.2,200.7 290.7,202.3 292.5,202.7 296.0,203.6 297.4,205.5 299.2,204.7 299.0,202.6 299.2,200.1 300.4,198.5 299.9,196.3 301.4,194.6 299.6,193.4 297.8,192.2 296.0,191.0 294.4,190.2 292.8,189.4 291.2,188.6 290.2,190.1 288.2,193.0 286.9,194.3 286.6,196.9"/>
<polygon points="282.5,212.0 281.0,208.7 280.1,206.9 278.8,205.0 277.0,202.3 276.0,201.3 272.6,201.5 271.0,200.5 270.0,202.3 269.0,204.0 269.5,206.0 270.0,208.0 270.5,210.0 271.0,212.0 269.0,211.0 267.0,210.0 267.2,211.6 269.9,212.4 272.1,212.7 273.7,213.2 277.4,213.6 279.0,213.3 282.0,214.5 282.4,214.0 281.6,213.7"/>
<polygon points="282.5,212.0 282.3,209.3 284.1,207.6 285.8,206.3 286.4,202.8 288.2,200.7 286.0,200.7 285.1,199.6 283.4,197.5 280.5,198.6 279.0,198.4 277.4,199.0 276.0,201.3 277.0,202.3 278.8,205.0 280.1,206.9 281.0,208.7"/>
<polygon points="281.0,226.4 281.0,226.4 281.8,226.8 282.1,229.6 283.6,232.5 284.4,234.2 283.9,236.2 285.9,237.6 288.3,240.4 287.7,243.0 287.7,243.0 287.7,243.0 287.8,243.0 287.8,243.0 287.8,243.0 290.1,239.8 290.6,239.4 293.2,237.8 294.7,235.0 296.3,233.5 296.3,233.5 296.3,233.5 295.5,232.5 293.7,228.8 293.8,226.0 294.0,225.4 294.0,225.4 294.0,225.4 294.0,225.4 294.0,225.4 294.0,225.4 294.0,225.4 294.0,225.4 294.0,225.4 294.0,225.4 294.0,225.4 294.0,225.4 294.5,223.8 295.4,220.8 297.0,219.8 296.9,220.0 298.0,218.2 298.0,218.1 298.0,218.1 299.4,215.1 298.9,213.8 298.0,212.3 298.0,212.3 298.0,212.3 298.0,212.3 298.0,212.3 298.0,212.3 298.0,212.3 300.3,210.1 300.3,207.8 300.3,207.8 300.3,207.8 299.4,206.3 299.2,204.7 299.2,204.7 299.2,204.7 297.4,205.5 296.0,203.6 292.5,202.7 290.7,202.3 288.2,200.7 288.2,200.7 288.2,200.7 286.4,202.8 285.8,206.3 284.1,207.6 282.3,209.3 282.5,212.0 282.5,212.0 282.5,212.0 281.6,213.7 282.3,214.0 282.3,214.0 282.3,214.0 282.3,214.0 282.3,214.0 282.3,214.0 282.3,214.0 282.3,214.0 282.3,214.0 282.0,214.5 282.0,214.5 282.0,214.5 282.2,217.5 281.6,220.3 282.3,220.8 281.0,223.1 280.9,226.3 280.9,226.3 281.0,226.3 281.0,226.3 281.0,226.3 281.0,226.3 281.0,226.3 281.0,226.4"/>
<polygon points="427.9,293.0 427.9,293.0 428.3,294.9 427.4,298.3 428.4,299.4 430.1,302.4 429.1,305.1 429.3,305.7 428.6,307.8 428.6,307.8 428.6,307.8 430.1,309.9 430.2,309.9 430.2,309.9 430.2,309.9 430.2,309.9 430.2,309.9 430.2,309.9 430.2,309.9 430.2,309.9 430.2,309.9 430.4,313.3 429.4,314.4 430.1,317.2 428.5,320.1 429.1,321.9 429.1,321.9 429.1,321.9 429.8,323.9 430.1,325.9 432.6,329.2 434.0,330.8 434.0,330.8 434.0,330.8 434.8,329.1 437.0,327.6 441.0,326.9 442.6,326.3 443.0,326.1 446.6,324.5 450.3,322.6 450.4,322.7 450.4,322.7 450.4,322.7 451.1,320.5 452.2,318.1 452.3,316.4 452.7,315.2 452.7,315.2 452.7,315.2 452.3,311.6 450.0,310.5 449.6,309.4 450.4,307.0 448.6,304.8 448.6,304.8 448.6,304.8 448.6,304.8 448.6,304.8 448.6,304.8 448.6,304.8 448.6,304.8 449.4,301.5 449.4,301.5 449.4,301.5 449.1,300.8 446.8,299.4 447.0,298.0 447.0,298.0 447.0,298.0 446.4,295.7 443.7,294.8 442.1,294.0 440.4,292.8 436.8,292.5 435.2,290.0 432.5,289.9 430.3,288.7 428.5,287.5 428.5,287.5 428.5,287.5 430.0,289.0 430.0,289.0 430.0,289.0 430.0,289.0 430.0,289.0 430.0,289.0 430.0,289.0 430.0,289.0 430.0,289.0 430.0,289.0 430.0,289.0 430.0,289.0 430.0,289.0 430.0,289.0 429.0,291.0 428.0,293.0 428.0,293.0 428.0,293.0 428.0,293.0 428.0,293.0 428.0,293.0 428.0,293.0 428.0,293.0 428.0,293.0 427.9,293.0"/>
<polygon points="430.6,370.4 430.6,370.4 431.8,369.2 433.0,368.0 433.0,368.0 433.0,368.0 433.0,368.0 433.0,368.0 435.3,367.0 437.5,366.0 439.8,365.0 442.0,364.0 444.1,363.0 446.2,362.1 448.3,361.1 449.9,360.4 451.4,359.7 453.0,359.0 453.0,359.0 455.0,358.0 457.0,357.0 459.0,356.0 461.0,355.0 463.0,354.0 463.0,354.0 463.0,354.0 463.2,351.8 463.5,349.5 463.7,347.3 464.0,345.0 464.0,345.0 464.0,345.0 464.0,345.0 464.0,345.0 464.0,345.0 465.3,343.0 466.5,341.0 467.7,339.0 469.0,337.0 469.0,337.0 469.0,337.0 469.0,337.0 469.0,337.0 470.6,335.9 472.2,334.7 472.2,334.7 472.2,334.7 470.4,333.8 467.6,333.2 466.1,332.9 463.1,332.1 461.3,332.9 459.7,331.6 459.6,331.6 459.6,331.6 456.4,334.0 455.1,335.7 452.6,338.8 451.2,339.5 450.5,340.6 448.6,343.8 448.6,343.8 448.6,343.8 448.6,343.8 448.6,343.8 448.6,343.8 448.6,343.8 448.6,343.8 448.6,343.8 446.6,344.0 444.4,342.8 442.1,343.6 440.7,343.8 436.9,344.4 434.1,345.7 434.1,345.7 434.1,345.7 435.0,346.2 436.5,347.5 436.5,347.5 436.5,347.5 436.5,347.6 436.5,347.6 436.5,347.6 435.6,350.8 435.6,352.5 434.7,354.9 434.5,358.6 433.5,360.1 433.3,362.8 431.9,365.4 431.5,367.2 430.6,370.4"/>
<polygon points="267.9,228.7 270.9,228.2 271.8,229.2 273.6,227.1 276.9,225.5 279.5,226.8 281.0,226.4 281.0,226.3 280.9,223.1 282.3,220.8 281.6,220.3 282.2,217.5 282.0,214.5 279.0,213.3 277.4,213.6 273.7,213.2 272.1,212.7 269.9,212.4 267.2,211.6 267.4,213.7 267.6,215.8 267.8,217.9 268.0,220.0 268.3,222.0 268.7,224.0 269.0,226.0 268.0,227.3 267.0,228.6"/>
<polygon points="299.2,204.7 299.4,206.3 300.3,207.8 301.2,208.0 303.8,208.3 307.0,209.0 308.8,208.9 311.3,207.8 314.1,208.8 316.1,207.3 316.3,206.9 316.6,206.2 318.1,202.8 316.6,200.9 316.6,198.7 314.7,197.5 312.9,196.2 311.0,195.0 308.5,195.0 306.0,195.0 304.0,195.0 302.0,195.0 301.4,194.6 299.9,196.3 300.4,198.5 299.2,200.1 299.0,202.6"/>
<polygon points="316.6,206.2 318.6,206.4 323.1,204.9 324.1,204.6 325.9,204.8 328.3,204.2 331.6,204.8 332.3,203.6 332.3,201.7 330.5,199.0 329.1,197.2 328.3,195.3 327.0,193.0 326.0,192.0 325.0,191.0 323.4,192.6 321.8,194.2 320.2,195.8 318.6,197.4 317.0,199.0 316.6,198.7 316.6,200.9 318.1,202.8"/>
<polygon points="339.9,189.3 338.0,188.0 336.0,187.5 334.0,187.0 332.0,188.0 330.0,189.0 329.7,191.0 329.3,193.0 329.0,195.0 328.0,194.0 327.0,193.0 328.3,195.3 329.1,197.2 330.5,199.0 332.3,201.7 332.9,200.9 335.8,198.4 338.6,196.7 340.0,196.9 341.8,196.2 343.0,193.7 342.1,192.4 340.8,190.9"/>
<polygon points="319.0,216.1 318.0,215.0 316.0,213.6 316.0,209.9 316.1,207.3 314.1,208.8 311.3,207.8 308.8,208.9 307.0,209.0 303.8,208.3 301.2,208.0 300.3,207.8 300.3,210.1 298.0,212.3 298.9,213.8 299.4,215.1 298.0,218.1 299.5,218.9 301.8,220.0 303.0,222.2 304.4,221.3 308.2,221.9 309.9,221.7 311.4,221.7 314.8,222.4 317.6,221.4 317.2,218.4"/>
<polygon points="316.6,206.2 316.3,206.9 316.1,207.3 316.0,209.9 316.0,213.6 318.0,215.0 319.0,216.1 320.8,216.3 323.8,217.9 326.0,217.2 327.7,218.5 327.2,215.5 329.1,213.9 328.5,211.3 330.4,207.9 330.3,207.0 331.6,204.8 328.3,204.2 325.9,204.8 324.1,204.6 323.1,204.9 318.6,206.4"/>
<polygon points="339.2,218.4 341.2,216.3 340.3,213.2 342.7,211.9 340.3,209.5 337.5,208.6 336.1,206.8 333.2,204.5 332.3,203.6 331.6,204.8 330.3,207.0 330.4,207.9 328.5,211.3 329.1,213.9 327.2,215.5 327.7,218.5 330.5,219.0 332.4,218.3 333.6,217.9 336.4,216.5"/>
<polygon points="303.0,222.2 302.8,223.8 302.3,225.5 302.7,229.1 301.8,230.5 303.9,231.7 305.7,233.1 305.6,235.0 307.3,235.5 309.9,233.4 310.8,233.7 312.5,232.9 314.4,230.3 315.3,229.1 315.7,227.3 316.2,225.4 314.8,222.4 311.4,221.7 309.9,221.7 308.2,221.9 304.4,221.3"/>
<polygon points="330.5,219.0 327.7,218.5 326.0,217.2 323.8,217.9 320.8,216.3 319.0,216.1 317.2,218.4 317.6,221.4 314.8,222.4 316.2,225.4 315.7,227.3 315.3,229.1 317.7,230.9 320.3,231.6 321.0,231.1 322.5,232.2 324.8,231.3 328.0,228.3 329.5,228.3 328.3,227.4 330.2,224.0 330.1,221.8 329.2,220.4"/>
<polygon points="339.2,218.4 336.4,216.5 333.6,217.9 332.4,218.3 330.5,219.0 329.2,220.4 330.1,221.8 330.2,224.0 328.3,227.4 329.5,228.3 332.2,229.7 334.6,230.2 335.1,232.5 337.6,232.4 339.2,233.3 341.1,233.6 341.4,232.1 342.9,229.2 345.1,227.6 343.5,227.3 343.2,223.9 342.0,220.1 339.5,219.7"/>
<polygon points="298.0,218.1 296.9,220.1 297.0,219.8 295.4,220.8 294.5,223.8 294.0,225.4 293.8,226.0 293.7,228.7 295.5,232.5 296.3,233.5 299.0,233.5 300.4,233.9 303.9,231.7 301.8,230.5 302.7,229.1 302.3,225.5 302.8,223.8 303.0,222.2 301.8,220.0 299.5,218.9"/>
<polygon points="295.2,252.9 297.0,251.9 297.8,250.2 300.1,250.0 301.1,247.8 304.2,246.2 306.4,244.5 307.5,242.0 308.8,239.4 307.9,238.2 307.3,235.5 305.6,235.0 305.7,233.1 303.9,231.7 300.4,233.9 299.0,233.5 296.3,233.5 294.7,235.0 293.2,237.8 290.6,239.4 290.1,239.8 287.8,243.0 289.0,244.8 292.1,246.8 292.6,247.7 292.4,249.6"/>
<polygon points="287.7,243.0 288.3,240.4 285.9,237.6 283.9,236.2 284.4,234.2 283.6,232.5 282.1,229.6 281.8,226.8 281.0,226.4 279.5,226.8 276.9,225.5 273.6,227.1 271.8,229.2 270.9,228.2 267.9,228.7 268.7,230.1 269.6,234.2 270.4,236.7 270.4,238.0 273.0,239.1 273.9,243.6 273.0,245.7 275.1,244.7 279.6,244.4 280.7,243.4 283.0,242.2 285.1,244.0"/>
<polygon points="273.0,245.7 273.9,243.6 273.0,239.1 270.4,238.0 270.4,236.7 269.6,234.2 268.7,230.1 267.9,228.7 267.0,228.6 266.0,229.8 265.0,231.0 263.5,232.5 262.0,234.0 260.5,235.5 259.0,237.0 259.3,239.0 259.7,241.0 260.0,243.0 261.5,245.0 263.0,247.0 264.0,248.7 265.0,250.3 266.0,252.0 266.0,254.1 266.0,256.3 267.5,254.4 269.6,251.6 269.9,250.9 270.6,249.2 272.9,246.6"/>
<polygon points="322.3,241.6 323.4,240.1 323.8,239.7 321.4,236.1 320.7,233.3 321.0,231.1 320.3,231.6 317.7,230.9 315.3,229.1 314.4,230.3 312.5,232.9 310.8,233.7 309.9,233.4 307.3,235.5 307.9,238.2 308.8,239.4 307.5,242.0 308.7,243.4 311.7,242.9 313.9,244.8 314.7,246.1 317.6,246.3 318.8,246.1 321.0,245.6 322.2,243.7"/>
<polygon points="329.5,228.3 328.0,228.3 324.8,231.3 322.5,232.2 321.0,231.1 320.7,233.3 321.4,236.1 323.8,239.7 323.4,240.1 322.3,241.6 324.8,241.8 328.3,243.4 329.2,242.9 332.3,244.0 335.4,242.1 337.1,240.1 338.3,240.7 339.2,238.9 339.5,236.1 339.2,233.3 337.6,232.4 335.1,232.5 334.6,230.2 332.2,229.7"/>
<polygon points="286.1,261.2 287.0,260.0 288.2,259.8 290.0,257.1 290.4,254.7 293.1,254.6 295.2,252.9 292.4,249.6 292.6,247.7 292.1,246.8 289.0,244.8 287.8,243.0 287.7,243.0 285.1,244.0 283.0,242.2 280.7,243.4 279.6,244.4 275.1,244.7 273.0,245.7 272.9,246.6 270.6,249.2 269.9,250.9 269.6,251.6 267.5,254.4 266.0,256.3 266.0,258.2 266.0,260.1 266.0,262.0 267.8,263.2 269.6,264.4 272.2,263.8 273.5,263.8 276.4,263.1 278.0,262.2 279.7,263.9 281.9,262.9"/>
<polygon points="317.6,246.3 314.7,246.1 313.9,244.8 311.7,242.9 308.7,243.4 307.5,242.0 306.4,244.5 304.2,246.2 301.1,247.8 300.1,250.0 297.8,250.2 297.0,251.9 298.1,253.9 300.2,256.9 301.7,258.1 302.3,259.3 304.6,261.4 307.2,261.9 308.1,261.6 308.8,260.0 311.7,257.8 313.0,256.8 315.4,254.4 317.7,252.4 318.1,252.5 319.0,249.1"/>
<polygon points="328.9,258.9 329.9,259.0 330.3,257.4 330.2,255.2 330.5,252.2 329.5,250.4 329.7,248.6 329.6,244.8 329.2,242.9 328.3,243.4 324.8,241.8 322.3,241.6 322.2,243.7 321.0,245.6 318.8,246.1 317.6,246.3 319.0,249.1 318.1,252.5 318.8,253.5 321.5,253.8 324.0,255.7 324.7,256.0 326.9,256.9"/>
<polygon points="382.7,165.0 383.0,165.8 386.1,165.6 388.8,165.9 389.7,164.6 393.8,164.9 396.7,164.9 397.9,165.0 401.8,166.4 403.6,165.1 404.7,165.5 408.1,165.0 410.4,165.2 411.0,165.0 410.8,162.6 410.6,160.2 410.4,157.8 410.2,155.4 410.0,153.0 408.5,152.0 407.0,151.0 405.0,151.5 403.0,152.0 401.0,152.5 399.0,153.0 397.0,153.5 395.0,154.0 393.0,154.5 391.0,155.0 389.3,156.3 387.7,157.7 386.0,159.0 384.0,159.8 382.0,160.5 380.0,161.2 378.0,162.0 377.5,162.2 378.2,163.6 380.5,163.9"/>
<polygon points="382.7,165.0 382.7,167.0 383.7,168.9 386.4,171.9 386.9,174.7 387.2,175.2 389.9,176.6 390.8,180.2 391.7,181.9 392.0,180.0 393.5,178.0 395.0,176.0 397.0,175.0 399.0,174.0 401.0,173.0 403.0,172.0 404.0,170.3 405.0,168.7 406.0,167.0 408.2,166.1 410.4,165.2 408.1,165.0 404.7,165.5 403.6,165.1 401.8,166.4 397.9,165.0 396.7,164.9 393.8,164.9 389.7,164.6 388.8,165.9 386.1,165.6 383.0,165.8"/>
<polygon points="368.2,181.3 370.5,179.9 369.5,176.4 371.6,174.4 371.2,173.7 371.8,170.4 372.7,167.8 371.8,166.6 372.6,163.6 370.3,164.3 368.0,165.0 365.6,165.4 363.2,165.8 360.8,166.2 358.4,166.6 356.0,167.0 355.3,169.3 354.7,171.7 354.0,174.0 352.5,175.8 351.1,177.5 352.4,179.1 354.8,180.5 354.6,182.8 354.9,184.1 357.3,185.1 359.5,184.4 360.4,185.1 362.8,184.2 366.3,182.8 367.3,182.1"/>
<polygon points="391.4,183.5 391.7,181.9 390.8,180.2 389.9,176.6 387.2,175.2 386.9,174.7 386.4,171.9 383.7,168.9 382.7,167.0 382.7,165.0 380.5,163.9 378.2,163.6 377.5,162.2 375.8,162.7 374.2,163.1 372.6,163.6 371.8,166.6 372.7,167.8 371.8,170.4 371.2,173.7 371.6,174.4 369.5,176.4 370.5,179.9 368.2,181.3 369.7,182.7 372.9,185.0 374.3,185.8 375.9,184.8 378.5,186.0 380.2,185.6 381.8,185.1 385.0,184.7 388.3,183.2 389.1,183.6"/>
<polygon points="357.3,185.1 354.9,184.1 354.6,182.8 354.8,180.5 352.4,179.1 351.1,177.5 350.0,178.8 349.0,180.0 347.7,181.7 346.3,183.3 345.0,185.0 343.7,186.7 342.3,188.3 341.0,190.0 339.9,189.3 340.8,190.9 342.1,192.4 343.5,190.9 345.5,191.6 348.7,191.5 351.4,189.2 351.3,188.5 353.2,188.9 357.4,188.4"/>
<polygon points="357.4,188.4 353.2,188.9 351.3,188.5 351.4,189.2 348.7,191.5 345.5,191.6 343.5,190.9 342.1,192.4 343.0,193.7 341.8,196.2 341.9,197.4 344.9,199.3 347.2,200.0 347.0,201.3 348.6,204.8 350.5,202.6 351.0,201.7 352.9,198.6 354.5,195.9 354.3,194.3 357.0,191.1 357.3,189.4"/>
<polygon points="364.3,199.9 367.0,200.5 368.2,200.2 369.1,198.6 372.3,198.6 374.9,198.8 375.2,198.2 374.4,194.7 374.3,191.8 373.3,190.2 373.4,188.1 374.3,185.8 372.9,185.0 369.7,182.7 368.2,181.3 367.3,182.1 366.3,182.8 362.8,184.2 360.4,185.1 359.5,184.4 357.3,185.1 357.4,188.4 357.3,189.4 358.5,192.2 360.1,193.9 361.4,196.3 362.2,199.1"/>
<polygon points="374.3,185.8 373.4,188.1 373.3,190.2 374.3,191.8 374.4,194.7 375.2,198.2 374.9,198.8 375.3,199.0 377.5,200.6 380.1,202.8 380.8,203.9 382.3,205.9 382.5,203.6 382.8,201.3 383.0,199.0 385.0,198.0 387.0,197.0 389.0,196.0 389.4,194.0 389.8,192.0 390.2,190.0 390.6,188.0 391.0,186.0 391.2,184.7 391.4,183.5 389.1,183.6 388.3,183.2 385.0,184.7 381.8,185.1 380.2,185.6 378.5,186.0 375.9,184.8"/>
<polygon points="348.6,204.8 349.4,207.5 350.8,208.0 351.6,208.5 353.3,210.8 355.5,210.7 356.1,211.4 358.6,209.8 358.7,207.7 360.0,207.1 361.2,204.7 362.3,201.2 364.3,199.9 362.2,199.1 361.4,196.3 360.1,193.9 358.5,192.2 357.3,189.4 357.0,191.1 354.3,194.3 354.5,195.9 352.9,198.6 351.0,201.7 350.5,202.6"/>
<polygon points="332.3,201.7 332.3,203.6 333.2,204.5 336.1,206.8 337.5,208.6 340.3,209.5 342.7,211.9 343.3,210.6 344.1,208.8 347.4,208.5 350.8,208.0 349.4,207.5 348.6,204.8 347.0,201.3 347.2,200.0 344.9,199.3 341.9,197.4 341.8,196.2 340.0,196.9 338.6,196.7 335.8,198.4 332.9,200.9"/>
<polygon points="377.4,217.6 379.7,215.3 380.8,214.8 382.0,212.7 382.0,210.9 382.0,209.0 382.2,207.5 382.3,205.9 380.8,203.9 380.1,202.8 377.5,200.6 375.3,199.0 374.9,198.8 372.3,198.6 369.1,198.6 368.2,200.2 367.0,200.5 364.3,199.9 362.3,201.2 361.2,204.7 360.0,207.1 358.7,207.7 358.6,209.8 356.1,211.4 357.2,213.0 358.2,214.3 361.3,213.9 362.6,215.6 365.7,216.7 367.9,217.8 368.8,219.5 371.7,218.7 374.7,219.2 374.7,219.8"/>
<polygon points="358.2,214.3 357.2,213.0 356.1,211.4 355.5,210.7 353.3,210.8 351.6,208.5 350.8,208.0 347.4,208.5 344.1,208.8 343.3,210.6 342.7,211.9 340.3,213.2 341.2,216.3 339.2,218.4 339.5,219.7 342.0,220.1 343.2,223.9 343.5,227.3 345.1,227.6 346.7,228.2 348.9,228.1 349.8,225.1 351.4,223.7 351.8,221.3 354.5,218.5 354.9,218.2 356.8,216.5"/>
<polygon points="377.4,217.6 379.9,221.0 379.2,223.5 379.0,224.3 380.7,226.9 381.4,229.3 382.7,232.3 383.3,233.4 383.2,235.6 385.6,238.4 387.1,239.7 388.2,237.3 391.1,236.2 394.1,236.7 395.3,234.6 396.8,232.4 399.7,233.3 402.2,232.9 402.5,229.5 403.6,227.1 403.6,226.2 404.1,223.6 403.3,222.3 402.5,221.0 401.5,218.8 400.6,216.6 399.6,214.4 397.2,214.6 394.8,214.9 392.4,215.1 390.0,215.3 388.0,215.2 386.0,215.2 384.0,215.1 382.0,215.0 382.0,212.7 380.8,214.8 379.7,215.3"/>
<polygon points="364.7,242.3 366.0,243.6 369.4,242.5 371.2,242.6 372.7,243.2 376.6,243.6 378.5,242.8 378.6,241.5 379.8,240.2 383.1,239.4 385.6,238.4 383.2,235.6 383.3,233.4 382.7,232.3 381.4,229.3 380.7,226.9 379.0,224.3 379.2,223.5 379.9,221.0 377.4,217.6 374.7,219.8 374.7,219.2 371.7,218.7 368.8,219.5 366.9,222.1 367.0,224.2 365.2,225.2 364.7,228.4 363.4,230.4 362.8,231.4 361.5,234.2 360.7,235.5 362.1,238.0 362.1,240.9 363.6,241.9"/>
<polygon points="402.2,232.9 403.4,233.5 403.8,235.3 405.9,236.4 408.0,236.7 408.9,238.8 410.6,239.8 413.7,238.5 414.0,240.4 415.8,239.7 418.7,236.3 420.4,234.7 423.0,234.6 425.1,232.8 425.3,230.9 427.4,230.4 430.2,229.2 427.8,225.1 428.5,224.2 428.9,222.0 428.5,219.7 427.8,217.4 425.8,218.4 423.8,219.3 421.9,220.2 419.9,221.1 417.9,222.1 415.9,223.0 414.2,224.1 412.4,225.3 410.7,226.4 408.9,227.6 407.2,228.7 406.2,227.0 405.1,225.3 404.1,223.6 403.6,226.2 403.6,227.1 402.5,229.5"/>
<polygon points="360.7,235.5 361.5,234.2 362.8,231.4 363.4,230.4 364.7,228.4 365.2,225.2 367.0,224.2 366.9,222.1 368.8,219.5 367.9,217.8 365.7,216.7 362.6,215.6 361.3,213.9 358.2,214.3 356.8,216.5 354.9,218.2 354.5,218.5 351.8,221.3 351.4,223.7 349.8,225.1 348.9,228.1 349.9,229.2 352.1,230.4 354.5,232.7 355.0,233.0 357.1,234.4 359.7,235.6"/>
<polygon points="308.1,261.6 310.7,263.8 314.0,263.5 314.8,264.8 316.8,265.8 319.3,266.6 320.4,268.1 323.2,267.7 325.6,269.7 326.3,266.7 326.4,264.9 328.2,264.5 328.2,261.9 328.9,258.9 326.9,256.9 324.7,256.0 324.0,255.7 321.5,253.8 318.8,253.5 318.1,252.5 317.7,252.4 315.4,254.4 313.0,256.8 311.7,257.8 308.8,260.0"/>
<polygon points="329.2,242.9 329.6,244.8 329.7,248.6 329.5,250.4 330.5,252.2 330.2,255.2 330.3,257.4 329.9,259.0 330.8,258.0 333.5,259.0 335.2,259.2 336.0,256.4 338.3,254.8 338.2,252.9 339.7,249.3 341.5,247.6 341.3,246.2 343.0,243.6 342.4,241.5 340.3,241.2 338.3,240.7 337.1,240.1 335.4,242.1 332.3,244.0"/>
<polygon points="285.5,283.3 286.4,283.5 287.5,282.3 289.5,282.0 290.6,280.9 290.8,278.2 290.4,276.3 290.7,274.5 290.5,271.6 290.5,269.7 290.0,267.6 286.8,266.8 285.9,265.1 286.1,261.2 281.9,262.9 279.7,263.9 278.0,262.2 276.4,263.1 273.5,263.8 272.2,263.8 269.6,264.4 270.8,265.2 272.0,266.0 274.3,266.3 276.7,266.7 279.0,267.0 278.8,269.2 278.6,271.4 278.4,273.6 278.2,275.8 278.0,278.0 276.8,279.8 279.0,279.7 280.9,282.2 284.3,282.5"/>
<polygon points="290.5,271.6 293.5,270.6 296.6,271.7 298.1,269.9 298.9,267.5 302.4,267.9 305.9,267.8 304.9,265.6 305.9,262.9 307.2,261.9 304.6,261.4 302.3,259.3 301.7,258.1 300.2,256.9 298.1,253.9 297.0,251.9 295.2,252.9 293.1,254.6 290.4,254.7 290.0,257.1 288.2,259.8 287.0,260.0 286.1,261.2 285.9,265.1 286.8,266.8 290.0,267.6 290.5,269.7"/>
<polygon points="305.9,267.8 304.5,268.0 304.5,271.1 306.0,274.3 306.6,277.1 308.2,277.4 308.8,278.0 311.5,279.1 314.3,279.2 315.3,279.9 318.1,279.9 320.8,279.2 322.2,278.2 323.6,278.4 324.8,277.1 325.6,274.9 325.4,272.8 324.8,271.3 325.6,269.7 323.2,267.7 320.4,268.1 319.3,266.6 316.8,265.8 314.8,264.8 314.0,263.5 310.7,263.8 308.1,261.6 307.2,261.9 305.9,262.9 304.9,265.6"/>
<polygon points="308.2,277.4 308.2,277.4 306.6,277.1 306.0,274.3 304.5,271.1 304.5,268.0 305.9,267.8 302.4,267.9 298.9,267.5 298.1,269.9 296.6,271.7 293.5,270.6 290.5,271.6 290.7,274.5 290.4,276.3 290.8,278.2 290.6,280.9 293.6,281.3 294.4,279.9 297.7,279.1 299.3,280.4 301.9,279.3 304.9,278.7"/>
<polygon points="344.8,284.6 345.4,282.9 345.9,281.5 348.2,280.2 349.4,278.1 346.4,276.2 344.6,273.3 344.7,272.2 342.5,273.3 338.3,272.8 337.4,274.1 335.4,275.2 333.1,273.8 330.9,274.3 329.4,274.7 325.6,274.9 324.8,277.1 327.7,278.0 327.9,280.4 328.2,282.1 331.3,283.8 333.0,286.8 332.7,288.7 335.5,287.1 338.7,286.5 339.6,285.8 340.6,284.6"/>
<polygon points="345.4,264.4 343.1,262.8 342.2,262.5 339.0,261.3 337.1,259.1 335.2,259.2 333.5,259.0 330.8,258.0 329.9,259.0 328.9,258.9 328.2,261.9 328.2,264.5 326.4,264.9 326.3,266.7 325.6,269.7 324.8,271.3 325.4,272.8 325.6,274.9 329.4,274.7 330.9,274.3 333.1,273.8 335.4,275.2 337.4,274.1 338.3,272.8 342.5,273.3 344.7,272.2 344.9,271.3 345.5,268.5 345.2,266.1"/>
<polygon points="284.5,301.1 283.5,298.2 284.9,295.7 283.6,294.1 283.7,291.3 284.6,288.9 283.5,286.8 285.5,283.3 284.3,282.5 280.9,282.2 279.0,279.7 276.8,279.8 276.0,281.0 275.0,283.0 274.0,285.0 273.0,287.0 272.0,289.0 271.0,291.0 270.3,293.0 269.6,294.9 268.8,296.9 268.1,298.9 270.1,299.3 272.0,298.5 274.3,298.7 277.4,299.9 279.3,299.6 281.3,300.8"/>
<polygon points="285.5,283.3 283.5,286.8 284.6,288.9 283.7,291.3 283.6,294.1 284.9,295.7 283.5,298.2 284.5,301.1 284.8,302.1 285.8,304.4 289.2,303.6 291.1,300.5 292.0,299.8 294.7,300.0 297.8,298.0 299.2,296.9 300.8,297.0 303.6,295.4 302.3,294.6 300.3,291.7 297.2,289.9 296.8,288.6 295.8,286.1 292.5,285.6 291.0,284.2 289.5,282.0 287.5,282.3 286.4,283.5"/>
<polygon points="308.2,277.4 304.9,278.7 301.9,279.3 299.3,280.4 297.7,279.1 294.4,279.9 293.6,281.3 290.6,280.9 289.5,282.0 291.0,284.2 292.5,285.6 295.8,286.1 296.8,288.6 297.2,289.9 300.3,291.7 302.3,294.6 303.6,295.4 304.3,295.5 304.9,294.5 303.9,291.5 305.5,289.8 304.3,287.1 305.9,284.3 306.2,283.5 306.4,280.8"/>
<polygon points="320.8,279.2 318.1,279.9 315.3,279.9 314.3,279.2 311.5,279.1 308.8,278.0 308.2,277.4 308.2,277.4 306.4,280.8 306.2,283.5 305.9,284.3 304.3,287.1 305.5,289.8 303.9,291.5 304.9,294.5 307.3,294.2 308.7,292.9 310.7,292.3 315.1,292.4 316.2,290.4 317.1,290.1 319.0,288.5 318.7,285.3 319.8,283.3 320.7,282.4"/>
<polygon points="326.0,300.2 323.0,299.8 321.4,296.5 322.0,293.5 319.7,292.2 317.1,290.1 316.2,290.4 315.1,292.4 310.7,292.3 308.7,292.9 307.3,294.2 304.9,294.5 304.3,295.5 305.6,297.5 306.3,299.0 307.5,300.2 308.6,302.2 309.3,305.1 310.4,305.7 313.2,304.6 316.0,306.3 318.4,304.2 319.4,304.0 320.7,304.7 323.5,302.7 324.9,301.0"/>
<polygon points="332.7,288.7 333.0,286.8 331.3,283.8 328.2,282.1 327.9,280.4 327.7,278.0 324.8,277.1 323.6,278.4 322.2,278.2 320.8,279.2 320.7,282.4 319.8,283.3 318.7,285.3 319.0,288.5 317.1,290.1 319.7,292.2 322.0,293.5 321.4,296.5 323.0,299.8 326.0,300.2 327.4,299.7 327.6,300.6 329.8,298.7 332.4,296.3 333.7,296.2 333.4,294.0 333.5,291.3 332.6,290.0"/>
<polygon points="303.6,295.4 300.8,297.0 299.2,296.9 297.8,298.0 294.7,300.0 292.0,299.8 291.1,300.5 289.2,303.6 285.8,304.4 287.7,305.6 287.5,309.0 287.0,310.9 287.4,311.9 288.0,315.7 290.0,315.0 292.4,314.8 294.8,314.6 297.2,314.4 299.6,314.2 302.0,314.0 302.2,315.1 302.8,312.9 304.7,311.6 305.6,309.8 307.8,307.4 309.4,306.6 309.3,305.1 308.6,302.2 307.5,300.2 306.3,299.0 305.6,297.5 304.3,295.5"/>
<polygon points="285.8,304.4 284.8,302.1 284.5,301.1 281.3,300.8 279.3,299.6 277.4,299.9 274.3,298.7 272.0,298.5 270.1,299.3 268.1,298.9 267.6,300.4 267.0,302.0 265.0,302.5 263.0,303.0 264.5,304.5 266.0,306.0 267.5,307.5 269.0,309.0 270.2,311.0 271.5,313.0 272.8,315.0 274.0,317.0 276.2,316.8 278.3,316.7 280.5,316.5 282.7,316.3 284.8,316.2 287.0,316.0 288.0,315.7 287.4,311.9 287.0,310.9 287.5,309.0 287.7,305.6"/>
<polygon points="316.0,306.3 313.2,304.6 310.4,305.7 309.3,305.1 309.4,306.6 307.8,307.4 305.6,309.8 304.7,311.6 302.8,312.9 302.2,315.1 302.4,317.1 302.7,319.0 303.0,321.0 303.7,322.7 304.3,324.3 305.0,326.0 307.3,325.3 309.7,324.7 312.0,324.0 314.1,323.1 316.2,322.2 318.3,321.3 318.1,319.3 317.6,317.9 317.7,314.1 316.1,311.4 316.3,310.5 316.2,308.8"/>
<polygon points="323.5,302.7 320.7,304.7 319.4,304.0 318.4,304.2 316.0,306.3 316.2,308.8 316.3,310.5 316.1,311.4 317.7,314.1 317.6,317.9 318.1,319.3 318.3,321.3 319.0,321.0 320.0,322.7 321.0,324.3 322.0,326.0 323.0,324.2 324.0,322.5 325.0,320.8 326.0,319.0 327.6,318.5 329.2,318.0 327.7,315.8 328.0,313.6 327.3,311.9 324.6,308.7 324.6,307.2 324.7,304.9"/>
<polygon points="326.0,300.2 324.9,301.0 323.5,302.7 324.7,304.9 324.6,307.2 324.6,308.7 327.3,311.9 328.0,313.6 327.7,315.8 329.2,318.0 331.5,317.4 333.7,316.7 336.0,316.0 337.4,314.2 338.9,312.4 337.8,311.4 337.5,307.5 335.2,305.5 333.2,305.4 333.1,303.6 331.9,300.4 329.8,298.7 327.6,300.6 327.4,299.7"/>
<polygon points="329.8,298.7 331.9,300.4 333.1,303.6 333.2,305.4 335.2,305.5 337.5,307.5 337.8,311.4 338.9,312.4 340.0,311.0 341.7,309.7 343.3,308.3 345.0,307.0 347.0,306.5 349.0,306.0 351.0,305.5 353.0,305.0 354.5,306.5 356.0,308.0 356.3,306.2 356.6,304.4 356.4,303.9 354.7,301.7 353.0,301.2 349.2,299.0 347.6,298.9 345.4,297.1 342.5,296.2 341.7,297.9 339.3,296.4 336.8,297.5 335.5,297.1 333.7,296.2 332.4,296.3"/>
<polygon points="345.4,297.1 345.4,294.4 344.5,293.5 345.1,290.3 345.4,288.7 344.1,287.3 344.8,284.6 340.6,284.6 339.6,285.8 338.7,286.5 335.5,287.1 332.7,288.7 332.6,290.0 333.5,291.3 333.4,294.0 333.7,296.2 335.5,297.1 336.8,297.5 339.3,296.4 341.7,297.9 342.5,296.2"/>
<polygon points="345.1,227.6 342.9,229.2 341.4,232.1 341.1,233.6 339.2,233.3 339.5,236.1 339.2,238.9 338.3,240.7 340.3,241.2 342.4,241.5 343.0,243.6 344.6,244.9 347.8,245.5 349.4,245.7 350.8,245.3 353.1,243.8 356.4,243.4 358.6,242.4 359.2,241.4 362.1,240.9 362.1,238.0 360.7,235.5 359.7,235.6 357.1,234.4 355.0,233.0 354.5,232.7 352.1,230.4 349.9,229.2 348.9,228.1 346.7,228.2"/>
<polygon points="347.8,245.5 347.6,248.7 348.2,252.1 347.7,252.8 348.6,254.6 351.0,256.6 350.5,260.1 351.3,260.4 354.7,260.0 357.4,259.9 358.1,260.3 361.3,259.1 360.0,258.1 361.8,256.0 361.3,252.3 362.2,250.9 362.8,249.5 363.1,246.3 364.2,244.5 364.7,242.3 363.6,241.9 362.1,240.9 359.2,241.4 358.6,242.4 356.4,243.4 353.1,243.8 350.8,245.3 349.4,245.7"/>
<polygon points="361.3,259.1 362.9,262.0 362.7,264.4 363.8,265.5 366.7,267.6 368.8,267.4 369.2,266.6 372.1,266.2 374.7,265.2 376.2,264.6 376.4,261.6 378.2,259.2 377.9,257.8 377.7,256.1 376.9,252.6 375.2,251.2 376.8,248.5 376.7,244.6 376.6,243.6 372.7,243.2 371.2,242.6 369.4,242.5 366.0,243.6 364.7,242.3 364.2,244.5 363.1,246.3 362.8,249.5 362.2,250.9 361.3,252.3 361.8,256.0 360.0,258.1"/>
<polygon points="387.1,239.7 385.6,238.4 383.1,239.4 379.8,240.2 378.6,241.5 378.5,242.8 376.6,243.6 376.7,244.6 376.8,248.5 375.2,251.2 376.9,252.6 377.7,256.1 377.9,257.8 378.2,259.2 380.1,260.0 383.6,260.8 384.8,259.9 386.5,260.0 390.3,259.0 391.8,259.6 394.6,259.7 397.5,259.5 397.9,257.5 395.3,254.8 395.3,253.9 394.4,251.8 391.9,249.3 391.3,247.6 390.8,244.8 388.8,242.0 387.7,241.5"/>
<polygon points="402.2,232.9 399.7,233.3 396.8,232.4 395.3,234.6 394.1,236.7 391.1,236.2 388.2,237.3 387.1,239.7 387.7,241.5 388.8,242.0 390.8,244.8 391.3,247.6 391.9,249.3 394.4,251.8 395.3,253.9 395.3,254.8 397.9,257.5 398.6,257.8 400.3,256.0 402.1,254.6 402.8,252.1 405.8,251.1 406.3,250.1 406.1,247.0 407.6,244.5 406.9,242.6 408.9,238.8 408.0,236.7 405.9,236.4 403.8,235.3 403.4,233.5"/>
<polygon points="422.0,250.0 420.7,249.8 419.1,247.9 418.6,244.2 417.8,242.1 415.6,241.7 414.0,240.4 413.7,238.5 410.6,239.8 408.9,238.8 406.9,242.6 407.6,244.5 406.1,247.0 406.3,250.1 405.8,251.1 408.7,252.0 410.4,252.2 413.5,253.8 415.8,253.6 416.8,254.5 420.4,255.0 420.9,251.7"/>
<polygon points="420.3,261.4 421.0,258.4 420.4,256.1 420.4,255.0 416.8,254.5 415.8,253.6 413.5,253.8 410.4,252.2 408.7,252.0 405.8,251.1 402.8,252.1 402.1,254.6 400.3,256.0 398.6,257.8 399.9,258.8 402.8,259.6 405.9,261.2 407.0,261.3 409.9,263.8 411.5,264.8 412.2,265.5 415.9,264.7 417.7,263.4 418.2,262.2"/>
<polygon points="432.1,265.6 434.1,264.5 433.8,262.4 435.7,258.8 435.4,257.4 435.8,256.4 436.9,252.3 433.9,249.8 431.2,249.0 430.5,248.3 429.4,246.4 426.0,247.4 425.3,249.5 424.9,249.9 422.0,250.0 420.9,251.7 420.4,255.0 420.4,256.1 421.0,258.4 420.3,261.4 422.6,262.6 424.5,263.9 425.9,266.5 429.5,267.1 431.0,265.7"/>
<polygon points="420.3,261.4 418.2,262.2 417.7,263.4 415.9,264.7 412.2,265.5 412.0,267.6 412.7,269.3 411.4,272.7 411.6,274.4 413.4,275.6 415.2,276.8 417.0,278.0 419.0,279.0 421.0,280.0 423.0,281.0 424.2,282.5 424.6,280.7 427.1,277.4 426.0,274.7 428.4,273.3 427.7,270.2 429.5,268.6 429.5,267.1 425.9,266.5 424.5,263.9 422.6,262.6"/>
<polygon points="394.6,259.7 391.8,259.6 390.3,259.0 386.5,260.0 384.8,259.9 383.6,260.8 380.1,260.0 378.2,259.2 376.4,261.6 376.2,264.6 374.7,265.2 372.1,266.2 374.8,269.0 375.4,270.7 376.6,273.3 378.7,274.7 379.9,274.7 381.3,277.1 382.4,279.6 382.8,279.5 384.6,277.1 384.8,275.8 387.2,273.0 387.6,271.5 388.1,270.5 389.9,267.6 390.5,266.0 392.5,264.4 392.5,261.2"/>
<polygon points="398.6,257.8 397.9,257.5 397.5,259.5 397.8,261.1 398.0,263.4 398.8,265.0 398.3,267.8 399.8,269.1 400.3,271.6 402.2,271.3 404.0,271.0 405.8,271.8 407.5,272.5 409.2,273.2 411.0,274.0 411.6,274.4 411.4,272.7 412.7,269.3 412.0,267.6 412.2,265.5 411.5,264.8 409.9,263.8 407.0,261.3 405.9,261.2 402.8,259.6 399.9,258.8"/>
<polygon points="356.5,278.9 357.0,279.8 358.7,279.0 359.5,275.8 360.2,273.3 363.1,272.0 363.8,269.5 365.2,268.1 366.7,267.6 363.8,265.5 362.7,264.4 362.9,262.0 361.3,259.1 358.1,260.3 357.4,259.9 354.7,260.0 351.3,260.4 350.5,260.1 349.3,260.0 348.4,261.7 345.4,264.4 345.2,266.1 345.5,268.5 344.9,271.3 344.7,272.2 344.6,273.3 346.4,276.2 349.4,278.1 350.3,277.3 351.7,279.3 355.1,278.7"/>
<polygon points="343.0,243.6 341.3,246.2 341.5,247.6 339.7,249.3 338.2,252.9 338.3,254.8 336.0,256.4 335.2,259.2 337.1,259.1 339.0,261.3 342.2,262.5 343.1,262.8 345.4,264.4 348.4,261.7 349.3,260.0 350.5,260.1 351.0,256.6 348.6,254.6 347.7,252.8 348.2,252.1 347.6,248.7 347.8,245.5 344.6,244.9"/>
<polygon points="372.1,266.2 369.2,266.6 368.8,267.4 366.7,267.6 365.2,268.1 363.8,269.5 363.1,272.0 360.2,273.3 359.5,275.8 358.7,279.0 357.0,279.8 360.1,279.7 362.5,281.0 363.9,282.9 367.2,283.2 368.5,284.9 370.3,284.8 373.1,286.9 374.8,288.2 375.9,287.1 377.0,286.0 378.3,284.0 379.7,282.0 381.0,280.0 382.4,279.6 381.3,277.1 379.9,274.7 378.7,274.7 376.6,273.3 375.4,270.7 374.8,269.0"/>
<polygon points="397.5,259.5 394.6,259.7 392.5,261.2 392.5,264.4 390.5,266.0 389.9,267.6 388.1,270.5 387.6,271.5 387.2,273.0 384.8,275.8 384.6,277.1 382.8,279.5 384.9,279.0 386.9,278.5 389.0,278.0 391.0,277.0 393.0,276.0 395.0,275.0 396.5,273.5 398.0,272.0 400.3,271.6 399.8,269.1 398.3,267.8 398.8,265.0 398.0,263.4 397.8,261.1"/>
<polygon points="356.4,303.9 355.9,301.2 355.8,299.5 356.6,296.3 356.5,293.1 357.0,292.7 356.1,290.2 357.0,286.8 355.2,285.8 355.7,283.0 356.5,278.9 355.1,278.7 351.7,279.3 350.3,277.3 349.4,278.1 348.2,280.2 345.9,281.5 345.4,282.9 344.8,284.6 344.1,287.3 345.4,288.7 345.1,290.3 344.5,293.5 345.4,294.4 345.4,297.1 347.6,298.9 349.2,299.0 353.0,301.2 354.7,301.7"/>
<polygon points="357.0,279.8 356.5,278.9 355.7,283.0 355.2,285.8 357.0,286.8 356.1,290.2 357.0,292.7 356.5,293.1 356.6,296.3 355.8,299.5 355.9,301.2 356.4,303.9 356.6,304.4 357.0,302.0 358.5,300.0 360.0,298.0 361.8,297.2 363.5,296.5 365.2,295.8 367.0,295.0 369.0,293.5 371.0,292.0 372.3,290.7 373.6,289.4 374.8,288.2 373.1,286.9 370.3,284.8 368.5,284.9 367.2,283.2 363.9,282.9 362.5,281.0 360.1,279.7"/>
<polygon points="447.0,298.0 448.5,294.8 448.9,293.4 450.3,289.9 450.7,287.2 452.1,285.6 451.1,283.8 449.5,280.4 448.6,277.9 447.5,277.9 447.1,277.5 446.0,277.1 442.4,278.5 439.5,281.3 439.1,280.9 437.0,280.9 433.3,283.7 431.5,284.6 430.3,284.4 427.6,286.6 428.5,287.5 430.3,288.7 432.5,289.9 435.2,290.0 436.8,292.5 440.4,292.8 442.1,294.0 443.7,294.8 446.5,295.7"/>
<polygon points="452.1,285.6 450.7,287.2 450.3,289.9 448.9,293.4 448.5,294.8 447.0,298.0 446.8,299.4 449.1,300.8 449.4,301.5 451.6,302.5 453.9,302.7 456.2,302.0 458.7,300.9 460.0,299.3 464.6,301.0 466.4,300.5 467.9,298.7 470.1,298.4 470.0,297.0 469.3,294.1 469.7,291.4 469.9,288.5 467.3,288.4 467.0,285.1 465.7,285.2 463.1,285.4 459.7,284.8 458.6,284.2 456.8,285.1 454.7,285.4"/>
<polygon points="428.6,307.8 429.3,305.7 429.1,305.1 430.1,302.4 428.4,299.4 427.4,298.3 428.3,294.9 427.9,293.0 425.6,293.7 423.3,294.3 421.0,295.0 419.0,296.3 417.0,297.7 415.0,299.0 413.7,300.6 412.4,302.1 411.1,303.7 413.5,304.5 415.2,305.7 417.3,306.0 421.0,306.3 422.3,307.1 424.4,306.9 427.2,307.9"/>
<polygon points="429.1,321.9 428.5,320.1 430.1,317.2 429.4,314.3 430.4,313.3 430.2,309.9 428.6,307.8 427.2,307.9 424.4,306.9 422.3,307.1 421.0,306.3 417.3,306.0 415.2,305.7 413.5,304.5 411.1,303.7 410.0,305.0 410.3,307.0 410.7,309.0 411.0,311.0 412.5,312.0 414.0,313.0 413.7,315.3 413.3,317.7 413.0,320.0 411.9,321.1 410.9,322.1 413.5,321.8 415.1,321.8 417.4,322.8 421.9,322.6 423.2,322.6 425.5,321.5"/>
<polygon points="473.8,300.4 472.4,298.8 470.1,298.4 467.9,298.7 466.4,300.5 464.6,301.0 460.0,299.3 458.7,300.9 456.2,302.0 453.9,302.7 451.6,302.5 449.4,301.5 448.6,304.8 450.4,307.0 449.6,309.4 450.0,310.5 452.3,311.6 452.7,315.2 454.9,315.2 457.5,313.6 460.4,314.8 461.6,314.3 463.4,315.1 466.6,315.7 467.5,314.9 469.4,312.1 470.2,311.5 472.3,310.0 474.6,307.2 475.0,305.9 474.8,304.7"/>
<polygon points="450.4,322.7 452.6,324.7 454.6,325.3 454.7,327.9 456.7,330.4 459.6,331.6 461.3,332.9 463.1,332.1 466.1,332.9 467.6,333.2 470.4,333.8 472.2,334.7 473.5,333.8 473.8,331.8 473.0,328.6 470.6,325.8 471.2,325.1 470.4,322.0 469.8,319.5 468.9,317.0 467.5,314.9 466.6,315.7 463.4,315.1 461.6,314.3 460.4,314.8 457.5,313.6 454.9,315.2 452.7,315.2 452.3,316.4 452.2,318.1 451.1,320.5"/>
<polygon points="489.1,312.2 486.0,311.3 483.6,309.9 482.0,308.6 478.4,308.9 477.0,306.5 475.0,305.9 474.6,307.2 472.3,310.0 470.2,311.5 469.4,312.1 467.5,314.9 468.9,317.0 469.8,319.5 470.4,322.0 471.2,325.1 470.6,325.8 473.0,328.6 473.8,331.8 473.5,333.8 474.8,332.9 476.0,332.0 478.2,331.7 480.3,331.4 482.5,331.1 483.2,328.7 483.8,326.1 484.6,324.0 485.6,320.6 486.0,318.3 487.5,317.2 487.5,314.0"/>
<polygon points="409.6,339.4 412.2,340.0 414.1,338.8 415.8,339.0 418.8,338.9 421.6,339.0 423.8,340.1 426.1,339.8 429.1,339.5 430.2,339.3 431.9,338.6 432.5,336.9 432.8,334.8 431.9,332.3 434.0,330.8 432.6,329.2 430.1,325.9 429.8,323.9 429.1,321.9 425.5,321.5 423.2,322.6 421.9,322.6 417.4,322.8 415.1,321.8 413.5,321.8 410.9,322.1 409.9,323.1 409.0,324.0 407.7,325.3 406.4,326.6 406.9,328.2 406.9,331.9 408.6,333.2 409.7,335.0 408.5,336.8"/>
<polygon points="459.6,331.6 456.7,330.4 454.7,327.9 454.6,325.3 452.6,324.7 450.4,322.7 450.3,322.6 446.6,324.5 443.0,326.1 442.6,326.3 441.0,326.9 437.0,327.6 434.8,329.1 434.0,330.8 431.9,332.3 432.8,334.8 432.5,336.9 431.9,338.6 434.6,340.5 435.2,343.2 433.9,345.7 434.1,345.7 436.9,344.4 440.7,343.8 442.1,343.6 444.4,342.8 446.6,344.0 448.6,343.8 450.5,340.7 451.2,339.5 452.5,338.8 455.1,335.7 456.4,334.0"/>
<polygon points="436.5,347.5 435.0,346.2 434.1,345.7 433.9,345.7 433.2,345.4 431.7,345.9 428.4,348.8 426.9,349.9 425.5,350.3 423.2,352.7 421.7,354.6 418.8,355.1 415.9,356.4 415.1,357.8 413.1,359.1 414.6,360.3 416.0,361.5 417.5,362.8 419.0,364.0 420.3,365.3 421.7,366.7 423.0,368.0 424.8,368.8 426.5,369.5 428.2,370.2 430.0,371.0 430.6,370.4 431.5,367.2 431.9,365.4 433.3,362.8 433.5,360.1 434.5,358.6 434.7,354.9 435.6,352.5 435.6,350.8"/>
<polygon points="433.9,345.7 435.2,343.2 434.6,340.5 431.9,338.6 430.2,339.3 429.1,339.5 426.1,339.8 423.8,340.1 421.6,339.0 418.8,338.9 415.8,339.0 414.1,338.8 412.2,340.0 409.6,339.4 409.4,340.4 411.2,340.7 413.0,341.0 413.5,343.0 414.0,345.0 414.5,347.0 415.0,349.0 416.0,351.0 417.0,353.0 415.7,355.0 414.3,357.0 413.0,359.0 413.1,359.1 415.1,357.8 415.9,356.4 418.8,355.1 421.7,354.6 423.2,352.7 425.5,350.3 426.9,349.9 428.4,348.8 431.7,345.9 433.2,345.4"/>
<polygon points="496.9,295.6 495.6,295.7 492.0,293.9 489.8,293.5 488.0,291.5 484.7,290.3 483.6,293.3 483.1,294.7 480.9,294.8 479.6,297.0 477.8,299.5 474.7,299.8 473.8,300.4 474.8,304.7 475.0,305.9 477.0,306.5 478.4,308.9 482.0,308.6 483.6,309.9 486.0,311.3 489.1,312.2 489.9,312.4 490.3,309.6 492.4,307.7 491.7,306.7 494.1,303.4 494.2,301.1 495.0,299.2"/>
<polygon points="491.7,188.6 490.3,188.2 488.4,186.8 487.3,183.9 486.5,182.0 485.0,180.7 484.1,178.6 482.5,179.5 480.8,180.4 479.2,181.3 477.5,182.2 476.8,184.4 476.1,186.6 475.3,188.7 474.6,190.9 475.8,192.8 477.0,194.7 478.2,196.6 479.4,198.5 481.2,199.5 482.3,197.6 484.1,195.9 487.3,194.5 488.2,194.2 490.4,191.6"/>
<polygon points="504.2,205.4 502.9,203.0 503.5,201.7 503.9,198.8 502.9,196.0 504.8,195.1 504.0,192.2 502.5,191.2 499.8,191.9 497.7,190.7 495.9,190.3 492.9,189.8 491.7,188.6 490.4,191.6 488.2,194.2 487.3,194.5 484.1,195.9 482.3,197.6 481.2,199.5 481.3,199.5 482.2,201.2 484.1,202.5 485.4,203.7 487.0,204.4 489.9,206.9 490.8,207.9 492.0,208.9 494.6,211.3 495.6,211.4 497.7,208.6 498.8,207.3 500.8,207.3"/>
<polygon points="491.7,188.6 492.9,189.8 495.9,190.3 497.7,190.7 499.8,191.9 502.5,191.2 504.0,192.2 505.8,190.2 507.1,189.0 507.1,189.0 505.2,189.4 503.3,189.9 501.4,189.0 500.2,187.6 499.0,186.1 497.8,184.6 496.6,183.2 497.6,181.8 498.5,180.3 498.1,178.4 497.6,176.5 495.6,176.0 493.7,175.5 492.8,176.5 491.8,177.5 489.9,177.0 488.0,176.5 486.1,177.6 484.1,178.6 485.0,180.7 486.5,182.0 487.3,183.9 488.4,186.8 490.3,188.2"/>
<polygon points="504.0,192.2 504.8,195.1 502.9,196.0 503.9,198.8 503.5,201.7 502.9,203.0 504.2,205.4 505.4,205.7 506.1,208.1 508.7,208.6 510.2,209.7 511.9,210.8 515.2,210.9 516.5,213.3 517.6,210.4 519.2,208.9 520.2,206.0 523.5,203.5 524.7,203.2 525.2,202.6 525.1,198.2 523.1,196.7 523.6,195.2 523.5,192.8 523.4,192.8 521.5,191.2 519.6,189.6 517.7,188.0 515.6,188.2 513.5,188.4 511.4,188.6 509.2,188.8 507.1,189.0 505.8,190.2"/>
<polygon points="474.7,223.7 476.9,221.8 479.2,220.0 480.0,219.9 481.7,218.1 485.1,215.7 486.5,216.0 487.5,215.5 490.4,212.4 492.5,211.1 494.6,211.3 492.0,208.9 490.8,207.9 489.9,206.9 487.0,204.4 485.4,203.7 484.1,202.5 482.2,201.2 483.2,203.2 484.2,205.2 485.1,207.1 486.1,209.0 484.0,208.3 481.8,207.6 479.6,206.9 477.5,206.2 476.2,207.8 474.9,209.4 473.6,211.0 473.1,213.0 472.7,215.0 473.0,217.0 473.4,219.0 473.7,221.0 474.0,223.0 473.8,223.5"/>
<polygon points="497.9,221.6 498.8,220.9 497.0,217.2 496.6,214.3 495.6,211.9 495.6,211.4 494.6,211.3 492.5,211.1 490.4,212.4 487.5,215.5 486.5,216.0 485.1,215.7 481.7,218.1 480.0,219.9 479.2,220.0 476.9,221.8 474.7,223.7 476.7,224.8 478.3,226.3 481.7,226.2 483.0,228.4 485.1,229.5 488.0,229.6 489.7,229.3 489.8,227.2 491.7,225.5 494.7,224.4 496.0,222.8"/>
<polygon points="490.4,238.3 491.9,239.4 493.3,237.8 497.0,235.4 499.7,236.3 499.6,236.5 502.0,234.7 505.6,233.7 507.7,233.2 506.5,232.4 505.9,229.7 504.6,227.2 503.7,226.2 500.7,224.2 498.0,222.0 497.9,221.6 496.0,222.8 494.7,224.4 491.7,225.5 489.8,227.2 489.7,229.3 488.0,229.6 487.6,232.0 488.6,234.1 488.9,237.1"/>
<polygon points="516.9,214.7 516.5,213.3 515.2,210.9 511.9,210.8 510.2,209.7 508.7,208.6 506.1,208.1 505.4,205.7 504.2,205.4 500.8,207.3 498.8,207.3 497.7,208.6 495.6,211.4 495.6,211.9 496.6,214.3 497.0,217.2 498.8,220.9 497.9,221.6 498.0,222.0 500.7,224.2 503.7,226.2 504.6,227.2 505.9,229.7 507.6,227.4 508.3,226.5 511.0,223.9 511.7,220.7 513.9,219.7 514.6,217.5 514.9,215.5"/>
<polygon points="511.5,237.8 512.5,236.4 515.3,237.5 518.7,238.1 520.5,237.4 522.6,239.0 523.0,236.4 523.9,235.1 524.6,234.0 523.5,231.5 524.9,228.7 525.0,226.7 523.6,225.0 523.6,221.8 522.6,219.9 521.5,218.2 521.1,216.6 519.2,215.0 516.9,214.7 514.9,215.5 514.6,217.5 513.9,219.7 511.7,220.7 511.0,223.9 508.3,226.5 507.6,227.4 505.9,229.7 506.5,232.4 507.7,233.2 508.0,233.7 509.5,235.9"/>
<polygon points="516.5,213.3 516.9,214.7 519.2,215.0 521.1,216.6 521.5,218.2 523.7,217.7 527.7,217.6 529.0,216.2 529.2,214.4 532.6,215.5 535.6,215.7 533.3,213.3 531.0,210.7 530.3,209.5 529.0,207.2 527.7,205.2 526.9,204.8 524.7,203.2 523.5,203.5 520.2,206.0 519.2,208.9 517.6,210.4"/>
<polygon points="430.2,229.2 432.0,231.4 431.4,232.0 432.3,233.4 435.4,235.1 437.4,234.5 438.2,235.5 440.8,237.2 443.6,234.7 444.6,234.8 448.1,234.7 450.6,233.7 452.0,233.7 452.4,232.0 452.8,230.4 453.2,228.7 451.6,227.0 450.0,225.4 448.4,223.7 446.8,222.0 445.2,220.4 443.6,218.7 441.7,219.2 439.8,219.6 437.9,220.1 436.0,221.4 434.0,222.6 432.1,223.9 431.2,222.2 430.2,220.6 429.2,218.9 428.3,217.2 427.8,217.4 428.5,219.7 428.9,222.0 428.5,224.2 427.8,225.1"/>
<polygon points="440.8,237.2 442.7,237.9 442.1,239.3 442.3,242.1 442.8,245.7 442.9,247.1 445.3,246.8 446.7,248.5 449.4,250.2 451.4,248.5 453.6,245.3 453.7,244.3 455.7,243.7 457.2,240.8 458.9,239.1 461.2,237.8 459.0,238.3 457.6,239.2 456.1,240.2 454.5,238.9 452.9,237.7 451.3,236.4 451.6,235.0 452.0,233.7 450.6,233.7 448.1,234.7 444.6,234.8 443.6,234.7"/>
<polygon points="449.4,250.2 450.5,250.5 450.1,253.4 450.3,255.3 450.5,257.6 450.4,259.1 453.1,260.1 454.4,261.0 455.4,260.3 458.1,260.7 460.1,259.0 461.4,256.7 463.1,254.4 461.9,253.2 461.6,250.3 462.4,247.9 460.9,247.2 462.5,244.6 462.5,241.7 462.8,240.5 462.9,237.4 462.8,237.4 461.2,237.8 458.9,239.1 457.2,240.8 455.7,243.7 453.7,244.3 453.6,245.3 451.4,248.5"/>
<polygon points="461.4,256.7 462.8,257.7 465.8,257.5 468.5,258.8 469.3,259.4 472.7,259.8 475.7,260.8 477.4,259.4 477.8,257.2 477.2,255.2 479.4,254.2 478.5,251.5 479.3,249.1 479.7,248.1 476.2,245.7 475.2,244.2 474.0,243.0 471.6,240.2 470.4,239.3 468.0,237.7 466.4,236.4 464.7,236.9 462.9,237.4 462.8,240.5 462.5,241.7 462.5,244.6 460.9,247.2 462.4,247.9 461.6,250.3 461.9,253.2 463.1,254.4"/>
<polygon points="479.7,248.1 480.6,246.3 482.0,244.1 484.7,244.4 487.1,244.5 488.3,242.7 490.6,239.5 490.4,238.3 488.9,237.1 488.6,234.1 487.6,232.0 488.0,229.6 485.1,229.5 483.0,228.4 481.7,226.2 478.3,226.3 476.7,224.8 474.7,223.7 473.8,223.5 472.8,225.3 471.9,227.2 471.0,229.0 470.7,231.1 470.3,233.3 470.0,235.4 468.2,235.9 466.4,236.4 468.0,237.7 470.4,239.3 471.6,240.2 474.0,243.0 475.2,244.2 476.2,245.7"/>
<polygon points="488.3,242.7 489.6,245.6 492.4,247.0 494.6,248.0 494.6,250.2 497.1,250.5 499.7,252.4 500.9,254.2 503.4,255.3 504.8,253.0 504.5,252.0 506.9,249.5 506.7,248.1 508.1,247.0 509.3,243.8 509.6,241.7 511.2,240.6 511.5,237.8 509.5,235.9 508.0,233.7 507.7,233.2 505.6,233.7 502.0,234.7 499.6,236.5 499.7,236.3 497.0,235.4 493.3,237.8 491.9,239.4 490.4,238.3 490.6,239.5"/>
<polygon points="477.8,257.2 480.8,258.9 483.3,259.7 483.8,259.7 486.2,262.1 488.1,262.8 489.0,263.9 492.0,265.1 495.0,263.4 495.7,263.1 496.3,261.8 498.9,259.8 500.9,258.4 503.0,256.5 503.4,255.3 500.9,254.2 499.7,252.4 497.1,250.5 494.6,250.2 494.6,248.0 492.4,247.0 489.6,245.6 488.3,242.7 487.1,244.5 484.7,244.4 482.0,244.1 480.6,246.3 479.7,248.1 479.3,249.1 478.5,251.5 479.4,254.2 477.2,255.2"/>
<polygon points="525.0,242.4 523.4,240.6 522.9,239.9 522.6,239.0 520.5,237.4 518.7,238.1 515.3,237.5 512.5,236.4 511.5,237.8 511.2,240.6 509.6,241.7 509.3,243.8 508.1,247.0 506.7,248.1 506.9,249.5 504.5,252.0 504.8,253.0 503.4,255.3 503.0,256.5 503.9,259.0 505.7,259.6 509.3,261.3 511.1,262.8 512.9,262.7 515.0,262.7 516.4,261.2 518.3,259.9 521.0,261.5 524.6,260.7 523.2,257.0 523.7,255.7 523.0,254.0 523.5,250.0 523.0,247.8 524.1,246.0"/>
<polygon points="436.9,252.3 435.8,256.4 435.4,257.4 435.7,258.8 440.2,259.3 441.7,260.4 443.1,259.8 446.9,260.1 447.8,258.9 450.4,259.1 450.5,257.6 450.3,255.3 450.1,253.4 450.5,250.5 449.4,250.2 446.7,248.5 445.3,246.8 442.9,247.1 441.2,247.6 439.1,249.5 437.4,251.0"/>
<polygon points="471.2,278.9 474.2,278.3 475.6,279.1 477.1,278.4 480.3,279.4 481.9,280.3 483.5,280.0 486.7,279.5 488.7,277.6 489.5,276.0 491.4,274.8 491.8,272.1 491.6,270.1 492.8,268.3 492.0,265.1 489.0,263.9 488.1,262.8 486.2,262.1 483.8,259.7 483.3,259.7 480.8,258.9 477.8,257.2 477.4,259.4 475.7,260.8 474.4,262.3 474.6,265.1 472.4,267.9 473.2,268.6 470.8,271.0 471.4,274.2 469.6,275.6 470.1,276.8"/>
<polygon points="475.7,260.8 472.7,259.8 469.3,259.4 468.5,258.8 465.8,257.5 462.8,257.7 461.4,256.7 460.1,259.0 458.1,260.7 455.4,260.3 454.4,261.0 454.2,263.6 454.1,265.8 453.1,266.8 456.5,267.6 458.5,268.2 460.6,270.6 463.8,270.7 464.8,271.6 466.1,272.9 468.7,273.3 469.6,275.6 471.4,274.2 470.8,271.0 473.2,268.6 472.4,267.9 474.6,265.1 474.4,262.3"/>
<polygon points="491.4,274.8 492.4,276.6 494.9,278.0 495.8,278.7 498.2,281.1 501.6,281.3 502.9,282.4 503.9,283.2 506.8,280.8 508.7,279.9 510.2,280.2 512.9,279.2 511.3,278.0 512.3,274.9 512.5,272.5 513.4,270.7 513.0,267.2 512.0,264.4 512.9,262.7 511.1,262.8 509.3,261.3 505.7,259.6 503.9,259.0 503.0,256.5 500.9,258.4 498.9,259.8 496.3,261.8 495.7,263.1 495.0,263.4 492.0,265.1 492.8,268.3 491.6,270.1 491.8,272.1"/>
<polygon points="524.8,260.6 524.6,260.7 521.0,261.5 518.3,259.9 516.4,261.2 515.0,262.7 512.9,262.7 512.0,264.4 513.0,267.2 513.4,270.7 512.5,272.5 512.3,274.9 511.3,278.0 512.9,279.2 515.4,279.9 515.8,282.1 516.5,282.6 519.2,283.7 521.9,283.6 523.0,281.8 523.3,279.0 525.5,278.2 526.9,277.7 528.3,275.6 527.8,272.7 527.0,271.1 527.0,269.7 527.4,266.7 525.1,264.8 524.4,262.2"/>
<polygon points="543.5,258.1 540.4,257.9 539.2,256.4 536.8,254.7 534.8,254.3 533.3,254.5 532.8,255.8 530.8,257.6 527.1,258.1 525.0,258.5 524.8,260.6 526.6,261.1 530.1,261.9 531.6,262.2 532.8,263.1 536.1,263.0 537.7,264.6 540.1,264.5 543.0,265.2 542.5,263.3 542.9,260.8"/>
<polygon points="453.1,266.8 453.0,268.0 451.2,270.6 450.5,271.8 448.9,274.5 447.5,277.9 448.6,277.9 449.5,280.4 451.1,283.8 452.1,285.6 454.7,285.4 456.8,285.1 458.6,284.2 459.7,284.8 463.1,285.4 465.7,285.2 467.0,285.1 468.2,282.3 469.8,281.3 471.2,278.9 470.1,276.8 469.6,275.6 468.7,273.3 466.1,272.9 464.8,271.6 463.8,270.7 460.6,270.6 458.5,268.2 456.5,267.6"/>
<polygon points="484.7,290.3 485.8,289.7 485.6,287.7 486.1,285.0 485.3,281.5 483.5,280.0 481.9,280.3 480.3,279.4 477.1,278.4 475.6,279.1 474.2,278.3 471.2,278.9 469.8,281.3 468.2,282.3 467.0,285.1 467.3,288.4 469.9,288.5 469.7,291.4 469.3,294.1 470.0,297.0 470.1,298.4 472.4,298.8 473.8,300.4 474.7,299.8 477.8,299.5 479.6,297.0 480.9,294.8 483.1,294.7 483.6,293.3"/>
<polygon points="498.2,295.3 499.8,294.2 499.5,291.1 500.3,289.1 501.2,287.0 501.0,283.6 502.9,282.4 501.6,281.3 498.2,281.1 495.8,278.7 494.9,278.0 492.4,276.6 491.4,274.8 489.5,276.0 488.7,277.6 486.7,279.5 483.5,280.0 485.3,281.5 486.1,285.0 485.6,287.7 485.8,289.7 484.7,290.3 488.0,291.5 489.8,293.5 492.0,293.9 495.6,295.7 496.9,295.6 497.4,295.6"/>
<polygon points="512.9,279.2 510.2,280.2 508.7,279.9 506.8,280.8 503.9,283.2 502.9,282.4 501.0,283.6 501.2,287.0 500.3,289.1 499.5,291.1 499.8,294.2 498.2,295.3 501.6,296.8 502.9,297.2 504.7,299.1 507.5,299.4 508.8,299.6 509.2,299.7 511.9,297.7 514.5,295.6 515.7,295.0 518.1,293.4 519.0,291.9 520.0,290.6 521.1,289.2 521.1,285.8 519.2,283.7 516.5,282.6 515.8,282.1 515.4,279.9"/>
<polygon points="528.3,275.6 526.9,277.7 525.5,278.2 523.3,279.0 523.0,281.8 521.9,283.6 519.2,283.7 521.1,285.8 521.1,289.2 520.0,290.6 522.4,291.2 524.9,293.1 525.3,294.0 527.3,292.6 530.5,292.4 533.2,291.3 535.0,291.0 538.1,291.6 539.5,290.5 541.1,287.7 540.2,285.7 539.3,284.0 539.7,281.2 539.1,278.7 540.0,276.2 538.6,276.4 535.8,276.2 532.5,275.2 531.5,274.9"/>
<polygon points="544.6,272.2 542.1,273.3 540.3,274.5 540.0,276.2 539.1,278.7 539.7,281.2 539.3,284.0 540.2,285.7 541.1,287.7 539.5,290.5 540.3,291.9 543.3,293.5 544.9,292.2 546.7,291.1 548.2,290.8 552.1,290.6 554.2,290.8 553.2,286.7 554.8,284.6 553.2,283.6 553.4,280.1 553.7,277.8 553.3,277.4 553.3,276.2 552.3,273.6 549.9,271.8 548.2,272.8 547.0,271.7"/>
<polygon points="508.1,319.0 509.0,316.1 509.0,314.5 510.9,311.6 510.5,308.6 511.6,308.4 510.0,305.9 508.5,302.9 508.8,299.6 507.5,299.4 504.7,299.1 502.9,297.2 501.6,296.8 498.2,295.3 497.4,295.6 496.9,295.6 495.0,299.2 494.2,301.1 494.1,303.4 491.7,306.7 492.4,307.7 490.3,309.6 489.9,312.4 492.0,313.2 495.4,314.3 496.7,314.9 499.9,315.7 502.3,317.5 503.7,316.7 506.8,319.0"/>
<polygon points="520.0,290.6 519.0,291.9 518.1,293.4 515.7,295.0 514.5,295.6 511.9,297.7 509.2,299.7 508.8,299.6 508.5,302.9 510.0,305.9 511.6,308.4 510.5,308.6 512.7,309.5 515.7,309.8 518.9,307.0 519.0,306.4 522.0,306.6 525.9,306.0 527.3,305.7 527.2,301.9 527.9,300.5 525.5,297.5 525.3,294.4 525.3,294.0 524.9,293.1 522.4,291.2"/>
<polygon points="529.6,308.2 528.0,307.2 527.3,305.7 525.9,306.0 522.0,306.6 519.0,306.4 518.9,307.0 515.7,309.8 512.7,309.5 510.5,308.6 510.9,311.6 509.0,314.5 509.0,316.1 508.1,319.0 508.4,319.4 509.0,319.0 510.7,319.7 512.3,320.3 514.0,321.0 516.0,320.3 518.0,319.7 520.0,319.0 522.0,320.5 524.0,322.0 526.2,321.2 527.2,318.5 528.4,315.9 528.3,314.7 529.2,312.0 529.7,310.0"/>
<polygon points="525.3,294.0 525.3,294.4 525.5,297.5 527.9,300.5 527.2,301.9 527.3,305.7 528.0,307.2 529.6,308.2 533.2,309.1 534.3,307.9 537.6,307.2 540.1,308.4 540.5,307.8 544.0,309.1 543.5,306.4 543.2,302.6 543.1,301.6 544.0,299.1 543.1,296.3 543.9,295.2 543.3,293.5 540.3,291.9 539.5,290.5 538.1,291.6 535.0,291.0 533.2,291.3 530.5,292.4 527.3,292.6"/>
<polygon points="544.0,309.1 540.5,307.8 540.1,308.4 537.6,307.2 534.3,307.9 533.2,309.1 529.6,308.2 529.7,310.0 529.2,312.0 528.3,314.7 528.4,315.9 527.2,318.5 526.2,321.2 528.5,320.5 530.8,319.8 533.0,319.0 535.2,318.5 537.3,318.0 539.5,317.5 541.7,317.0 543.8,316.5 546.0,316.0 548.0,315.0 550.0,314.0 550.1,313.9 548.8,312.7 547.3,310.6 546.3,309.8"/>
<polygon points="544.0,309.1 546.3,309.8 547.3,310.6 548.8,312.7 550.1,313.9 552.1,313.0 554.1,312.0 556.0,311.0 558.0,310.0 560.0,309.0 561.6,308.3 563.3,307.5 562.7,305.5 562.2,303.1 561.5,300.9 561.3,296.9 559.6,296.3 560.5,294.4 558.8,292.4 555.6,292.6 554.2,290.8 552.1,290.6 548.2,290.8 546.7,291.1 544.9,292.2 543.3,293.5 543.9,295.2 543.1,296.3 544.0,299.1 543.1,301.6 543.2,302.6 543.5,306.4"/>
<polygon points="525.2,202.6 527.0,201.9 528.9,201.6 531.6,202.0 534.1,202.2 535.8,202.0 537.7,203.7 539.3,202.2 541.2,199.5 542.0,198.0 541.0,196.9 540.9,195.3 538.8,195.6 536.6,195.2 534.4,194.8 532.2,194.4 530.1,194.0 527.9,193.6 525.7,193.2 523.5,192.8 523.6,195.2 523.1,196.7 525.1,198.2"/>
<polygon points="550.7,207.3 551.5,204.1 552.6,202.8 554.7,203.2 554.2,200.3 554.6,196.8 555.4,195.8 554.4,193.6 555.8,191.3 553.5,191.5 551.3,191.8 549.0,192.0 547.0,193.3 545.0,194.7 543.0,195.0 540.9,195.3 541.0,196.9 542.0,198.0 541.2,199.5 541.5,201.5 543.6,202.9 546.7,203.8 548.2,206.4"/>
<polygon points="565.7,194.0 563.5,193.0 561.2,192.0 559.0,191.0 557.4,191.2 555.8,191.3 554.4,193.6 555.4,195.8 554.6,196.8 554.2,200.3 554.7,203.2 555.6,203.8 558.0,203.7 561.7,204.7 562.5,204.4 564.4,204.4 568.0,204.9 566.0,203.2 566.4,201.5 565.8,197.9 565.3,195.6"/>
<polygon points="568.0,204.9 568.3,206.2 567.2,208.0 570.9,208.0 573.5,206.7 575.4,206.4 575.9,207.4 579.1,207.0 579.2,206.9 579.9,204.0 578.9,202.2 580.2,200.3 579.6,196.4 580.9,194.3 579.5,194.2 578.0,194.0 576.0,194.2 574.0,194.4 572.0,194.6 570.0,194.8 568.0,195.0 565.7,194.0 565.3,195.6 565.8,197.9 566.4,201.5 566.0,203.2"/>
<polygon points="594.6,196.5 592.7,196.1 590.8,195.8 588.9,195.4 587.0,195.0 585.0,194.8 582.9,194.5 580.9,194.3 579.6,196.4 580.2,200.3 578.9,202.2 579.9,204.0 579.2,206.9 580.6,206.9 582.3,207.3 585.3,206.6 587.5,206.5 589.4,207.4 590.8,206.9 590.3,205.7 591.6,202.2 592.9,199.9 592.6,198.5"/>
<polygon points="536.8,213.5 538.4,213.6 541.6,213.8 543.1,213.7 544.5,214.6 546.5,214.0 549.5,211.2 550.5,209.4 550.0,208.0 550.7,207.3 548.2,206.4 546.7,203.8 543.6,202.9 541.5,201.5 541.2,199.5 539.3,202.2 537.7,203.7 537.0,205.5 537.6,208.0 537.3,210.1 536.8,211.5"/>
<polygon points="568.0,204.9 564.4,204.4 562.5,204.4 561.7,204.7 558.0,203.7 555.6,203.8 554.7,203.2 552.6,202.8 551.5,204.1 550.7,207.3 550.0,208.0 550.5,209.4 552.1,210.8 552.8,211.7 555.5,211.5 558.1,213.1 558.1,213.5 559.2,212.5 563.0,210.6 565.9,209.7 566.2,209.3 567.0,208.3 567.2,208.0 568.3,206.2"/>
<polygon points="525.2,202.6 524.7,203.2 526.9,204.8 527.7,205.2 529.0,207.2 530.3,209.5 531.0,210.7 533.3,213.3 535.6,215.7 535.7,215.7 536.8,213.5 536.8,211.5 537.3,210.1 537.6,208.0 537.0,205.5 537.7,203.7 535.8,202.0 534.1,202.2 531.6,202.0 528.9,201.6 527.0,201.9"/>
<polygon points="547.1,229.3 546.3,225.2 546.6,222.7 546.9,221.5 546.1,219.7 546.4,217.2 544.5,214.6 543.1,213.7 541.6,213.8 538.4,213.6 536.8,213.5 535.7,215.7 535.4,216.4 535.2,217.7 535.3,219.0 535.0,222.4 537.8,224.9 539.4,225.6 540.7,226.7 543.1,228.7 543.9,228.9 544.8,228.7"/>
<polygon points="558.4,221.7 558.1,220.7 557.2,219.1 557.0,217.0 558.1,213.1 555.5,211.5 552.8,211.7 552.1,210.8 550.5,209.4 549.5,211.2 546.5,214.0 544.5,214.6 546.4,217.2 546.1,219.7 546.9,221.5 546.6,222.7 546.3,225.2 547.1,229.3 549.9,228.5 552.2,227.1 552.4,227.8 554.6,226.7 557.3,224.6"/>
<polygon points="567.0,208.3 566.2,209.3 565.9,209.7 563.0,210.6 559.2,212.5 558.1,213.5 558.1,213.1 557.0,217.0 557.2,219.1 558.1,220.7 558.4,221.7 560.7,223.4 562.0,222.6 565.6,223.8 568.3,224.3 569.4,223.9 569.2,220.7 569.6,219.1 570.0,218.3 568.7,215.0 569.3,212.3 568.0,209.8"/>
<polygon points="573.0,224.9 574.1,224.1 574.6,221.8 577.2,220.1 577.1,216.6 578.6,215.3 579.5,213.8 579.3,210.0 580.5,208.4 579.1,207.0 575.9,207.4 575.4,206.4 573.5,206.7 570.9,208.0 567.2,208.0 567.0,208.3 568.0,209.8 569.3,212.3 568.7,215.0 570.0,218.3 569.6,219.1 569.2,220.7 569.4,223.9 571.3,225.1"/>
<polygon points="579.2,206.9 579.1,207.0 580.5,208.4 579.3,210.0 579.5,213.8 582.5,215.8 584.9,216.3 584.9,218.1 585.8,219.6 588.0,219.7 588.1,219.7 589.5,218.6 591.3,216.8 590.9,214.5 591.2,213.1 590.2,211.8 588.7,209.5 589.4,207.4 587.5,206.5 585.3,206.6 582.3,207.3 580.6,206.9"/>
<polygon points="588.0,219.7 585.8,219.6 584.9,218.1 584.9,216.3 582.5,215.8 579.5,213.8 578.6,215.3 577.1,216.6 577.2,220.1 574.6,221.8 574.1,224.1 575.4,222.0 576.3,222.2 580.1,223.6 582.5,221.7 583.9,220.8 586.2,221.1"/>
<polygon points="521.5,218.2 522.6,219.9 523.6,221.8 523.6,225.0 525.0,226.7 524.9,228.7 527.0,227.8 528.3,226.7 530.4,225.2 532.7,224.0 533.6,223.4 535.0,222.4 535.3,219.0 535.2,217.7 535.4,216.4 535.7,215.7 535.6,215.7 532.6,215.5 529.2,214.4 529.0,216.2 527.7,217.6 523.7,217.7"/>
<polygon points="569.4,223.9 568.3,224.3 565.6,223.8 562.0,222.6 560.7,223.4 558.4,221.7 557.3,224.6 554.6,226.7 552.4,227.8 555.4,229.3 557.1,231.0 556.7,234.3 558.7,236.2 561.7,236.3 561.9,238.1 563.7,237.9 564.8,236.0 568.1,233.2 570.1,233.5 570.3,232.1 571.3,228.3 570.4,226.2 571.3,225.1"/>
<polygon points="578.1,238.7 581.6,238.8 582.7,236.3 584.3,233.3 586.2,232.9 585.2,231.7 582.2,231.0 579.7,229.2 578.6,229.3 575.6,227.3 574.0,225.8 573.0,224.9 571.3,225.1 570.4,226.2 571.3,228.3 570.3,232.1 570.1,233.5 571.2,234.4 573.4,235.1 575.0,237.5 575.7,238.1"/>
<polygon points="586.2,232.9 587.1,233.6 587.3,231.1 589.1,229.0 589.4,228.7 588.1,226.1 590.1,223.4 589.5,220.7 588.1,219.7 588.0,219.7 586.2,221.1 583.9,220.8 582.5,221.7 580.1,223.6 576.3,222.2 575.4,222.0 574.1,224.1 573.0,224.9 574.0,225.8 575.6,227.3 578.6,229.3 579.7,229.2 582.2,231.0 585.2,231.7"/>
<polygon points="546.5,240.6 546.2,238.0 544.9,236.2 545.9,234.4 544.4,230.5 544.8,228.7 543.9,228.9 542.5,230.1 539.4,230.5 537.5,231.6 535.3,232.4 532.0,232.5 530.4,234.9 528.3,235.3 525.8,234.1 527.4,236.2 529.1,237.2 532.2,237.6 533.2,239.0 535.6,239.4 538.8,241.6 540.3,241.5 543.5,242.3 544.4,242.3"/>
<polygon points="560.2,241.7 561.9,238.1 561.7,236.3 558.7,236.2 556.7,234.3 557.1,231.0 555.4,229.3 552.4,227.8 552.2,227.1 549.9,228.5 547.1,229.3 544.8,228.7 544.4,230.5 545.9,234.4 544.9,236.2 546.2,238.0 546.5,240.6 547.2,239.9 549.4,242.1 551.7,242.5 552.7,242.7 556.1,244.4 558.5,242.3 560.1,242.3"/>
<polygon points="570.2,249.1 572.3,248.4 573.5,245.3 573.7,243.4 575.3,241.5 575.7,238.1 575.0,237.5 573.4,235.1 571.2,234.4 570.1,233.5 568.1,233.2 564.8,236.0 563.7,237.9 561.9,238.1 560.2,241.7 562.7,243.8 565.8,244.6 566.1,247.2 568.1,247.5"/>
<polygon points="585.7,249.5 587.3,250.4 590.3,250.7 591.5,250.7 591.4,247.8 593.0,245.1 593.2,244.6 593.4,242.6 592.2,241.1 590.0,237.5 589.7,235.2 589.4,235.2 587.1,233.6 586.2,232.9 584.3,233.3 582.7,236.3 581.6,238.8 578.1,238.7 580.3,241.1 581.2,242.8 581.5,245.3 583.6,248.1 585.4,248.7"/>
<polygon points="535.0,222.4 533.6,223.4 532.7,224.0 530.4,225.2 528.3,226.7 527.0,227.8 524.9,228.7 523.5,231.5 524.6,234.0 523.9,235.1 525.8,234.1 528.3,235.3 530.4,234.9 532.0,232.5 535.3,232.4 537.5,231.6 539.4,230.5 542.5,230.1 543.9,228.9 543.1,228.7 540.7,226.7 539.4,225.6 537.8,224.9"/>
<polygon points="601.8,211.5 601.4,208.1 602.2,205.3 603.0,204.5 601.7,201.3 602.3,198.3 600.6,197.9 598.8,197.4 597.0,197.0 594.6,196.5 592.6,198.5 592.9,199.9 591.6,202.2 590.3,205.7 590.8,206.9 594.0,206.8 595.4,209.3 596.5,208.9 599.9,209.9"/>
<polygon points="614.9,209.1 616.6,207.7 618.1,206.9 620.8,206.2 623.6,205.4 624.8,204.0 624.6,201.7 624.4,199.5 624.2,197.2 624.0,195.0 622.0,195.3 620.0,195.7 618.0,196.0 616.1,196.5 614.1,197.0 612.2,197.4 610.3,197.9 611.8,200.1 611.6,202.3 611.5,204.2 614.3,207.6"/>
<polygon points="601.8,211.5 600.7,211.4 601.5,211.9 602.4,212.6 605.4,214.7 607.1,213.6 609.9,215.7 612.6,214.5 613.6,213.6 614.5,210.7 614.9,209.1 614.3,207.6 611.5,204.2 611.6,202.3 611.8,200.1 610.3,197.9 610.0,198.0 608.3,198.3 606.7,198.7 605.0,199.0 603.7,198.7 602.3,198.3 601.7,201.3 603.0,204.5 602.2,205.3 601.4,208.1"/>
<polygon points="614.9,209.1 614.5,210.7 613.6,213.6 615.6,213.4 618.4,214.4 620.4,213.2 622.1,215.3 624.6,215.0 626.6,215.7 628.3,215.8 628.0,214.0 627.2,212.0 626.5,210.0 625.8,208.0 625.0,206.0 624.8,204.0 623.6,205.4 620.8,206.2 618.1,206.9 616.6,207.7"/>
<polygon points="589.4,207.4 588.7,209.5 590.2,211.8 591.2,213.1 590.9,214.5 592.2,215.3 595.4,214.8 598.9,214.7 600.2,213.3 601.5,211.9 600.7,211.4 601.8,211.5 599.9,209.9 596.5,208.9 595.4,209.3 594.0,206.8 590.8,206.9"/>
<polygon points="614.2,223.4 616.8,223.4 617.5,223.1 620.2,224.5 622.8,223.5 624.2,224.8 626.7,225.3 629.0,225.7 629.9,225.7 629.6,223.7 629.3,221.7 629.0,219.8 628.6,217.8 628.3,215.8 626.6,215.7 624.6,215.0 622.1,215.3 620.4,213.2 618.4,214.4 615.6,213.4 613.6,213.6 612.6,214.5 612.8,216.5 613.5,217.5 612.7,220.4"/>
<polygon points="629.0,225.7 626.7,225.3 624.2,224.8 622.8,223.5 620.2,224.5 617.5,223.1 616.8,223.4 614.2,223.4 613.6,225.3 612.3,225.2 611.8,227.0 613.8,230.3 612.9,232.3 612.7,232.2 614.8,234.7 615.9,238.0 617.8,236.5 619.7,235.7 621.0,236.2 623.3,236.2 625.2,233.5 626.6,231.4 627.3,230.2 628.8,227.2"/>
<polygon points="602.4,212.6 602.7,215.3 600.2,217.9 600.8,219.3 601.2,221.8 601.4,225.7 602.6,227.0 603.6,227.1 606.3,228.5 608.7,228.5 608.9,227.7 611.8,227.0 612.3,225.2 613.6,225.3 614.2,223.4 612.7,220.4 613.5,217.5 612.8,216.5 612.6,214.5 609.9,215.7 607.1,213.6 605.4,214.7"/>
<polygon points="603.6,227.1 602.6,227.0 601.4,225.7 601.2,221.8 600.8,219.3 597.2,221.7 596.0,222.4 594.1,221.8 591.7,223.1 590.1,223.4 588.1,226.1 589.4,228.7 589.1,229.0 592.7,229.2 594.5,230.2 597.1,230.9 599.4,230.5 600.9,231.7 601.4,228.8"/>
<polygon points="590.9,214.5 591.3,216.8 589.5,218.6 588.1,219.7 589.5,220.7 590.1,223.4 591.7,223.1 594.1,221.8 596.0,222.4 597.2,221.7 600.8,219.3 600.2,217.9 602.7,215.3 602.4,212.6 601.5,211.9 600.2,213.3 598.9,214.7 595.4,214.8 592.2,215.3"/>
<polygon points="615.9,238.0 614.8,234.7 612.7,232.2 612.9,232.3 613.8,230.3 611.8,227.0 608.9,227.7 608.7,228.5 606.3,228.5 603.6,227.1 601.4,228.8 600.9,231.7 601.6,233.0 601.5,234.5 602.8,236.6 602.2,240.3 603.3,242.2 605.6,242.1 607.6,243.2 608.6,244.3 611.6,244.5 612.2,241.8 613.9,240.2 614.3,240.1"/>
<polygon points="589.1,229.0 587.3,231.1 587.1,233.6 589.4,235.2 589.7,235.2 590.0,237.5 592.2,241.1 593.4,242.6 596.3,240.7 597.1,241.0 600.1,240.5 602.2,240.3 602.8,236.6 601.5,234.5 601.6,233.0 600.9,231.7 599.4,230.5 597.1,230.9 594.5,230.2 592.7,229.2"/>
<polygon points="623.3,236.2 621.0,236.2 619.7,235.7 617.8,236.5 615.9,238.0 614.3,240.1 613.9,240.2 612.2,241.8 611.6,244.5 611.8,244.9 614.8,247.1 615.8,245.7 618.1,246.5 620.8,246.0 622.1,245.7 624.6,246.4 627.2,246.7 629.1,247.1 630.2,246.5 630.2,244.4 628.9,241.6 628.1,240.8 626.1,239.2 625.0,237.0"/>
<polygon points="635.0,242.3 634.0,241.0 633.5,239.0 633.0,237.0 632.5,235.0 632.0,233.0 631.3,230.7 630.7,228.3 630.0,226.0 629.9,225.7 629.0,225.7 628.8,227.2 627.3,230.2 626.6,231.4 625.2,233.5 623.3,236.2 625.0,237.0 626.1,239.2 628.1,240.8 628.9,241.6 630.2,244.4 632.4,242.9"/>
<polygon points="602.2,240.3 600.1,240.5 597.1,241.0 596.3,240.7 593.4,242.6 593.2,244.6 593.0,245.1 591.4,247.8 591.5,250.7 592.6,250.8 595.0,252.5 597.3,252.6 598.1,254.1 600.6,256.0 603.1,255.8 604.8,254.3 605.2,252.6 607.9,251.9 609.5,249.0 611.8,246.5 611.8,244.9 611.6,244.5 608.6,244.3 607.6,243.2 605.6,242.1 603.3,242.2"/>
<polygon points="611.8,244.9 611.8,246.5 612.8,249.1 614.3,250.8 616.8,253.1 617.3,256.4 618.2,257.2 621.4,258.3 622.4,260.7 622.6,260.9 624.1,259.1 624.6,257.7 627.3,255.7 629.2,255.3 630.3,254.8 630.6,251.4 629.1,249.3 629.1,247.1 627.2,246.7 624.6,246.4 622.1,245.7 620.8,246.0 618.1,246.5 615.8,245.7 614.8,247.1"/>
<polygon points="622.4,260.7 621.4,258.3 618.2,257.2 617.3,256.4 616.8,253.1 614.3,250.8 612.8,249.1 611.8,246.5 609.5,249.0 607.9,251.9 605.2,252.6 604.8,254.3 603.1,255.8 601.9,256.4 602.7,258.6 601.9,261.1 603.8,263.5 605.9,264.2 607.2,266.8 610.7,267.5 612.3,266.0 613.8,264.6 615.8,263.7 617.6,263.2 619.7,262.4"/>
<polygon points="630.3,254.8 629.2,255.3 627.3,255.7 624.6,257.7 624.1,259.1 622.6,260.9 622.7,262.0 625.3,264.9 626.8,268.0 626.0,268.6 629.7,267.8 632.3,268.0 634.0,266.3 634.7,265.9 639.1,266.3 640.9,265.4 640.7,263.2 640.5,261.1 640.3,258.9 640.1,256.7 638.0,256.0 636.3,256.3 632.7,255.2 631.3,254.1"/>
<polygon points="587.7,258.3 588.6,257.0 587.0,254.7 587.3,250.4 585.7,249.5 584.0,251.8 581.7,253.0 579.7,251.9 577.3,252.8 576.5,253.1 572.6,253.3 573.7,256.0 574.7,257.8 573.1,259.9 573.4,264.2 576.4,264.3 578.8,265.3 579.9,266.6 581.8,263.7 582.9,262.2 585.5,262.3 587.3,260.8"/>
<polygon points="599.1,263.9 599.7,262.3 600.2,262.4 601.9,261.1 602.7,258.6 601.9,256.4 603.1,255.8 600.6,256.0 598.1,254.1 597.3,252.6 595.0,252.5 592.6,250.8 591.5,250.7 590.3,250.7 587.3,250.4 587.0,254.7 588.6,257.0 587.7,258.3 588.6,259.0 591.4,261.5 593.0,264.0 592.7,264.9 596.5,265.1"/>
<polygon points="627.2,276.1 629.0,277.2 629.6,278.0 631.7,278.3 634.4,279.1 636.0,279.2 637.6,278.8 641.0,278.1 641.0,275.9 641.0,273.7 641.0,271.5 641.0,269.2 641.0,267.0 640.9,265.4 639.1,266.3 634.7,265.9 634.0,266.3 632.3,268.0 629.7,267.8 626.0,268.6 626.2,269.9 626.6,272.4 625.3,274.9"/>
<polygon points="622.9,280.2 625.3,277.2 627.2,276.1 625.3,274.9 626.6,272.4 626.2,269.9 626.0,268.6 626.8,268.0 625.3,264.9 622.7,262.0 622.6,260.9 622.4,260.7 619.7,262.4 617.6,263.2 615.8,263.7 613.8,264.6 612.3,266.0 610.7,267.5 610.4,268.1 610.5,270.8 609.9,274.0 611.4,275.8 614.8,275.4 616.2,277.7 619.0,277.8 621.7,278.5"/>
<polygon points="609.9,274.0 610.5,270.8 610.4,268.1 610.7,267.5 607.2,266.8 605.9,264.2 603.8,263.5 601.9,261.1 600.2,262.4 599.7,262.3 599.1,263.9 598.6,266.3 598.7,268.3 599.2,269.9 598.6,272.0 600.6,275.7 602.3,274.6 602.8,274.8 605.8,275.0 607.7,275.1 608.6,273.8"/>
<polygon points="593.5,278.7 594.7,276.1 598.2,275.8 600.6,275.7 598.6,272.0 599.2,269.9 598.7,268.3 598.6,266.3 599.1,263.9 596.5,265.1 592.7,264.9 592.4,266.2 591.9,268.4 589.6,271.9 590.9,272.4 592.1,273.8 592.6,276.0"/>
<polygon points="588.1,284.2 589.6,283.6 591.0,283.0 592.2,282.7 593.5,281.2 593.5,278.7 592.6,276.0 592.1,273.8 590.9,272.4 589.6,271.9 587.8,270.6 585.5,270.5 583.4,270.1 582.6,269.2 582.0,271.2 580.2,273.8 580.8,274.7 581.1,277.1 582.4,278.6 585.3,280.1 586.6,283.0"/>
<polygon points="631.7,278.3 632.0,280.3 632.9,284.6 633.4,286.0 633.0,286.9 634.8,288.4 636.7,291.6 638.1,291.4 638.3,289.6 641.0,289.9 641.0,287.6 641.0,285.4 641.0,283.2 641.0,281.0 641.0,279.6 641.0,278.1 637.6,278.8 636.0,279.2 634.4,279.1"/>
<polygon points="627.2,276.1 625.3,277.2 622.9,280.2 622.3,281.9 621.5,283.3 621.1,285.6 622.6,286.3 624.0,287.0 626.0,288.5 628.0,290.0 629.7,291.5 631.4,292.9 633.0,294.4 634.4,292.9 636.7,291.6 634.8,288.4 633.0,286.9 633.4,286.0 632.9,284.6 632.0,280.3 631.7,278.3 629.6,278.0 629.0,277.2"/>
<polygon points="607.2,282.0 609.4,282.3 611.6,282.5 613.8,282.8 616.0,283.0 617.7,283.9 619.4,284.7 621.1,285.6 621.5,283.3 622.3,281.9 622.9,280.2 621.7,278.5 619.0,277.8 616.2,277.7 614.8,275.4 611.4,275.8 609.9,274.0 608.6,273.8 607.7,275.1 608.7,277.5 607.3,279.7"/>
<polygon points="607.7,275.1 605.8,275.0 602.8,274.8 602.3,274.6 600.6,275.7 598.2,275.8 594.7,276.1 593.5,278.7 593.5,281.2 592.2,282.7 594.2,282.3 596.1,281.9 598.1,281.4 600.0,281.0 602.3,281.3 604.7,281.7 607.0,282.0 607.2,282.0 607.3,279.7 608.7,277.5"/>
<polygon points="570.8,284.7 570.9,285.3 572.5,287.4 574.4,288.0 575.7,289.4 577.9,291.5 579.9,291.0 582.0,290.5 584.0,290.0 584.0,288.0 584.0,286.0 586.1,285.1 588.1,284.2 586.6,283.0 585.3,280.1 582.4,278.6 581.1,277.1 580.8,274.7 577.2,276.7 573.9,278.7 573.6,278.2 572.7,278.5 569.5,280.1 569.8,281.8 570.1,284.5"/>
<polygon points="582.6,269.2 583.4,270.1 585.5,270.5 587.8,270.6 589.6,271.9 591.9,268.4 592.4,266.2 592.7,264.9 593.0,264.0 591.4,261.5 588.6,259.0 587.7,258.3 587.3,260.8 585.5,262.3 582.9,262.2 581.8,263.7 579.9,266.6 580.9,267.6"/>
<polygon points="525.8,234.1 523.9,235.1 523.0,236.4 522.6,239.0 522.9,239.9 523.4,240.6 525.0,242.4 526.5,244.3 529.4,243.9 530.8,245.1 531.7,247.0 534.8,247.0 536.6,248.4 538.0,248.3 539.0,247.1 541.5,245.2 542.4,243.8 543.5,242.3 540.3,241.5 538.8,241.6 535.6,239.4 533.2,239.0 532.2,237.6 529.1,237.2 527.4,236.2"/>
<polygon points="536.6,248.4 534.8,247.0 531.7,247.0 530.8,245.1 529.4,243.9 526.5,244.3 525.0,242.4 524.1,246.0 523.0,247.8 523.5,250.0 523.0,254.0 523.7,255.7 523.2,257.0 524.6,260.7 524.8,260.6 524.8,260.6 525.0,258.5 527.1,258.1 530.8,257.6 532.8,255.8 533.3,254.5 534.8,254.3 536.2,253.3 535.1,251.1"/>
<polygon points="547.4,254.1 545.9,251.9 544.7,250.8 544.0,250.0 542.9,248.1 541.5,245.2 539.0,247.1 538.0,248.3 536.6,248.4 535.1,251.1 536.2,253.3 534.8,254.3 536.8,254.7 539.2,256.4 540.4,257.9 543.5,258.1 544.6,257.8 546.9,256.5"/>
<polygon points="554.9,254.0 556.1,250.6 555.5,249.2 557.1,248.0 556.1,244.4 552.7,242.7 551.7,242.5 549.4,242.1 547.2,239.9 546.5,240.6 544.4,242.3 543.5,242.3 542.4,243.8 541.5,245.2 542.9,248.1 544.0,250.0 544.7,250.8 545.9,251.9 547.4,254.1 548.2,253.6 551.6,254.5 554.3,254.3"/>
<polygon points="561.6,255.7 563.2,254.6 566.0,254.5 568.1,253.9 568.9,253.4 571.2,252.5 571.5,250.4 570.2,249.1 568.1,247.5 566.1,247.2 565.8,244.6 562.7,243.8 560.2,241.7 560.1,242.3 558.5,242.3 556.1,244.4 557.1,248.0 555.5,249.2 556.1,250.6 554.9,254.0 556.2,254.9 559.7,255.6"/>
<polygon points="572.6,253.3 576.5,253.1 577.3,252.8 579.7,251.9 581.7,253.0 584.0,251.8 585.7,249.5 585.4,248.7 583.6,248.1 581.5,245.3 581.2,242.8 580.3,241.1 578.1,238.7 575.7,238.1 575.3,241.5 573.7,243.4 573.5,245.3 572.3,248.4 570.2,249.1 571.5,250.4 571.2,252.5"/>
<polygon points="547.4,254.1 546.9,256.5 544.6,257.8 543.5,258.1 542.9,260.8 542.5,263.3 543.0,265.2 541.9,267.6 542.3,270.7 544.6,272.2 547.0,271.7 548.2,272.8 549.9,271.8 550.8,269.6 553.3,269.1 554.0,267.3 554.3,263.7 554.3,262.7 552.7,260.1 554.6,257.3 554.3,255.9 554.3,254.3 551.6,254.5 548.2,253.6"/>
<polygon points="554.0,267.3 556.6,265.9 558.0,265.1 561.0,266.1 563.9,265.3 562.0,262.9 562.1,260.1 561.4,258.5 561.6,255.7 559.7,255.6 556.2,254.9 554.9,254.0 554.3,254.3 554.3,255.9 554.6,257.3 552.7,260.1 554.3,262.7 554.3,263.7"/>
<polygon points="563.9,265.3 565.2,265.6 566.1,267.6 568.9,268.3 570.0,265.1 571.5,264.3 573.4,264.2 573.1,259.9 574.7,257.8 573.7,256.0 572.6,253.3 571.2,252.5 568.9,253.4 568.1,253.9 566.0,254.5 563.2,254.6 561.6,255.7 561.4,258.5 562.1,260.1 562.0,262.9"/>
<polygon points="543.0,265.2 540.1,264.5 537.7,264.6 536.1,263.0 532.8,263.1 531.6,262.2 530.1,261.9 526.6,261.1 524.8,260.6 524.8,260.6 524.4,262.2 525.1,264.8 527.4,266.7 527.0,269.7 527.0,271.1 527.8,272.7 528.3,275.6 531.5,274.9 532.5,275.2 535.8,276.2 538.6,276.4 540.0,276.2 540.3,274.5 542.1,273.3 544.6,272.2 542.3,270.7 541.9,267.6"/>
<polygon points="549.9,271.8 552.3,273.6 553.3,276.2 553.3,277.4 556.6,276.3 559.1,277.8 560.8,276.0 563.6,276.7 566.0,276.7 567.5,276.7 566.7,275.3 568.7,272.9 568.1,270.8 568.5,269.2 568.9,268.3 566.1,267.6 565.2,265.6 563.9,265.3 561.0,266.1 558.0,265.1 556.6,265.9 554.0,267.3 553.3,269.1 550.8,269.6"/>
<polygon points="569.5,280.1 572.7,278.5 573.6,278.2 573.9,278.7 577.2,276.7 580.8,274.7 580.2,273.8 582.0,271.2 582.6,269.2 580.9,267.6 579.9,266.6 578.8,265.3 576.4,264.3 573.4,264.2 571.5,264.3 570.0,265.1 568.9,268.3 568.5,269.2 568.1,270.8 568.7,272.9 566.7,275.3 567.5,276.7 568.6,278.3"/>
<polygon points="553.3,277.4 553.7,277.8 553.4,280.1 553.2,283.6 554.8,284.6 553.2,286.7 554.2,290.8 555.6,292.6 558.8,292.4 560.5,294.4 561.6,292.1 562.3,289.8 565.1,289.6 567.2,288.6 568.4,286.2 570.8,284.7 570.1,284.5 569.8,281.8 569.5,280.1 568.6,278.3 567.5,276.7 566.0,276.7 563.6,276.7 560.8,276.0 559.1,277.8 556.6,276.3"/>
<polygon points="563.3,307.5 565.2,306.7 567.1,305.8 569.0,305.0 569.7,302.7 570.3,300.3 571.0,298.0 571.3,296.3 571.7,294.7 572.0,293.0 574.0,292.5 575.9,292.0 577.9,291.5 575.7,289.4 574.4,288.0 572.5,287.4 570.9,285.3 570.8,284.7 568.4,286.2 567.2,288.6 565.1,289.6 562.3,289.8 561.6,292.1 560.5,294.4 559.6,296.3 561.3,296.9 561.5,300.9 562.2,303.1 562.7,305.5"/>
<polygon points="429.4,246.4 430.1,244.9 428.9,242.2 430.7,239.8 429.4,238.3 431.0,235.8 431.1,233.6 431.4,232.0 432.0,231.4 430.2,229.2 427.4,230.4 425.3,230.9 425.1,232.8 423.0,234.6 420.4,234.7 418.7,236.3 415.8,239.7 414.0,240.4 415.6,241.7 417.8,242.1 418.6,244.2 419.1,247.9 420.7,249.8 422.0,250.0 424.9,249.9 425.3,249.5 426.0,247.4"/>
<polygon points="440.8,237.2 438.2,235.5 437.4,234.5 435.4,235.1 432.3,233.4 431.4,232.0 431.1,233.6 431.0,235.8 429.4,238.3 430.7,239.8 428.9,242.2 430.1,244.9 429.4,246.4 430.5,248.3 431.2,249.0 433.9,249.8 436.9,252.3 437.4,251.0 439.1,249.5 441.2,247.6 442.9,247.1 442.8,245.7 442.3,242.1 442.1,239.3 442.7,237.9"/>
<polygon points="447.1,277.5 447.5,277.9 448.9,274.5 450.5,271.8 451.2,270.6 453.0,268.0 453.1,266.8 454.1,265.8 454.2,263.6 454.4,261.0 453.1,260.1 450.4,259.1 447.8,258.9 446.9,260.1 443.1,259.8 441.7,260.4 440.2,259.3 435.7,258.8 433.8,262.4 434.1,264.5 432.1,265.6 433.9,266.0 436.9,267.8 438.1,269.8 440.1,270.3 442.2,272.8 442.3,274.1 444.3,275.1"/>
<polygon points="424.2,282.5 425.6,284.2 427.0,286.0 427.6,286.6 430.3,284.4 431.5,284.6 433.3,283.7 437.0,280.9 439.1,280.9 439.5,281.3 442.4,278.5 446.0,277.1 447.1,277.5 444.3,275.1 442.3,274.1 442.2,272.8 440.1,270.3 438.1,269.8 436.9,267.8 433.9,266.0 432.1,265.6 431.0,265.7 429.5,267.1 429.5,268.6 427.7,270.2 428.4,273.3 426.0,274.7 427.1,277.4 424.6,280.7"/>
<polygon points="630.2,244.4 630.2,246.5 629.1,247.1 629.1,249.3 630.6,251.4 630.3,254.8 631.3,254.1 632.7,255.2 636.3,256.3 638.0,256.0 640.1,256.7 640.0,255.0 639.4,253.0 638.8,251.0 638.2,249.0 637.6,247.0 637.0,245.0 636.0,243.7 635.0,242.3 632.4,242.9"/>
<polygon points="508.1,319.0 506.8,319.0 503.7,316.7 502.3,317.5 499.9,315.7 496.7,314.9 495.4,314.3 492.0,313.2 489.9,312.4 489.1,312.2 487.5,314.0 487.5,317.2 486.0,318.3 485.6,320.6 484.6,324.0 483.8,326.1 483.2,328.7 482.5,331.1 483.0,331.0 483.7,329.0 484.3,327.0 485.0,325.0 487.0,324.7 489.0,324.3 491.0,324.0 493.5,324.0 496.0,324.0 498.5,324.0 501.0,324.0 502.8,322.8 504.7,321.7 506.5,320.5 508.4,319.4"/>
<polygon points="409.6,339.4 408.5,336.8 409.7,335.0 408.6,333.2 406.9,331.9 406.9,328.2 406.4,326.6 404.7,328.3 403.0,330.0 401.2,331.8 399.5,333.5 397.8,335.2 396.0,337.0 397.7,337.7 399.3,338.3 401.0,339.0 403.1,339.3 405.2,339.7 407.3,340.0 409.4,340.4"/>
<polygon points="636.7,291.6 634.4,292.9 633.0,294.4 634.5,295.7 636.0,297.0 638.5,297.0 641.0,297.0 641.0,294.6 641.0,292.2 641.0,289.9 638.3,289.6 638.1,291.4"/></g>
<g font-family="Liberation Sans, sans-serif" text-anchor="middle" fill="#2a2a3a" fill-opacity="0.58">
<text x="634" y="260" font-size="7.2">João Pessoa</text>
<text x="537" y="268.8" font-size="7.2">Campina Grande</text><text x="531" y="256" font-size="6">Pocinhos</text>
<text x="401" y="247" font-size="5.5">Patos</text>
</g>
<g font-family="Liberation Sans, sans-serif" text-anchor="middle" stroke-linejoin="round">
<text x="394.7" y="70" font-size="5.5" fill="#333" stroke="#e9e6e0" stroke-width="0.8" stroke-opacity="0.8" paint-order="stroke">Mossoró</text>
<text x="602.5" y="130.5" font-size="7" fill="#222" stroke="#e9e6e0" stroke-width="0.8" stroke-opacity="0.8" paint-order="stroke">Natal</text>
<text x="596.5" y="140.7" font-size="5.3" fill="#333" stroke="#e9e6e0" stroke-width="0.8" stroke-opacity="0.8" paint-order="stroke">Parnamirim</text>
<text x="203" y="185" font-size="5" fill="#333" stroke="#e9e6e0" stroke-width="0.8" stroke-opacity="0.8" paint-order="stroke">Iguatu</text>
<text x="200" y="265" font-size="5.5" fill="#333" stroke="#e9e6e0" stroke-width="0.8" stroke-opacity="0.8" paint-order="stroke">Juazeiro</text>
<text x="200" y="272" font-size="5.5" fill="#333" stroke="#e9e6e0" stroke-width="0.8" stroke-opacity="0.8" paint-order="stroke">do Norte</text>
<text x="89" y="480.5" font-size="5.5" fill="#222" stroke="#e9e6e0" stroke-width="0.8" stroke-opacity="0.8" paint-order="stroke">Petrolina</text>
<text x="312.7" y="482.4" font-size="5.5" fill="#333" stroke="#e9e6e0" stroke-width="0.8" stroke-opacity="0.8" paint-order="stroke">Paulo Afonso</text>
<text x="477.7" y="432.2" font-size="5.5" fill="#333" stroke="#e9e6e0" stroke-width="0.8" stroke-opacity="0.8" paint-order="stroke">Garanhuns</text>
<text x="461.2" y="517.4" font-size="5.8" fill="#333" stroke="#e9e6e0" stroke-width="0.8" stroke-opacity="0.8" paint-order="stroke">Arapiraca</text>
<text x="548.7" y="507" font-size="7.2" fill="#222" stroke="#e9e6e0" stroke-width="0.8" stroke-opacity="0.8" paint-order="stroke">Maceió</text>
<text x="528" y="373.5" font-size="5.5" fill="#333" stroke="#e9e6e0" stroke-width="0.8" stroke-opacity="0.8" paint-order="stroke">Caruaru</text>
<text x="505.4" y="336.3" font-size="5.5" fill="#333" stroke="#e9e6e0" stroke-width="0.8" stroke-opacity="0.8" paint-order="stroke">Santa Cruz</text>
<text x="505.4" y="343" font-size="5.5" fill="#333" stroke="#e9e6e0" stroke-width="0.8" stroke-opacity="0.8" paint-order="stroke">do Capibaribe</text>
<text x="594.3" y="353" font-size="5.5" fill="#333" stroke="#e9e6e0" stroke-width="0.8" stroke-opacity="0.8" paint-order="stroke">Vitória de</text>
<text x="594.3" y="360" font-size="5.5" fill="#333" stroke="#e9e6e0" stroke-width="0.8" stroke-opacity="0.8" paint-order="stroke">Santo Antão</text>
<text x="634" y="351.5" font-size="7" fill="#222" stroke="#e9e6e0" stroke-width="0.8" stroke-opacity="0.8" paint-order="stroke">Recife</text>
<text x="618.7" y="369" font-size="5.5" fill="#333" stroke="#e9e6e0" stroke-width="0.8" stroke-opacity="0.8" paint-order="stroke">Cabo de</text>
<text x="618.7" y="376" font-size="5.5" fill="#333" stroke="#e9e6e0" stroke-width="0.8" stroke-opacity="0.8" paint-order="stroke">Santo Agostinho</text>
<text x="631.7" y="329" font-size="5.3" fill="#333" stroke="#e9e6e0" stroke-width="0.8" stroke-opacity="0.8" paint-order="stroke">Igarassu</text>
<text x="635" y="338" font-size="5.3" fill="#333" stroke="#e9e6e0" stroke-width="0.8" stroke-opacity="0.8" paint-order="stroke">Paulista</text>
<text x="473.5" y="104.5" font-size="5.5" font-style="italic" fill="#8a4a8e" stroke="#eeeeea" stroke-width="1" stroke-opacity="0.7" paint-order="stroke">Rio Grande</text>
<text x="473.5" y="111.5" font-size="5.5" font-style="italic" fill="#8a4a8e" stroke="#eeeeea" stroke-width="1" stroke-opacity="0.7" paint-order="stroke">do Norte</text>
<text x="108" y="268" font-size="6" font-style="italic" fill="#357535" stroke="#eeeeea" stroke-width="1" stroke-opacity="0.7" paint-order="stroke">Área de</text>
<text x="108" y="276" font-size="6" font-style="italic" fill="#357535" stroke="#eeeeea" stroke-width="1" stroke-opacity="0.7" paint-order="stroke">Proteção</text>
<text x="108" y="284" font-size="6" font-style="italic" fill="#357535" stroke="#eeeeea" stroke-width="1" stroke-opacity="0.7" paint-order="stroke">Ambiental</text>
<text x="108" y="292" font-size="6" font-style="italic" fill="#357535" stroke="#eeeeea" stroke-width="1" stroke-opacity="0.7" paint-order="stroke">Chapada</text>
<text x="108" y="300" font-size="6" font-style="italic" fill="#357535" stroke="#eeeeea" stroke-width="1" stroke-opacity="0.7" paint-order="stroke">do Araripe</text>
<text x="505.6" y="514" font-size="6" font-style="italic" fill="#8a4a8e" stroke="#eeeeea" stroke-width="1" stroke-opacity="0.7" paint-order="stroke">Alagoas</text>
<text x="609" y="456" font-size="5.2" font-style="italic" fill="#3d7d3d" stroke="#eeeeea" stroke-width="1" stroke-opacity="0.7" paint-order="stroke">Área de</text>
<text x="609" y="463" font-size="5.2" font-style="italic" fill="#3d7d3d" stroke="#eeeeea" stroke-width="1" stroke-opacity="0.7" paint-order="stroke">Proteção</text>
<text x="609" y="470" font-size="5.2" font-style="italic" fill="#3d7d3d" stroke="#eeeeea" stroke-width="1" stroke-opacity="0.7" paint-order="stroke">Ambiental</text>
<text x="609" y="477" font-size="5.2" font-style="italic" fill="#3d7d3d" stroke="#eeeeea" stroke-width="1" stroke-opacity="0.7" paint-order="stroke">Costa dos</text>
<text x="609" y="484" font-size="5.2" font-style="italic" fill="#3d7d3d" stroke="#eeeeea" stroke-width="1" stroke-opacity="0.7" paint-order="stroke">Corais</text>
</g>
</svg></div>
<div id="title">Monitoramento dos Portais de Transparência na PB</div>
<div id="search"><span>Município</span>
 <svg style="position:absolute;left:211.5px;top:7.8px" width="11" height="11" viewBox="0 0 11 11"><circle cx="4.4" cy="4.4" r="3.0" fill="none" stroke="#5a5a5a" stroke-width="1.15"/><path d="M6.6 6.6 L9.6 9.6" stroke="#5a5a5a" stroke-width="1.4" stroke-linecap="round"/></svg>
</div>
<div id="panel">
 <div class="row" style="top:0;background:#3bb77c;font-weight:700">
  <svg style="position:absolute;left:2px;top:1.3px" width="17" height="17" viewBox="0 0 17 17"><circle cx="8.5" cy="8.5" r="7.7" fill="#fff"/><path d="M8.5 1.6 A6.9 6.9 0 0 0 8.5 15.4 Z" fill="#111"/><path d="M8.5 1.6 A6.9 6.9 0 0 1 8.5 15.4 Z" fill="#e8141c"/><rect x="10" y="8" width="2.2" height="0.9" fill="#f8b0b0"/></svg>
  <span class="m">Estado da Paraíba</span><span class="v" style="font-weight:400">275/880</span></div>
 <div class="row" style="top:23.45px;background:#440154"><span class="n">#1</span><span class="m" style="left:24px">Casserengue</span><span class="v">830/880</span></div>
<div class="row" style="top:46.90px;background:#48186c"><span class="n">#2</span><span class="m" style="left:24px">Igaracy</span><span class="v">790/880</span></div>
<div class="row" style="top:70.35px;background:#48186c"><span class="n">#3</span><span class="m" style="left:24px">Cajazeirinhas</span><span class="v">790/880</span></div>
<div class="row" style="top:93.80px;background:#48186c"><span class="n">#4</span><span class="m" style="left:24px">Remígio</span><span class="v">780/880</span></div>
<div class="row" style="top:117.25px;background:#48186c"><span class="n">#5</span><span class="m" style="left:24px">Juazeirinho</span><span class="v">777.5/880</span></div>
<div class="row" style="top:140.70px;background:#48186c"><span class="n">#6</span><span class="m" style="left:24px">João Pessoa</span><span class="v">775/880</span></div>
<div class="row" style="top:164.15px;background:#48186c"><span class="n">#7</span><span class="m" style="left:24px">Itapororoca</span><span class="v">775/880</span></div>
<div class="row" style="top:187.60px;background:#48186c"><span class="n">#8</span><span class="m" style="left:24px">Juarez Távora</span><span class="v">775/880</span></div>
<div class="row" style="top:211.05px;background:#48186c"><span class="n">#9</span><span class="m" style="left:24px">Cabedelo</span><span class="v">767.5/880</span></div>
<div class="row" style="top:234.50px;background:#48186c"><span class="n">#10</span><span class="m" style="left:29px">São João do Tigre</span><span class="v">765/880</span></div>
 <div class="row" style="top:258px;height:22px;font-weight:700">
  <svg style="position:absolute;left:12px;top:5.4px" width="8" height="10" viewBox="0 0 8 10"><path d="M6 1 L2 5 L6 9" fill="none" stroke="#fff" stroke-width="2"/></svg>
  <span style="position:absolute;left:97px;top:6.1px;font-size:8.9px">1/23</span>
  <svg style="position:absolute;left:191px;top:5.4px" width="8" height="10" viewBox="0 0 8 10"><path d="M2 1 L6 5 L2 9" fill="none" stroke="#fff" stroke-width="2"/></svg>
 </div>
</div>
<div id="legend">
 <div style="position:absolute;left:6px;top:8px">Pontuação</div>
 <div class="it" style="top:18.0px"><div class="sw" style="background:#d3d3d3"></div><div class="lb">sem avaliação</div></div>
<div class="it" style="top:27.6px"><div class="sw" style="background:#e9e22e"></div><div class="lb">entre 0 e 50</div></div>
<div class="it" style="top:37.2px"><div class="sw" style="background:#b7da3e"></div><div class="lb">entre 51 e 100</div></div>
<div class="it" style="top:46.8px"><div class="sw" style="background:#3aa98c"></div><div class="lb">entre 101 e 350</div></div>
<div class="it" style="top:56.4px"><div class="sw" style="background:#4b78a0"></div><div class="lb">entre 351 e 600</div></div>
<div class="it" style="top:66.0px"><div class="sw" style="background:#55307e"></div><div class="lb">entre 601 e 850</div></div>
<div class="it" style="top:75.6px"><div class="sw" style="background:#4a1a62"></div><div class="lb">maior que 851</div></div>
</div>
<div id="attr"><span style="position:absolute;left:3px;top:1px">Leaflet</span><div style="position:absolute;left:22px;top:2px;width:1px;height:5px;background:#99a"></div><div style="position:absolute;left:25px;top:5px;width:5px;height:1px;background:#bbb"></div></div>
<div id="botline"></div>
</body></html>
